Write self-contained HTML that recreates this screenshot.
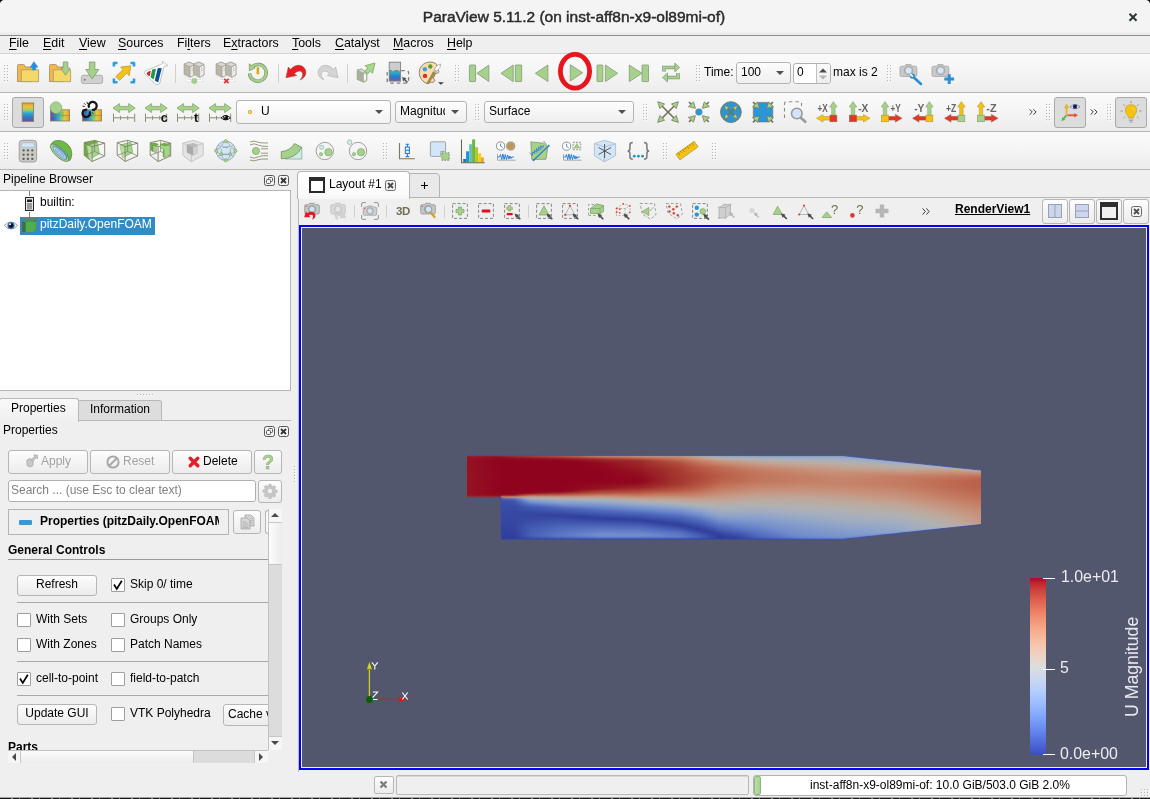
<!DOCTYPE html>
<html><head><meta charset="utf-8"><title>ParaView</title>
<style>
*{box-sizing:border-box;margin:0;padding:0}
html,body{width:1150px;height:799px;overflow:hidden;background:#efefef}
body{position:relative;font-family:"Liberation Sans",sans-serif;font-size:12px;color:#000;line-height:14px}
.a{position:absolute}
.t{position:absolute;white-space:nowrap}
svg,.t,.menu{will-change:transform}
svg{position:absolute;overflow:visible}
#titlebar{left:0;top:0;width:1150px;height:35px;background:#f4f4f4}
#titleline{left:0;top:35px;width:1150px;height:1px;background:#8e8e8e}
#title{left:-1px;width:1150px;text-align:center;top:8px;font-size:15.5px;line-height:18px;color:#2a2a2a;-webkit-text-stroke:0.45px #2a2a2a}
.hl{position:absolute;height:1px;background:#c6c6c6}
.vl{position:absolute;width:1px;background:#c6c6c6}
.menu{position:absolute;top:35px;height:16px;line-height:16px;margin-left:-1px;font-size:12.4px}
.menu u{text-decoration:underline;text-underline-offset:2px}
.hd{position:absolute;width:6px;background-image:radial-gradient(circle,#b4b4b4 0.6px,transparent 0.95px),radial-gradient(circle,#fff 0.6px,transparent 0.95px);background-size:3px 3px;background-position:0 0,1px 1px}
.btn{position:absolute;border:1px solid #b6b6b6;border-radius:3px;background:linear-gradient(#fdfdfd,#ececec)}
.pressed{position:absolute;border:1px solid #a9a9a9;border-radius:3px;background:#dcdcdc}
.combo{position:absolute;border:1px solid #b4b4b4;border-radius:3px;background:linear-gradient(#fdfdfd,#efefef)}
.arr{position:absolute;width:0;height:0;border-left:4px solid transparent;border-right:4px solid transparent;border-top:4.5px solid #505050;margin-top:.5px}
.cb{position:absolute;width:14px;height:14px;border:1px solid #9f9f9f;background:#fff;border-radius:1px}
#flow i{flex:1 1 0;display:block;height:100%}
</style></head><body>
<div class="a" id="titlebar"></div><div class="a" style="left:0;top:31px;width:1150px;height:4px;background:linear-gradient(#f4f4f4,#e8e8e8)"></div><div class="a" id="titleline"></div>
<div class="t" id="title">ParaView 5.11.2 (on inst-aff8n-x9-ol89mi-of)</div>
<svg style="left:1128px;top:12px" width="10" height="10" viewBox="0 0 10 10"><path d="M1.500 1.700L8.500 8.700M8.500 1.700L1.500 8.700" stroke="#2e3436" stroke-width="2"/></svg>
<svg style="left:0;top:0" width="4" height="4"><path d="M0 0H3.5Q0.5 0.5 0 3.5Z" fill="#000"/></svg>
<svg style="left:1146px;top:0" width="4" height="4"><path d="M4 0H0.5Q3.5 0.5 4 3.5Z" fill="#000"/></svg>
<div class="menu" style="left:10px"><u>F</u>ile</div>
<div class="menu" style="left:44px"><u>E</u>dit</div>
<div class="menu" style="left:80px"><u>V</u>iew</div>
<div class="menu" style="left:119px"><u>S</u>ources</div>
<div class="menu" style="left:178px">Fi<u>l</u>ters</div>
<div class="menu" style="left:224px">E<u>x</u>tractors</div>
<div class="menu" style="left:293px"><u>T</u>ools</div>
<div class="menu" style="left:336px"><u>C</u>atalyst</div>
<div class="menu" style="left:394px"><u>M</u>acros</div>
<div class="menu" style="left:448px"><u>H</u>elp</div>
<div class="a" style="left:0;top:54px;width:1150px;height:38px;background:linear-gradient(#fafafa,#f6f6f6 40%,#ececec)"></div>
<div class="a" style="left:0;top:93px;width:1150px;height:38px;background:linear-gradient(#fafafa,#f6f6f6 40%,#ececec)"></div>
<div class="a" style="left:0;top:132px;width:1150px;height:37px;background:linear-gradient(#fafafa,#f6f6f6 40%,#ececec)"></div>
<div class="hl" style="left:0;top:53px;width:1150px;background:#d2d2d2"></div>
<div class="hl" style="left:0;top:92px;width:1150px;background:#b6b6b6"></div>
<div class="hl" style="left:0;top:131px;width:1150px;background:#b6b6b6"></div>
<div class="hl" style="left:0;top:169px;width:1150px;background:#b6b6b6"></div>
<div class="hd" style="left:3px;top:64px;height:18px"></div>
<svg style="left:16px;top:60px" width="24" height="24" viewBox="0 0 24 24"><path d="M1.500 21.500V5.500Q1.500 4.500 2.500 4.500H7.500Q8.500 4.500 8.800 5.500L9.200 7H15V21.500Z" fill="#f2b84e" stroke="#a08c5e" stroke-width=".8"/>
<path d="M5.300 9.800H22.600V21.700H5.300Z" fill="#f5d968" stroke="#a3966a" stroke-width=".8"/>
<path d="M17.900 1.700L21.900 7.200H19.700V9.800H16.200V7.200H14.300Z" fill="#1e8fdc" stroke="#2f7fb5" stroke-width=".5"/></svg>
<svg style="left:48px;top:60px" width="24" height="24" viewBox="0 0 24 24"><path d="M1.500 21.500V5.500Q1.500 4.500 2.500 4.500H7.500Q8.500 4.500 8.800 5.500L9.200 7H15V21.500Z" fill="#f2b84e" stroke="#a08c5e" stroke-width=".8"/>
<path d="M5.300 9.800H22.600V21.700H5.300Z" fill="#f5d968" stroke="#a3966a" stroke-width=".8"/>
<path d="M15.200 2H19.800V8.200H22.200L17.500 15.200L12.900 8.200H15.200Z" fill="#a6d18b" stroke="#7f9a6c" stroke-width=".8"/></svg>
<svg style="left:80px;top:60px" width="24" height="24" viewBox="0 0 24 24"><rect x="1.400" y="15.300" width="21.200" height="8.300" rx="2" fill="#cfd0cf" stroke="#a0a0a0" stroke-width=".8"/>
<circle cx="4.700" cy="19.700" r="1" fill="#777"/>
<path d="M9.400 2H14.900V9.500H18.800L12.200 18.900L5.700 9.500H9.400Z" fill="#a6d18b" stroke="#7f9a6c" stroke-width=".8"/></svg>
<svg style="left:112px;top:60px" width="24" height="24" viewBox="0 0 24 24"><g fill="none" stroke="#2a9fe0" stroke-width="2.600" stroke-linejoin="round"><path d="M1.900 6.500V3H5.500"/><path d="M18.500 3H22V6.500"/><path d="M1.900 18.500V22.300H5.500"/><path d="M18.500 22.300H22V18.500"/></g>
<path d="M18.800 5.800L17.200 15.700L14.600 13.100L7.600 20.400L3.800 16.600L11.100 9.600L8.600 7.100Z" fill="#f5c211" stroke="#a8904a" stroke-width=".7"/></svg>
<svg style="left:143px;top:60px" width="26" height="26" viewBox="0 0 26 26"><path d="M19.300 1.200L25 5.700L21.300 6.200L20.600 7.800L16.800 23Q16.300 24.900 14 24.600Q12.500 24.300 11.500 23.300L1.800 13.600Q.6 12 2.400 11L17.500 4.600L19.600 3.600Z" fill="#fff" stroke="#bcbcbc" stroke-width=".9" stroke-linejoin="round"/>
<path d="M7.700 10.800Q4.200 11.300 3.600 13.400Q4.300 15.400 6.800 16.200Z" fill="#d01f2c"/>
<path d="M9.200 9.600L13 8.800L10.800 19.400L7.500 17.300Z" fill="#1f9a44"/>
<path d="M14.800 8.100L18.800 8.300L15.200 22.400L11.800 20.500Z" fill="#0f4d92"/></svg>
<div class="vl" style="left:175px;top:64px;height:19px;background:#d0d0d0"></div>
<svg style="left:182px;top:60px" width="24" height="24" viewBox="0 0 24 24"><path d="M5 16.500V20.700H19.500V16.500" fill="none" stroke="#d4d4d4" stroke-width="2.400"/><path d="M5 16.500V20.700H19.500V16.500" fill="none" stroke="#fff" stroke-width="1.500"/>
<g stroke="#9a9a92" stroke-width=".6"><path d="M2 4.200L7.200 2L12.600 4.500V15L8 17.300L2 14.200Z" fill="#b6b7a6"/><path d="M8 6.800L12.600 4.500V15L8 17.300Z" fill="#f1e6ea"/><path d="M2 4.200L7.200 2L12.600 4.500L8 6.800Z" fill="#d8d8d0"/>
<path d="M11.500 4.200L16.700 2L22 4.500V15L17.400 17.300L11.500 14.200Z" fill="#b6b7a6"/><path d="M17.400 6.800L22 4.500V15L17.400 17.300Z" fill="#f1e6ea"/><path d="M11.500 4.200L16.700 2L22 4.500L17.400 6.800Z" fill="#d8d8d0"/></g>
<path d="M9.500 8.500H11M9.500 10.500H11M19 8.500H20.500M19 10.500H20.500" stroke="#aaa" stroke-width=".6"/><circle cx="12.300" cy="21" r="2.700" fill="#a6d18b" stroke="#94c27a" stroke-width=".5"/></svg>
<svg style="left:214px;top:60px" width="24" height="24" viewBox="0 0 24 24"><path d="M5 16.500V20.700H19.500V16.500" fill="none" stroke="#d4d4d4" stroke-width="2.400"/><path d="M5 16.500V20.700H19.500V16.500" fill="none" stroke="#fff" stroke-width="1.500"/>
<g stroke="#9a9a92" stroke-width=".6"><path d="M2 4.200L7.200 2L12.600 4.500V15L8 17.300L2 14.200Z" fill="#b6b7a6"/><path d="M8 6.800L12.600 4.500V15L8 17.300Z" fill="#f1e6ea"/><path d="M2 4.200L7.200 2L12.600 4.500L8 6.800Z" fill="#d8d8d0"/>
<path d="M11.500 4.200L16.700 2L22 4.500V15L17.400 17.300L11.500 14.200Z" fill="#b6b7a6"/><path d="M17.400 6.800L22 4.500V15L17.400 17.300Z" fill="#f1e6ea"/><path d="M11.500 4.200L16.700 2L22 4.500L17.400 6.800Z" fill="#d8d8d0"/></g>
<path d="M9.500 8.500H11M9.500 10.500H11M19 8.500H20.500M19 10.500H20.500" stroke="#aaa" stroke-width=".6"/><path d="M10.200 18.800L14.600 23.200M14.600 18.800L10.200 23.200" stroke="#e2323a" stroke-width="1.700"/></svg>
<svg style="left:246px;top:60px" width="24" height="24" viewBox="0 0 24 24"><path d="M3.550 13.300A8.350 8.350 0 1 0 6.200 6.700" fill="none" stroke="#7d8f6a" stroke-width="3.500"/><path d="M3.550 13.300A8.350 8.350 0 1 0 6.200 6.700" fill="none" stroke="#a6d18b" stroke-width="2.300"/>
<path d="M3.300 3.800V10.800L9.200 8.100Z" fill="#a6d18b" stroke="#7d8f6a" stroke-width=".7" stroke-linejoin="round"/><path d="M5.500 8.300L7.500 6.300" stroke="#a6d18b" stroke-width="2.200"/>
<path d="M11.900 7.300V13" stroke="#cfa324" stroke-width="2.500"/><circle cx="11.900" cy="13.100" r="1.500" fill="#e6ae14"/></svg>
<div class="vl" style="left:278px;top:64px;height:19px;background:#d0d0d0"></div>
<svg style="left:283px;top:60px" width="24" height="24" viewBox="0 0 24 24"><path d="M3 17.700L5.300 7.100L7.600 9.400Q11 5.200 15.900 5.200Q22.500 6 22.900 12.700Q22.500 17.500 17.300 19.900Q20 16.500 19.800 14Q19.200 11 16.500 11Q13.500 11 11.200 13.800L13.700 15.500Z" fill="#ec1c24" stroke="#9a4a38" stroke-width=".6" stroke-linejoin="round"/></svg>
<svg style="left:316.9px;top:60px" width="24" height="24" viewBox="0 0 24 24"><g transform="translate(24 0) scale(-1 1)"><path d="M3 17.700L5.300 7.100L7.600 9.400Q11 5.200 15.900 5.200Q22.500 6 22.900 12.700Q22.500 17.500 17.300 19.900Q20 16.500 19.800 14Q19.200 11 16.500 11Q13.500 11 11.200 13.800L13.700 15.500Z" fill="#d4d4d4" stroke="#b4b4b4" stroke-width=".7" stroke-linejoin="round"/></g></svg>
<div class="vl" style="left:347px;top:64px;height:19px;background:#d0d0d0"></div>
<svg style="left:353px;top:60px" width="24" height="24" viewBox="0 0 24 24"><path d="M22 3L12 5.700L14.800 8L11.500 11.300L14.300 14.200L17.600 11L19.500 13.300Z" fill="#a6d98b" stroke="#86a86e" stroke-width=".9" stroke-linejoin="round"/>
<g stroke="#90a884" stroke-width=".8" stroke-linejoin="round"><path d="M4.200 10.200L8.700 9.100L13.700 12.700V20.500L10.400 22.200L4.200 19.400Z" fill="#adad9f"/><path d="M10.100 13L13.700 12.700V20.500L10.400 22.200Z" fill="#efe8ec"/><path d="M4.200 10.200L8.700 9.100L13.700 12.700L10.100 13Z" fill="#dcdcd6"/></g><path d="M11.800 15V19.500" stroke="#fff" stroke-width="1.200"/></svg>
<svg style="left:385px;top:60px" width="24" height="24" viewBox="0 0 24 24"><defs><linearGradient id="gcb" x1="0" y1="0" x2="0" y2="1"><stop offset="0" stop-color="#48b8a0"/><stop offset=".35" stop-color="#1e9ad8"/><stop offset=".6" stop-color="#2a78c0"/><stop offset="1" stop-color="#8058a8"/></linearGradient></defs>
<rect x="4.200" y="2.200" width="11.400" height="8.800" fill="#cdcdcd"/><rect x="4.200" y="10.800" width="11.400" height="10.300" fill="url(#gcb)"/>
<rect x="4.200" y="2.200" width="11.400" height="18.900" fill="none" stroke="#808080" stroke-width=".9"/>
<rect x="2.200" y="10.600" width="21.400" height="12.600" rx="2" fill="none" stroke="#7c7c7c" stroke-width="1.300" stroke-dasharray="3.500 3" stroke-dashoffset="1"/>
<path d="M16.800 16.800L22 18.200L20.600 19.300L23.200 21.900L21.900 23.200L19.300 20.600L18.200 22Z" fill="#505050" stroke="#e8e8e8" stroke-width=".4"/></svg>
<svg style="left:418px;top:60px" width="26" height="26" viewBox="0 0 26 26"><path d="M10.500 2.200C14 1.600 17 2.800 18.600 4.400L20.500 11C21.300 11.200 21.200 12.600 19.800 13L17.500 13.500L15 18.600C16.500 18.600 17.200 20 16.500 21.200C15.800 22.300 14 22.600 13 22L9.600 23.600C5 22.500 1.300 18 1.300 12.500C1.300 7 5.200 3 10.500 2.200Z" fill="#fbdcae" stroke="#7c7858" stroke-width=".9" stroke-linejoin="round"/>
<circle cx="6.900" cy="9.200" r="2.200" fill="#38a4e4"/><circle cx="12.300" cy="6.500" r="2.200" fill="#5c9c38"/><circle cx="7" cy="15.900" r="2.200" fill="#e02c20"/>
<path d="M15.200 11.800L17.300 13L10.400 23.800L8.900 23.200Z" fill="#a88a3c" stroke="#7c7040" stroke-width=".5"/>
<path d="M15 11.600L16.600 9.800L18.600 11L17.400 13Z" fill="#c8c8c8" stroke="#8a8a80" stroke-width=".4"/>
<path d="M22.700 4Q23 8 18.700 11L16.600 9.800Q17.500 5.500 22.700 4Z" fill="#fff" stroke="#8c8c78" stroke-width=".6"/>
<path d="M20 22.300H25.800L22.900 24.800Z" fill="#3c3c3c"/></svg>
<div class="hd" style="left:454px;top:64px;height:18px"></div>
<svg style="left:467px;top:60px" width="24" height="24" viewBox="0 0 24 24"><g fill="#a6d18b" stroke="#84987a" stroke-width=".8"><rect x="2.400" y="5" width="6.200" height="16.600" rx=".6"/><path d="M10 13.300L21.800 5V21.600Z"/></g></svg>
<svg style="left:499px;top:60px" width="24" height="24" viewBox="0 0 24 24"><g fill="#a6d18b" stroke="#84987a" stroke-width=".8"><path d="M2 13.300L14.200 5V21.600Z"/><rect x="16.300" y="5" width="6.400" height="16.600" rx=".6"/></g></svg>
<svg style="left:531px;top:60px" width="24" height="24" viewBox="0 0 24 24"><g fill="#a6d18b" stroke="#84987a" stroke-width=".8"><path d="M4.400 13.300L16.900 5V21.600Z"/></g></svg>
<svg style="left:563px;top:60px" width="24" height="24" viewBox="0 0 24 24"><g fill="#a6d18b" stroke="#84987a" stroke-width=".8"><path d="M19.600 12.800L7.300 4.700V21Z"/></g></svg>
<svg style="left:595px;top:60px" width="24" height="24" viewBox="0 0 24 24"><g fill="#a6d18b" stroke="#84987a" stroke-width=".8"><rect x="2" y="5" width="5.800" height="16.600" rx=".6"/><path d="M22.600 13.300L10.400 5V21.600Z"/></g></svg>
<svg style="left:627px;top:60px" width="24" height="24" viewBox="0 0 24 24"><g fill="#a6d18b" stroke="#84987a" stroke-width=".8"><path d="M15 13.300L2.300 5V21.600Z"/><rect x="15" y="5" width="6.500" height="16.600" rx=".6"/></g></svg>
<svg style="left:659px;top:60px" width="24" height="24" viewBox="0 0 24 24"><g fill="none" stroke="#84987a" stroke-width="3.600" stroke-linejoin="miter"><path d="M5 11.500V7.500H17"/><path d="M19 13V17.500H7.500"/></g><g fill="none" stroke="#a6d18b" stroke-width="2.200"><path d="M5 11.500V7.500H17"/><path d="M19 13V17.500H7.500"/></g><g fill="#a6d18b" stroke="#84987a" stroke-width=".7"><path d="M15.800 3L20.600 7.500L15.800 12Z"/><path d="M8.500 13L3.500 17.500L8.500 22Z"/></g></svg>
<svg style="left:557px;top:51px" width="36" height="41" viewBox="0 0 36 41"><ellipse cx="18" cy="20.300" rx="14.600" ry="16.900" fill="none" stroke="#e8141e" stroke-width="4.800"/></svg>
<div class="hd" style="left:695px;top:64px;height:18px"></div>
<div class="t" style="left:703.500px;top:65px">Time:</div>
<div class="combo" style="left:736px;top:62px;width:55px;height:22px"></div><div class="t" style="left:740.500px;top:65px">100</div><div class="arr" style="left:776px;top:70px"></div>
<div class="a" style="left:793px;top:63px;width:38px;height:21px;background:#fff;border:1px solid #b0b0b0;border-radius:3px"></div><div class="a" style="left:816px;top:64px;width:14px;height:19px;background:linear-gradient(#fbfbfb,#ededed);border-left:1px solid #c0c0c0;border-radius:0 2px 2px 0"></div><div class="t" style="left:797px;top:65px">0</div>
<svg style="left:819px;top:68px" width="8" height="12" viewBox="0 0 8 12"><path d="M0 4.500L4 .5L8 4.500Z" fill="#4a4a4a"/><path d="M0 7.500L4 11.500L8 7.500Z" fill="#b4b4b4"/></svg>
<div class="t" style="left:832.500px;top:65px">max is 2</div>
<div class="hd" style="left:886px;top:64px;height:18px"></div>
<svg style="left:898px;top:60px" width="26" height="26" viewBox="0 0 26 26"><path d="M3.600 6.200H6.500L7.800 4.600H13L14.300 6.200H17.200Q18.800 6.200 18.800 7.800V14.800Q18.800 16.400 17.200 16.400H3.600Q2 16.400 2 14.800V7.800Q2 6.200 3.600 6.200Z" fill="#c9c9c9" stroke="#a2a2a2" stroke-width=".8"/>
<circle cx="10.600" cy="10.500" r="4.300" fill="#b8b8b8" stroke="#999" stroke-width=".6"/><circle cx="10.600" cy="10.500" r="2.900" fill="#d2e8fb"/><path d="M14.200 16L23 24" stroke="#2a8fd0" stroke-width="2.600" stroke-linecap="round"/><circle cx="14.400" cy="16" r="2.600" fill="#2a8fd0"/><path d="M12.200 14.200L15 16.600" stroke="#f4f4f4" stroke-width="1.800"/></svg>
<svg style="left:930px;top:60px" width="26" height="26" viewBox="0 0 26 26"><path d="M3.600 6.200H6.500L7.800 4.600H13L14.300 6.200H17.200Q18.800 6.200 18.800 7.800V14.800Q18.800 16.400 17.200 16.400H3.600Q2 16.400 2 14.800V7.800Q2 6.200 3.600 6.200Z" fill="#c9c9c9" stroke="#a2a2a2" stroke-width=".8"/>
<circle cx="10.600" cy="10.500" r="4.300" fill="#b8b8b8" stroke="#999" stroke-width=".6"/><circle cx="10.600" cy="10.500" r="2.900" fill="#d2e8fb"/><path d="M19.200 14.200V24M14.300 19.100H24.100" stroke="#2a8fd0" stroke-width="3"/></svg>
<div class="hd" style="left:3px;top:103px;height:18px"></div>
<div class="pressed" style="left:12px;top:97px;width:32px;height:31px"></div>
<svg style="left:16px;top:99.7px" width="24" height="24" viewBox="0 0 24 24"><defs><linearGradient id="gv" x1="0" y1="0" x2="0" y2="1"><stop offset="0" stop-color="#e89a28"/><stop offset=".22" stop-color="#e6c83c"/><stop offset=".42" stop-color="#8cc878"/><stop offset=".55" stop-color="#2aa8d8"/><stop offset=".75" stop-color="#2a80c8"/><stop offset="1" stop-color="#6e4a9c"/></linearGradient>
<linearGradient id="gh" x1="0" y1="0" x2="1" y2="0"><stop offset="0" stop-color="#70489c"/><stop offset=".18" stop-color="#3a6cc0"/><stop offset=".4" stop-color="#22b0dc"/><stop offset=".52" stop-color="#58c09a"/><stop offset=".62" stop-color="#a8cc50"/><stop offset=".76" stop-color="#e8c838"/><stop offset="1" stop-color="#e8982a"/></linearGradient></defs>
<rect x="6.200" y="3" width="11.400" height="18.400" fill="url(#gv)" stroke="#8a8060" stroke-width=".9"/></svg>
<svg style="left:47px;top:99.7px" width="24" height="24" viewBox="0 0 24 24"><rect x="3.400" y="9.800" width="19.200" height="11.200" fill="url(#gh)" stroke="#8a8060" stroke-width=".8"/><path d="M3.400 15.400H22.600M9.500 13V18M15.800 11.500V17.500" stroke="#8a8060" stroke-width=".7" opacity=".8"/>
<circle cx="9" cy="7.700" r="5.800" fill="#a6d18b" stroke="#8aa878" stroke-width=".8"/></svg>
<svg style="left:79px;top:99.7px" width="24" height="24" viewBox="0 0 24 24"><rect x="3.400" y="9.800" width="19.200" height="11.200" fill="url(#gh)" stroke="#8a8060" stroke-width=".8"/><path d="M3.400 15.400H22.600M15.800 11.500V17.500" stroke="#8a8060" stroke-width=".7" opacity=".8"/>
<g fill="none" stroke="#151515" stroke-width="2.300" stroke-linecap="round"><path d="M9.800 6.800A4 4 0 1 1 14 9.900"/><path d="M7.300 9.600A3.700 3.700 0 1 0 10.800 12.300"/></g>
<path d="M3.500 6L5.800 6.500M5 3.200L6.600 4.800M8 1.800L8.500 4M14 10.800L16 10.200M12.800 12.500L14.600 13.800M11.500 14.500L12 16" stroke="#151515" stroke-width=".9"/></svg>
<svg style="left:112px;top:99.7px" width="24" height="24" viewBox="0 0 24 24"><path d="M1 8.100L7.600 3.600V6.400H16.600V3.600L23.200 8.100L16.600 12.600V9.800H7.600V12.600Z" fill="#a6d18b" stroke="#86a470" stroke-width=".8"/>
<path d="M1.500 17.800H22.700M1.500 13.600V22M22.700 13.600V22M8.500 15.800V19.800M15.700 15.800V19.800" stroke="#8a9070" stroke-width="1" fill="none"/></svg>
<svg style="left:144px;top:99.7px" width="24" height="24" viewBox="0 0 24 24"><path d="M1 8.100L7.600 3.600V6.400H16.600V3.600L23.200 8.100L16.600 12.600V9.800H7.600V12.600Z" fill="#a6d18b" stroke="#86a470" stroke-width=".8"/>
<path d="M1.500 17.800H22.700M1.500 13.600V22M22.700 13.600V22M8.500 15.800V19.800M15.700 15.800V19.800" stroke="#8a9070" stroke-width="1" fill="none"/><text x="16.800" y="21.800" font-family="Liberation Sans" font-weight="bold" font-size="12.500" fill="#111">c</text></svg>
<svg style="left:176px;top:99.7px" width="24" height="24" viewBox="0 0 24 24"><path d="M1 8.100L7.600 3.600V6.400H16.600V3.600L23.200 8.100L16.600 12.600V9.800H7.600V12.600Z" fill="#a6d18b" stroke="#86a470" stroke-width=".8"/>
<path d="M1.500 17.800H22.700M1.500 13.600V22M22.700 13.600V22M8.500 15.800V19.800M15.700 15.800V19.800" stroke="#8a9070" stroke-width="1" fill="none"/><text x="18" y="21.800" font-family="Liberation Sans" font-weight="bold" font-size="12.500" fill="#111">t</text></svg>
<svg style="left:208px;top:99.7px" width="24" height="24" viewBox="0 0 24 24"><path d="M1 8.100L7.600 3.600V6.400H16.600V3.600L23.200 8.100L16.600 12.600V9.800H7.600V12.600Z" fill="#a6d18b" stroke="#86a470" stroke-width=".8"/>
<path d="M1.500 17.800H22.700M1.500 13.600V22M22.700 13.600V22M8.500 15.800V19.800M15.700 15.800V19.800" stroke="#8a9070" stroke-width="1" fill="none"/><path d="M13 17.800Q17.500 13.500 22.500 17.800Q17.500 22 13 17.800Z" fill="#fff" stroke="#111" stroke-width=".9"/><circle cx="17.700" cy="17.600" r="2.500" fill="#111"/><circle cx="16.800" cy="16.800" r=".7" fill="#fff"/></svg>
<div class="combo" style="left:236px;top:100px;width:155px;height:24px;background:linear-gradient(#ffffff,#f2f2f2)"></div><div class="a" style="left:247.800px;top:109.600px;width:4.500px;height:4.500px;border-radius:1.200px;background:#f8d878;border:1px solid #e0a020"></div><div class="t" style="left:261px;top:104px">U</div><div class="arr" style="left:375px;top:109px"></div>
<div class="combo" style="left:395px;top:101px;width:72px;height:22px"></div><div class="t" style="left:400px;top:104px;width:45px;overflow:hidden">Magnitude</div><div class="arr" style="left:451px;top:109px"></div>
<div class="hd" style="left:474px;top:103px;height:18px"></div>
<div class="combo" style="left:484px;top:101px;width:150px;height:22px"></div><div class="t" style="left:489px;top:104px">Surface</div><div class="arr" style="left:618px;top:109px"></div>
<div class="hd" style="left:642px;top:103px;height:18px"></div>
<svg style="left:655.5px;top:99.7px" width="24" height="24" viewBox="0 0 24 24"><path d="M5 5L19.200 19.200M19.200 5L5 19.200" stroke="#6e7358" stroke-width="1.600"/>
<g fill="#a6d18b" stroke="#727a5c" stroke-width=".8" stroke-linejoin="round"><path d="M1.700 1.700L8.600 3.900L3.900 8.600Z"/><path d="M22.400 1.700L20.200 8.600L15.500 3.900Z"/><path d="M1.700 22.400L3.900 15.500L8.600 20.200Z"/><path d="M22.400 22.400L15.500 20.200L20.200 15.500Z"/></g></svg>
<svg style="left:687px;top:99.7px" width="24" height="24" viewBox="0 0 24 24"><path d="M2 2L5 5M21.800 2L18.800 5M2 22L5 19M21.800 22L18.800 19" stroke="#6e7358" stroke-width="1.700"/>
<g fill="#a6d18b" stroke="#727a5c" stroke-width=".8" stroke-linejoin="round"><path d="M8.400 8.300L1.400 6.600L6.500 1.900Z"/><path d="M15.400 8.300L22.400 6.600L17.300 1.900Z"/><path d="M8.400 15.700L1.400 17.400L6.500 22.100Z"/><path d="M15.400 15.700L22.400 17.400L17.300 22.100Z"/></g>
<circle cx="11.900" cy="12" r="3.300" fill="#2a96d8" stroke="#6a8a9a" stroke-width=".6"/></svg>
<svg style="left:719px;top:99.7px" width="24" height="24" viewBox="0 0 24 24"><circle cx="11.900" cy="12.100" r="10.400" fill="#2a96d8" stroke="#74745a" stroke-width=".9"/>
<path d="M7.500 7.700L16.300 16.500M16.300 7.700L7.500 16.500" stroke="#6e7358" stroke-width="1.400"/>
<g fill="#a6d18b" stroke="#727a5c" stroke-width=".8" stroke-linejoin="round"><path d="M5.200 5.500L10.400 6.900L6.700 10.800Z"/><path d="M18.600 5.500L13.400 6.900L17.100 10.800Z"/><path d="M5.200 18.700L10.400 17.300L6.700 13.400Z"/><path d="M18.600 18.700L13.400 17.300L17.100 13.400Z"/></g></svg>
<svg style="left:751px;top:99.7px" width="24" height="24" viewBox="0 0 24 24"><rect x="2.300" y="2.400" width="19.500" height="19.500" rx="5.500" fill="#2a96d8" stroke="#74745a" stroke-width=".7"/>
<path d="M2 2L5 5M22 2L19 5M2 22.300L5 19.300M22 22.300L19 19.300" stroke="#6e7358" stroke-width="1.700"/>
<g fill="#a6d18b" stroke="#727a5c" stroke-width=".8" stroke-linejoin="round"><path d="M8.500 8.400L1.500 6.700L6.600 2Z"/><path d="M15.600 8.400L22.600 6.700L17.500 2Z"/><path d="M8.500 15.900L1.500 17.600L6.600 22.300Z"/><path d="M15.600 15.900L22.600 17.600L17.500 22.300Z"/></g></svg>
<svg style="left:783px;top:99.7px" width="24" height="24" viewBox="0 0 24 24"><path d="M1.500 18V3.500Q1.500 1.800 3.200 1.800H17Q18.500 1.800 18.500 3.500V6" fill="none" stroke="#8a8a8a" stroke-width="1.100" stroke-dasharray="3.500 3"/>
<path d="M17.500 17.500L22.300 21.800" stroke="#9a9a9a" stroke-width="2.600" stroke-linecap="round"/>
<circle cx="13.800" cy="13.500" r="5.300" fill="#d2e6f9" stroke="#9a9a9a" stroke-width="1.600"/></svg>
<svg style="left:815.7px;top:99.7px" width="24" height="24" viewBox="0 0 24 24"><path d="M14 16.500H7V14.500L0.6 18.300L7 22.100V20.100H14Z" fill="#f5c211" stroke="#b89a3a" stroke-width=".6"/><path d="M15.7 15.500V7H13.6L17.4 1.600L21.2 7H19.1V15.500Z" fill="#a6d18b" stroke="#86a470" stroke-width=".6"/><rect x="14" y="15.200" width="6.800" height="6.500" fill="#e03828" stroke="#a85a40" stroke-width=".7"/><text x="1.6" y="11.800" font-family="Liberation Sans" font-size="10" font-weight="bold" fill="#666" textLength="10.200" lengthAdjust="spacingAndGlyphs">+X</text></svg>
<svg style="left:847.6px;top:99.7px" width="24" height="24" viewBox="0 0 24 24"><path d="M8.4 16.500H15.4V14.500L22 18.300L15.4 22.100V20.100H8.4Z" fill="#f5c211" stroke="#b89a3a" stroke-width=".6"/><path d="M3.3 15.500V7H1.2L5 1.600L8.8 7H6.7V15.500Z" fill="#a6d18b" stroke="#86a470" stroke-width=".6"/><rect x="1.6" y="15.200" width="6.800" height="6.500" fill="#e03828" stroke="#a85a40" stroke-width=".7"/><text x="10.2" y="11.800" font-family="Liberation Sans" font-size="10" font-weight="bold" fill="#666" textLength="10.200" lengthAdjust="spacingAndGlyphs">-X</text></svg>
<svg style="left:879.7px;top:99.7px" width="24" height="24" viewBox="0 0 24 24"><path d="M8.4 16.500H15.4V14.500L22 18.300L15.4 22.100V20.100H8.4Z" fill="#e03828" stroke="#a85a40" stroke-width=".6"/><path d="M3.3 15.500V7H1.2L5 1.600L8.8 7H6.7V15.500Z" fill="#a6d18b" stroke="#86a470" stroke-width=".6"/><rect x="1.6" y="15.200" width="6.800" height="6.500" fill="#f5c211" stroke="#b89a3a" stroke-width=".7"/><text x="10.6" y="11.800" font-family="Liberation Sans" font-size="10" font-weight="bold" fill="#666" textLength="10.200" lengthAdjust="spacingAndGlyphs">+Y</text></svg>
<svg style="left:911.6px;top:99.7px" width="24" height="24" viewBox="0 0 24 24"><path d="M14 16.500H7V14.500L0.6 18.300L7 22.100V20.100H14Z" fill="#e03828" stroke="#a85a40" stroke-width=".6"/><path d="M15.7 15.500V7H13.6L17.4 1.600L21.2 7H19.1V15.500Z" fill="#a6d18b" stroke="#86a470" stroke-width=".6"/><rect x="14" y="15.200" width="6.800" height="6.500" fill="#f5c211" stroke="#b89a3a" stroke-width=".7"/><text x="2.2" y="11.800" font-family="Liberation Sans" font-size="10" font-weight="bold" fill="#666" textLength="10.200" lengthAdjust="spacingAndGlyphs">-Y</text></svg>
<svg style="left:943.6px;top:99.7px" width="24" height="24" viewBox="0 0 24 24"><path d="M14 16.500H7V14.500L0.6 18.300L7 22.100V20.100H14Z" fill="#e03828" stroke="#a85a40" stroke-width=".6"/><path d="M15.7 15.500V7H13.6L17.4 1.600L21.2 7H19.1V15.500Z" fill="#f5c211" stroke="#b89a3a" stroke-width=".6"/><rect x="14" y="15.200" width="6.800" height="6.500" fill="#a6d18b" stroke="#86a470" stroke-width=".7"/><text x="1.9" y="11.800" font-family="Liberation Sans" font-size="10" font-weight="bold" fill="#666" textLength="10.200" lengthAdjust="spacingAndGlyphs">+Z</text></svg>
<svg style="left:975.5px;top:99.7px" width="24" height="24" viewBox="0 0 24 24"><path d="M8.4 16.500H15.4V14.500L22 18.300L15.4 22.100V20.100H8.4Z" fill="#e03828" stroke="#a85a40" stroke-width=".6"/><path d="M3.3 15.500V7H1.2L5 1.600L8.8 7H6.7V15.500Z" fill="#f5c211" stroke="#b89a3a" stroke-width=".6"/><rect x="1.6" y="15.200" width="6.800" height="6.500" fill="#a6d18b" stroke="#86a470" stroke-width=".7"/><text x="10.3" y="11.800" font-family="Liberation Sans" font-size="10" font-weight="bold" fill="#666" textLength="10.200" lengthAdjust="spacingAndGlyphs">-Z</text></svg>
<svg style="left:1028.8px;top:109.2px" width="8" height="6" viewBox="0 0 8 6"><path d="M.6 .3L3.300 3L.6 5.700M4.400 .3L7.100 3L4.400 5.700" fill="none" stroke="#3a3a3a" stroke-width="1"/></svg>
<div class="hd" style="left:1045px;top:103px;height:18px"></div>
<div class="pressed" style="left:1054px;top:97px;width:32px;height:31px"></div>
<svg style="left:1058px;top:99.7px" width="24" height="24" viewBox="0 0 24 24"><path d="M8.600 14.600V6.500" stroke="#e8b820" stroke-width="1.800"/><path d="M8.600 4L10.800 7.800H6.400Z" fill="#f0c020" stroke="#c09a20" stroke-width=".4"/>
<path d="M9.500 15.300H17" stroke="#e85030" stroke-width="1.800"/><path d="M20 15.300L16.300 17.500V13.100Z" fill="#e85030"/>
<path d="M8.600 15.200L5 19.500" stroke="#5ab848" stroke-width="1.800"/><path d="M3.500 21.300L4.300 17L7.300 19.600Z" fill="#5ab848"/>
<path d="M12 6.800Q17 2.500 22 6.800Q17 10.800 12 6.800Z" fill="#fff" stroke="#555" stroke-width=".6"/><circle cx="17" cy="6.600" r="2.300" fill="#2a3aa0"/><circle cx="17" cy="6.600" r="1.200" fill="#111"/></svg>
<svg style="left:1089.8px;top:109.2px" width="8" height="6" viewBox="0 0 8 6"><path d="M.6 .3L3.300 3L.6 5.700M4.400 .3L7.100 3L4.400 5.700" fill="none" stroke="#3a3a3a" stroke-width="1"/></svg>
<div class="hd" style="left:1106px;top:103px;height:18px"></div>
<div class="pressed" style="left:1115px;top:97px;width:32px;height:31px"></div>
<svg style="left:1119px;top:99.7px" width="24" height="24" viewBox="0 0 24 24"><path d="M12 4.800Q17.700 4.800 17.700 10.300Q17.700 12.800 15.800 14.800Q14.800 16 14.800 17.500H9.200Q9.200 16 8.200 14.800Q6.300 12.800 6.300 10.300Q6.300 4.800 12 4.800Z" fill="#f5c211" stroke="#c9a227" stroke-width=".7"/>
<path d="M13 7Q15.300 7.800 15.300 10.500" fill="none" stroke="#f9dc78" stroke-width="1"/>
<path d="M9.600 19H14.400M10 20.600H14M10.800 22.200H13.200" stroke="#a8a8a8" stroke-width="1.100"/>
<path d="M12 1V3.200M4.500 4.300L6 5.800M19.500 4.300L18 5.800M1.500 11H3.800M22.500 11H20.200M4.500 18L6 16.600M19.500 18L18 16.600" stroke="#8a8a8a" stroke-width=".9"/></svg>
<div class="hd" style="left:3px;top:142px;height:18px"></div>
<svg style="left:16px;top:138.8px" width="24" height="24" viewBox="0 0 24 24"><rect x="3.200" y="1.300" width="17.400" height="21.700" rx="3" fill="#c9c9c9" stroke="#9c9c9c" stroke-width=".9"/>
<rect x="5.600" y="3.900" width="12.600" height="4.300" rx="1.500" fill="#d2e6f9" stroke="#9fb4c8" stroke-width=".5"/>
<g fill="#5c5c44"><circle cx="7.600" cy="11.400" r="1.150"/><circle cx="11.900" cy="11.400" r="1.150"/><circle cx="16.300" cy="11.400" r="1.150"/><circle cx="7.600" cy="15.700" r="1.150"/><circle cx="11.900" cy="15.700" r="1.150"/><circle cx="16.300" cy="15.700" r="1.150"/><circle cx="7.600" cy="19.900" r="1.150"/><circle cx="11.900" cy="19.900" r="1.150"/><circle cx="16.300" cy="19.900" r="1.150"/></g></svg>
<svg style="left:49px;top:138.8px" width="24" height="24" viewBox="0 0 24 24"><path d="M1.950 5.660Q4 1 10.300 1.500Q17 2 21.500 9Q24 15 21.800 20Q20.800 22.200 19.200 21.800Z" fill="#6cbc44" stroke="#6a7a50" stroke-width=".8"/>
<g transform="rotate(43 10.600 13.700)"><ellipse cx="10.600" cy="13.700" rx="11.800" ry="4.600" fill="#a6d98b" stroke="#6a7a50" stroke-width=".8"/>
<ellipse cx="10.900" cy="13.300" rx="9.200" ry="3.300" fill="#2f93cc" stroke="#4a7a9a" stroke-width=".5"/>
<ellipse cx="10.700" cy="13.800" rx="8.600" ry="2.800" fill="#a8d4f4" stroke="#7a9ab0" stroke-width=".5"/>
<ellipse cx="10.700" cy="13.800" rx="5.600" ry="1.800" fill="none" stroke="#7a9ab0" stroke-width=".6"/>
<ellipse cx="10.700" cy="13.800" rx="3" ry=".9" fill="#b8dcf6" stroke="#7a9ab0" stroke-width=".6"/></g></svg>
<svg style="left:82px;top:138.8px" width="24" height="24" viewBox="0 0 24 24"><path d="M2.200 3.600L12.600 1.400L15.500 2.300L15.500 4L7 20.300L2.200 16.300Z" fill="#6cb040"/><path d="M5 6.200L15.500 3.400L17.300 14.800L7 20.300Z" fill="#a2d689" stroke="#7e9a68" stroke-width=".6"/><path d="M5 6.200L10.100 8L10.100 18.700L7 20.300Z" fill="#b4de9e"/><g fill="none" stroke="#7e7e64" stroke-width=".9" stroke-linejoin="round"><path d="M2.200 3.600L12.600 1.400L22.700 4.200V16.900L10.100 22.500L2.200 16.300Z"/><path d="M2.200 3.600L10.100 7.700L22.700 4.200M10.100 7.700V22.500"/><path d="M12.600 1.400V12.500L2.200 16.300M12.600 12.500L22.700 16.900" stroke-width=".7"/></g></svg>
<svg style="left:115px;top:138.8px" width="24" height="24" viewBox="0 0 24 24"><path d="M4.900 6.100L15.900 3.100L17.600 13.400L7.600 18.800Z" fill="#a2d689" stroke="#7e9a68" stroke-width=".6"/><path d="M4.900 6.100L10.100 8L10.100 17.500L7.600 18.800Z" fill="#b4de9e"/><g fill="none" stroke="#7e7e64" stroke-width=".9" stroke-linejoin="round"><path d="M2.200 3.600L12.600 1.400L22.700 4.200V16.900L10.100 22.500L2.200 16.300Z"/><path d="M2.200 3.600L10.100 7.700L22.700 4.200M10.100 7.700V22.500"/><path d="M12.600 1.400V12.500L2.200 16.300M12.600 12.500L22.700 16.900" stroke-width=".7"/></g></svg>
<svg style="left:148px;top:138.8px" width="24" height="24" viewBox="0 0 24 24"><g fill="none" stroke="#7e7e64" stroke-width=".9" stroke-linejoin="round"><path d="M2.200 3.600L12.600 1.400L22.700 4.200V16.900L10.100 22.500L2.200 16.300Z"/><path d="M2.200 3.600L10.100 7.700L22.700 4.200M10.100 7.700V22.500"/><path d="M12.600 1.400V12.500L2.200 16.300M12.600 12.500L22.700 16.900" stroke-width=".7"/></g><path d="M2.800 4.800L5 6V12.500L2.800 11.300Z" fill="#6cb040" stroke="#6a8a50" stroke-width=".4"/><path d="M5 6L8.300 7.200V13.800L5 12.500Z" fill="#a2d689" stroke="#6a8a50" stroke-width=".5"/><path d="M2.800 4.800L6.500 3.800L10.500 5.200L8.300 7.200L5 6Z" fill="#6cb040" stroke="#6a8a50" stroke-width=".4"/>
<path d="M12.500 5.300L21.800 5.800V16L16.200 18.600V10.300L12.500 9.300Z" fill="#a2d689" stroke="#6a8a50" stroke-width=".5"/><path d="M14.800 10.800L16.200 10.300V18.600L14.800 18Z" fill="#6cb040"/><path d="M12.500 5.300L16.500 4L21.800 5.800L16.500 7Z" fill="#6cb040" stroke="#6a8a50" stroke-width=".4"/></svg>
<svg style="left:181px;top:138.8px" width="24" height="24" viewBox="0 0 24 24"><g stroke="#c4c4c4" stroke-width=".9" stroke-linejoin="round"><path d="M1.800 4.200L12 1.300L22.300 4.600V16.300L10.200 22.800L1.800 16.300Z" fill="#e4e4e4"/><path d="M1.800 4.200L10.500 7.800L22.300 4.600M10.500 7.800L10.200 22.800" fill="none"/></g>
<path d="M5.800 5.800L12.500 4.200L17 6.200V14L12 16.500L5.800 13.500Z" fill="#a8a8a8"/><path d="M12 8.200L17 6.200V14L12 16.500Z" fill="#d0d0d0"/><path d="M5.800 5.800L12.500 4.200L17 6.200L12 8.200Z" fill="#bcbcbc"/></svg>
<svg style="left:214px;top:138.8px" width="24" height="24" viewBox="0 0 24 24"><circle cx="11.800" cy="11.800" r="9.700" fill="#d2e6f9" stroke="#8a96a0" stroke-width=".8"/>
<g fill="none" stroke="#8a96a0" stroke-width=".7"><ellipse cx="11.800" cy="11.800" rx="4.600" ry="9.700"/><ellipse cx="11.800" cy="11.800" rx="9.700" ry="3.600"/><path d="M4 6.500Q11.800 10 19.600 6.500M4 17Q11.800 13.500 19.600 17"/></g>
<g fill="#a6d18b" stroke="#7da065" stroke-width=".5"><circle cx="11.800" cy="2.200" r="1.700"/><circle cx="11.800" cy="21.300" r="1.700"/><circle cx="2.200" cy="11.800" r="1.700"/><circle cx="21.400" cy="11.800" r="1.700"/><circle cx="7.400" cy="15" r="1.500"/><circle cx="16.200" cy="15" r="1.500"/></g><circle cx="7.800" cy="8.600" r="1.100" fill="#e4f4e0"/><circle cx="15.800" cy="8.600" r="1.100" fill="#e4f4e0"/></svg>
<svg style="left:246px;top:138.8px" width="24" height="24" viewBox="0 0 24 24"><g fill="none" stroke="#8a9070" stroke-width=".9"><path d="M4 3Q8 1 12 3.200Q14 4.200 22 4"/><path d="M4 6Q8 3.500 12.500 6.200Q15 7.600 22 7.400"/><path d="M4 21Q8 23 12 20.800Q14 19.800 22 20"/><path d="M4 18Q8 20.500 12.500 17.800Q15 16.400 22 16.600"/><path d="M15 9.800H22M15 14.200H22"/></g>
<circle cx="10" cy="12" r="3.600" fill="#a6d18b" stroke="#7da065" stroke-width=".7"/></svg>
<svg style="left:279px;top:138.8px" width="24" height="24" viewBox="0 0 24 24"><path d="M14 13L22.800 8.500V20H6Z" fill="#cdeee4" stroke="#8a9a94" stroke-width=".7"/>
<path d="M2.300 12.600Q11 12 15.500 4.600L22.800 8.300Q17 19.600 2.300 19.800Z" fill="#a6d18b" stroke="#7e9468" stroke-width=".9"/></svg>
<svg style="left:312px;top:138.8px" width="24" height="24" viewBox="0 0 24 24"><circle cx="12.800" cy="12" r="8.700" fill="#f4f4f4" stroke="#8a8a8a" stroke-width=".8"/><circle cx="16.400" cy="13.200" r="3.700" fill="#a6d18b" stroke="#7da065" stroke-width=".6"/><circle cx="9" cy="15.200" r="1.700" fill="#a6d18b" stroke="#7da065" stroke-width=".5"/><circle cx="9.600" cy="8.300" r="2.100" fill="#cdeee4" stroke="#8aa8a0" stroke-width=".6"/></svg>
<svg style="left:345px;top:138.8px" width="24" height="24" viewBox="0 0 24 24"><circle cx="13" cy="12" r="8.700" fill="#f4f4f4" stroke="#8a8a8a" stroke-width=".8"/><circle cx="16" cy="13.200" r="3.700" fill="#a6d18b" stroke="#7da065" stroke-width=".6"/><circle cx="9" cy="15.200" r="1.700" fill="#a6d18b" stroke="#7da065" stroke-width=".5"/><circle cx="4.600" cy="3.200" r="2.300" fill="#cdeee4" stroke="#8aa8a0" stroke-width=".6"/></svg>
<div class="hd" style="left:382px;top:142px;height:18px"></div>
<svg style="left:394px;top:138.8px" width="24" height="24" viewBox="0 0 24 24"><path d="M5.500 4V19.700H20.800" fill="none" stroke="#7a7a5c" stroke-width="1.100"/>
<g fill="none" stroke="#2a7fd0" stroke-width="1.100"><path d="M13.400 5.300V17.600M11.600 5.300H15.200M11.600 17.600H15.200"/><rect x="11.400" y="8" width="4" height="6.500" fill="#f0f6fc"/><path d="M11.400 11.300H15.400"/></g></svg>
<svg style="left:427px;top:138.8px" width="24" height="24" viewBox="0 0 24 24"><path d="M3.400 4Q3.400 2.800 4.600 2.800H17.400Q18.600 2.800 18.600 4V12.400H13.800V17.400H4.600Q3.400 17.400 3.400 16.200Z" fill="#d2e6f9" stroke="#9a9a9a" stroke-width=".9"/>
<rect x="14.800" y="13.800" width="7.400" height="7.400" fill="#a6d18b" stroke="#6e8a5c" stroke-width=".9" stroke-dasharray="1.800 1.200"/></svg>
<svg style="left:460px;top:138.8px" width="24" height="24" viewBox="0 0 24 24"><rect x="3.200" y="20" width="2.900" height="3.500" fill="#2a6fb0"/><rect x="6.100" y="12.300" width="3" height="11.200" fill="#1e90e0"/><rect x="9.100" y="5.200" width="3" height="18.300" fill="#6cc0b0"/><rect x="12.100" y=".4" width="3" height="23.100" fill="#6ab840"/><rect x="15.100" y="8.200" width="3" height="15.300" fill="#b0c830"/><rect x="18.100" y="14.300" width="3" height="9.200" fill="#f5d010"/><rect x="21.100" y="18.300" width="2.700" height="5.200" fill="#f0a020"/>
<path d="M1.500 .5V23.700H24.700" fill="none" stroke="#6a6a50" stroke-width="1.100"/></svg>
<svg style="left:493px;top:138.8px" width="24" height="24" viewBox="0 0 24 24"><circle cx="7.600" cy="7" r="4.100" fill="#fff" stroke="#7a7a7a" stroke-width=".8"/><path d="M7.600 4.500V7.200L9.600 8.500" fill="none" stroke="#2a7fd0" stroke-width=".9"/>
<circle cx="17.700" cy="7" r="4.100" fill="#c9a562" stroke="#8a8a7a" stroke-width=".8"/><circle cx="17.700" cy="7" r="2.400" fill="#b89a5a" stroke="#a08850" stroke-width=".4"/>
<path d="M4.500 15V21.200H22.500" fill="none" stroke="#a8a8a8" stroke-width="1"/><path d="M4.5 18h2l1 -2.500l1.200 5l1.200 -5.500l1.200 5.500l1.200 -5l1.200 5l1.200 -4.500l1.200 4l1 -3l1 2.500l1 -1.500h2" fill="none" stroke="#2a7fd0" stroke-width="1"/></svg>
<svg style="left:526px;top:138.8px" width="24" height="24" viewBox="0 0 24 24"><path d="M4.800 2.900L17.500 4.200L21.800 7.800L20 20.200L5.800 20.600Z" fill="#a6d18b" stroke="#7e9468" stroke-width=".8"/>
<path d="M3.500 13.500L6.500 17M17.500 2L20.500 5.500" stroke="#7a7a5c" stroke-width=".8"/>
<path d="M7.500 21.200L22.700 6.700" stroke="#2a7fd0" stroke-width="1.200"/><circle cx="7.500" cy="21.200" r="1" fill="#2a7fd0"/><circle cx="22.700" cy="6.700" r="1" fill="#2a7fd0"/>
<path d="M5.500 16.500l1.500 -1.500l-.5 -2l2.500 1.500l-.8 -3.200l3 2l-1 -3.800l3 2.500l-.8 -4l2.800 2.400l-.5 -3.600l2.300 1.600l.5 -2" fill="none" stroke="#2a7fd0" stroke-width=".9"/></svg>
<svg style="left:559px;top:138.8px" width="24" height="24" viewBox="0 0 24 24"><circle cx="7.600" cy="7.200" r="4.100" fill="#fff" stroke="#7a7a7a" stroke-width=".8"/><path d="M7.600 4.700V7.400L9.600 8.700" fill="none" stroke="#2a7fd0" stroke-width=".9"/>
<rect x="14" y="3.300" width="7.800" height="7.400" fill="#eef4ea" stroke="#7a7a7a" stroke-width=".8" stroke-dasharray="1.800 1.200"/><path d="M17.900 4.500L20.600 9H15.200Z" fill="#a6d18b" stroke="#7da065" stroke-width=".5"/>
<path d="M4.500 15V21.200H22.500" fill="none" stroke="#a8a8a8" stroke-width="1"/><path d="M4.5 18h2l1 -2.500l1.200 5l1.200 -5.500l1.200 5.500l1.200 -5l1.200 5l1.200 -4.500l1.200 4l1 -3l1 2.500l1 -1.500h2" fill="none" stroke="#2a7fd0" stroke-width="1"/></svg>
<svg style="left:592px;top:138.8px" width="24" height="24" viewBox="0 0 24 24"><g stroke="#b4bcc4" stroke-width=".9" stroke-linejoin="round"><path d="M2.400 4.500L12.600 1.300L23.600 4.800V16.600L12.400 22.900L2.400 16.600Z" fill="#d2e6f9"/><path d="M2.400 4.500L12.400 8L23.600 4.800M12.400 8V22.900" fill="none"/></g>
<path d="M12.600 5V19M6.500 8.500L19 15.500M19 8.500L6.500 15.500" stroke="#4a4a4a" stroke-width=".9"/></svg>
<svg style="left:626px;top:138.8px" width="24" height="24" viewBox="0 0 24 24"><g fill="none" stroke="#7a7a7a" stroke-width="1.500"><path d="M6.800 3.600Q3.900 3.600 3.900 6V9.500Q3.900 11.900 1.600 11.900Q3.900 11.900 3.900 14.300V17.800Q3.900 20.200 6.800 20.200"/><path d="M18 3.600Q20.900 3.600 20.900 6V9.500Q20.900 11.900 23.200 11.900Q20.900 11.900 20.900 14.300V17.800Q20.900 20.200 18 20.200"/></g>
<g fill="#2a8fd0"><circle cx="8.300" cy="17.200" r="1.400"/><circle cx="12.400" cy="17.200" r="1.400"/><circle cx="16.500" cy="17.200" r="1.400"/></g></svg>
<div class="hd" style="left:662px;top:142px;height:18px"></div>
<svg style="left:675px;top:138.8px" width="24" height="24" viewBox="0 0 24 24"><g transform="rotate(-35.500 12 11.600)"><rect x=".8" y="8.200" width="22.400" height="6.800" fill="#f5c211" stroke="#b8962e" stroke-width=".7"/><path d="M3.500 8.200v3M6.300 8.200v2M9.100 8.200v3M11.900 8.200v2M14.700 8.200v3M17.500 8.200v2M20.300 8.200v3" stroke="#9a7e28" stroke-width=".8"/></g></svg>
<div class="hd" style="left:711px;top:142px;height:18px"></div>
<svg style="left:304px;top:203px" width="17" height="17" viewBox="0 0 17 17"><path d="M2 1.700H4.500L5.500 .3H10.500L11.500 1.700H14Q15.300 1.700 15.300 3V9.700Q15.300 11 14 11H2Q.7 11 .7 9.700V3Q.7 1.700 2 1.700Z" fill="#c6c6c6" stroke="#969696" stroke-width=".8"/><circle cx="8" cy="6.200" r="3.700" fill="#adadad" stroke="#969696" stroke-width=".6"/><circle cx="8" cy="6.200" r="2.400" fill="#cfe6fa"/><circle cx="2.200" cy="3.300" r=".6" fill="#e03030"/><path d="M.200 14.200L2 8.600L3.500 10.300Q7.200 7.600 10.300 9.800Q12.600 12 10.600 14.900Q9.600 16.200 8.200 16.600L8.900 14.600Q9.500 12 7.400 11.800Q6 11.800 5 12.600L6.500 14.300Z" fill="#e8141e"/></svg>
<svg style="left:330px;top:203px" width="17" height="17" viewBox="0 0 17 17"><path d="M2 1.700H4.500L5.500 .3H10.500L11.500 1.700H14Q15.300 1.700 15.300 3V9.700Q15.300 11 14 11H2Q.7 11 .7 9.700V3Q.7 1.700 2 1.700Z" fill="#d8d8d8" stroke="#c0c0c0" stroke-width=".8"/><circle cx="8" cy="6.200" r="3.700" fill="#d0d0d0" stroke="#c0c0c0" stroke-width=".6"/><circle cx="8" cy="6.200" r="2.400" fill="#e6e6e6"/><path d="M15.500 14.700L13.800 9.600L12.400 11.200Q9 8.600 6 10.600Q4 12.500 5.700 15.200Q6.700 16.500 8 16.800L7.400 15Q6.700 12.600 8.700 12.400Q10 12.400 11 13.200L9.600 14.800Z" fill="#d4d4d4" stroke="#c0c0c0" stroke-width=".4"/></svg>
<div class="vl" style="left:354px;top:205px;height:13px;background:#d0d0d0"></div>
<svg style="left:361px;top:202px" width="18" height="18" viewBox="0 0 18 18"><path d="M.600 5V2Q.600 .600 2 .600H5M13 .600H16Q17.400 .600 17.400 2V5M.600 13V16Q.600 17.400 2 17.400H5M13 17.400H16Q17.400 17.400 17.400 16V13" fill="none" stroke="#8a8a8a" stroke-width=".9"/><path d="M3.500 5.200H5.700L6.600 4H11.400L12.300 5.200H14.500Q15.700 5.200 15.700 6.400V12Q15.700 13.200 14.500 13.200H3.500Q2.300 13.200 2.300 12V6.400Q2.300 5.200 3.500 5.200Z" fill="#cfcfcf" stroke="#a0a0a0" stroke-width=".8"/><circle cx="9" cy="9" r="3.400" fill="#bdbdbd" stroke="#a0a0a0" stroke-width=".6"/><circle cx="9" cy="9" r="2.200" fill="#cfe6fa"/><circle cx="3.800" cy="6.600" r=".6" fill="#e03030"/></svg>
<div class="vl" style="left:386px;top:205px;height:13px;background:#d0d0d0"></div>
<div class="t" style="left:395.500px;top:204px;font-weight:bold;font-size:11.500px;color:#6e6e52;letter-spacing:-.3px">3D</div>
<svg style="left:420px;top:203px" width="17" height="17" viewBox="0 0 17 17"><path d="M2 1.700H4.500L5.500 .3H10.500L11.500 1.700H14Q15.300 1.700 15.300 3V9.700Q15.300 11 14 11H2Q.7 11 .7 9.700V3Q.7 1.700 2 1.700Z" fill="#c6c6c6" stroke="#969696" stroke-width=".8"/><circle cx="8" cy="6.200" r="3.700" fill="#adadad" stroke="#969696" stroke-width=".6"/><circle cx="8" cy="6.200" r="2.400" fill="#cfe6fa"/><circle cx="2.200" cy="3.300" r=".6" fill="#e03030"/><path d="M9 7.500L15.200 14.800" stroke="#d4a028" stroke-width="2.200"/><path d="M9 7.500L10.500 9.300" stroke="#8a8a8a" stroke-width="2.200"/><path d="M15 14.600L16.200 16" stroke="#f4e4c0" stroke-width="1.600"/><circle cx="8.500" cy="6.300" r="3.300" fill="#cfe6fa" stroke="#999" stroke-width="1"/></svg>
<div class="vl" style="left:444px;top:205px;height:13px;background:#d0d0d0"></div>
<svg style="left:452px;top:203px" width="16" height="16" viewBox="0 0 16 16"><rect x=".600" y=".600" width="14.800" height="14.800" fill="none" stroke="#7a7a7a" stroke-width=".9" stroke-dasharray="3 2"/><path d="M6.400 4H9.600V6.400H12V9.600H9.600V12H6.400V9.600H4V6.400H6.400Z" fill="#a6d18b" stroke="#7da065" stroke-width=".7"/></svg>
<svg style="left:478px;top:203px" width="16" height="16" viewBox="0 0 16 16"><rect x=".600" y=".600" width="14.800" height="14.800" fill="none" stroke="#7a7a7a" stroke-width=".9" stroke-dasharray="3 2"/><rect x="3.700" y="6.500" width="8.600" height="3" rx=".6" fill="#e01020"/></svg>
<svg style="left:504px;top:203px" width="16" height="16" viewBox="0 0 16 16"><rect x=".600" y=".600" width="14.800" height="14.800" fill="none" stroke="#7a7a7a" stroke-width=".9" stroke-dasharray="3 2"/><path d="M4.400 2.500H6.600V4.200H8.400V6.400H6.600V8.100H4.400V6.400H2.700V4.200H4.400Z" fill="#a6d18b" stroke="#7da065" stroke-width=".6"/><rect x="2.700" y="10" width="6" height="2.200" rx=".4" fill="#e01020"/><g transform="translate(10.5 10.5)"><path d="M0 0L4.600 1.500L1.500 4.600Z" fill="#4a4a4a"/><path d="M2.400 2.400L5.800 5.800" stroke="#4a4a4a" stroke-width="1.600"/></g></svg>
<div class="vl" style="left:528px;top:205px;height:13px;background:#d0d0d0"></div>
<svg style="left:536px;top:203px" width="16" height="16" viewBox="0 0 16 16"><rect x=".600" y=".600" width="14.800" height="14.800" fill="none" stroke="#7a7a7a" stroke-width=".9" stroke-dasharray="3 2"/><path d="M8 2.800L13 12H3Z" fill="#a6d18b" stroke="#7da065" stroke-width=".7"/><g transform="translate(10.5 10.5)"><path d="M0 0L4.600 1.500L1.500 4.600Z" fill="#4a4a4a"/><path d="M2.400 2.400L5.800 5.800" stroke="#4a4a4a" stroke-width="1.600"/></g></svg>
<svg style="left:562px;top:203px" width="16" height="16" viewBox="0 0 16 16"><rect x=".600" y=".600" width="14.800" height="14.800" fill="none" stroke="#7a7a7a" stroke-width=".9" stroke-dasharray="3 2"/><path d="M8 2.800L12.800 11.800H3.200Z" fill="none" stroke="#a8a8a8" stroke-width=".8"/><circle cx="8" cy="2.800" r="1.100" fill="#e03828"/><circle cx="3.200" cy="11.800" r="1.100" fill="#e03828"/><g transform="translate(10.5 10.5)"><path d="M0 0L4.600 1.500L1.500 4.600Z" fill="#4a4a4a"/><path d="M2.400 2.400L5.800 5.800" stroke="#4a4a4a" stroke-width="1.600"/></g></svg>
<svg style="left:588px;top:202px" width="17" height="17" viewBox="0 0 17 17"><path d="M.6 13V2.500H6" fill="none" stroke="#8a8a8a" stroke-width=".8" stroke-dasharray="2.500 2"/><path d="M.6 13.500H8" fill="none" stroke="#8a8a8a" stroke-width=".8" stroke-dasharray="2.500 2"/><path d="M2.500 6.500L8.500 2L15.500 3.500V9.500L12 11.500H2.500Z" fill="#a6d18b" stroke="#7da065" stroke-width=".8"/><path d="M2.500 6.500H12L15.500 3.500M12 6.500V11.500" fill="none" stroke="#7da065" stroke-width=".7"/><g transform="translate(9.5 11.5)"><path d="M0 0L4.600 1.500L1.500 4.600Z" fill="#4a4a4a"/><path d="M2.400 2.400L5.800 5.800" stroke="#4a4a4a" stroke-width="1.600"/></g></svg>
<svg style="left:614px;top:202px" width="17" height="17" viewBox="0 0 17 17"><g fill="none" stroke="#9a9a9a" stroke-width=".7" stroke-dasharray="2 1.600"><path d="M2.500 6.500L9 1.800L16 3.500V10.500L11 13.500H2.500Z"/><path d="M2.500 6.500H11L16 3.500M11 6.500V13.500"/></g><g fill="#e84838"><circle cx="2.600" cy="6.600" r="1"/><circle cx="2.600" cy="10.300" r="1"/><circle cx="5.800" cy="7.200" r=".9"/><circle cx="5.800" cy="10.800" r=".9"/><circle cx="9.300" cy="1.900" r=".9"/><circle cx="15.800" cy="3.800" r=".9"/><circle cx="15.800" cy="10.300" r=".9"/></g><g transform="translate(9.5 11.5)"><path d="M0 0L4.600 1.500L1.500 4.600Z" fill="#4a4a4a"/><path d="M2.400 2.400L5.800 5.800" stroke="#4a4a4a" stroke-width="1.600"/></g></svg>
<svg style="left:639px;top:202px" width="18" height="18" viewBox="0 0 18 18"><path d="M1 1.500H15.500L17 13L11.500 17L3.500 12.500Z" fill="none" stroke="#8a8a8a" stroke-width=".8" stroke-dasharray="2.800 2"/><path d="M3 9.700L9.800 5.500V13.500Z" fill="#a6d18b" stroke="#7da065" stroke-width=".7"/><path d="M11 9L14.500 5" stroke="#8a8a8a" stroke-width=".7"/></svg>
<svg style="left:665px;top:202px" width="18" height="18" viewBox="0 0 18 18"><path d="M1 1.500H15.500L17.500 12L12 17L3 11Z" fill="none" stroke="#8a8a8a" stroke-width=".8" stroke-dasharray="2.800 2"/><g fill="#c84030" stroke="#e8a090" stroke-width=".3"><circle cx="4.300" cy="4.600" r="1.200"/><circle cx="8.300" cy="7.300" r="1.200"/><circle cx="11.800" cy="4.600" r="1.200"/><circle cx="4.500" cy="9.500" r="1.200"/><circle cx="8.800" cy="11.300" r="1.200"/><circle cx="12.800" cy="13.300" r="1.200"/></g></svg>
<svg style="left:692px;top:203px" width="16" height="16" viewBox="0 0 16 16"><rect x=".600" y=".600" width="14.800" height="14.800" fill="none" stroke="#7a7a7a" stroke-width=".9" stroke-dasharray="3 2"/><circle cx="4.800" cy="4.800" r="2.200" fill="#2a96d8"/><circle cx="4.800" cy="11.600" r="2.200" fill="#2a96d8"/><circle cx="10.800" cy="8.500" r="2.900" fill="#a6d18b" stroke="#7da065" stroke-width=".6"/><g transform="translate(11.2 10.8)"><path d="M0 0L4.600 1.500L1.500 4.600Z" fill="#4a4a4a"/><path d="M2.400 2.400L5.800 5.800" stroke="#4a4a4a" stroke-width="1.600"/></g></svg>
<svg style="left:718px;top:203px" width="17" height="17" viewBox="0 0 17 17"><g stroke="#b0b0b0" stroke-width=".8" stroke-linejoin="round"><path d="M1 4.500L6.500 1.500H12.500V11L7.500 15H1Z" fill="#cfcfcf"/><path d="M1 4.500H7.500L12.500 1.500M7.500 4.500V15" fill="none"/></g><g fill="#b8b8b8"><circle cx="1" cy="4.500" r=".9"/><circle cx="6.500" cy="1.500" r=".9"/><circle cx="12.500" cy="1.500" r=".9"/><circle cx="1" cy="15" r=".9"/><circle cx="7.500" cy="15" r=".9"/></g><path d="M11 9l4.500 1.300l-1.400 1l2.800 2.800l-1 1l-2.800 -2.800l-1 1.400z" fill="#b4b4b4"/></svg>
<svg style="left:745px;top:203px" width="16" height="16" viewBox="0 0 16 16"><circle cx="7" cy="7.500" r="2.100" fill="#d8d8d8" stroke="#c0c0c0" stroke-width=".5"/><path d="M9 9.500l4 1.100l-1.200 .9l2.400 2.400l-.9 .9l-2.400 -2.400l-.9 1.200z" fill="#b4b4b4"/></svg>
<svg style="left:771px;top:203px" width="16" height="16" viewBox="0 0 16 16"><path d="M6.600 3.200L11.300 11.500H2.200Z" fill="#a6d18b" stroke="#7da065" stroke-width=".7"/><g transform="translate(10 10.2)"><path d="M0 0L4.600 1.500L1.500 4.600Z" fill="#4a4a4a"/><path d="M2.400 2.400L5.800 5.800" stroke="#4a4a4a" stroke-width="1.600"/></g></svg>
<svg style="left:797px;top:203px" width="16" height="16" viewBox="0 0 16 16"><path d="M7 2.600L11.800 11.500H2.200Z" fill="none" stroke="#a8a8a8" stroke-width=".8"/><circle cx="7" cy="2.600" r="1" fill="#e03828"/><circle cx="2.200" cy="11.500" r="1" fill="#e03828"/><g transform="translate(10.3 10.2)"><path d="M0 0L4.600 1.500L1.500 4.600Z" fill="#4a4a4a"/><path d="M2.400 2.400L5.800 5.800" stroke="#4a4a4a" stroke-width="1.600"/></g></svg>
<svg style="left:821px;top:203px" width="17" height="17" viewBox="0 0 17 17"><path d="M5.700 8.800L10.500 14.500H1Z" fill="#a6d18b" stroke="#7da065" stroke-width=".7"/><text x="10" y="11.300" font-family="Liberation Sans" font-size="13" fill="#6e6e50">?</text></svg>
<svg style="left:847px;top:203px" width="17" height="17" viewBox="0 0 17 17"><circle cx="5.400" cy="12.400" r="2.300" fill="#e03828"/><text x="9.200" y="11.300" font-family="Liberation Sans" font-size="13" fill="#6e6e50">?</text></svg>
<svg style="left:874px;top:203px" width="16" height="16" viewBox="0 0 16 16"><path d="M5.800 1.500H10.200V5.800H14.500V10.200H10.200V14.500H5.800V10.200H1.500V5.800H5.800Z" fill="#b6b6b6"/></svg>
<!-- Pipeline browser -->
<div class="t" style="left:3px;top:172px">Pipeline Browser</div>
<svg style="left:264px;top:175px" width="11" height="11" viewBox="0 0 11 11"><rect x=".5" y=".5" width="10" height="10" rx="2" fill="#f4f4f4" stroke="#555"/><rect x="4.5" y="2.5" width="4" height="4" rx="1" fill="none" stroke="#555"/><rect x="2.5" y="4.5" width="4" height="4" rx="1" fill="#f4f4f4" stroke="#555"/></svg>
<svg style="left:278px;top:175px" width="11" height="11" viewBox="0 0 11 11"><rect x=".5" y=".5" width="10" height="10" rx="2" fill="#f4f4f4" stroke="#555"/><path d="M3 3L8 8M8 3L3 8" stroke="#333" stroke-width="1.8"/></svg>
<div class="a" style="left:-1px;top:190px;width:292px;height:201px;background:#fff;border:1px solid #b5b5b5"></div>
<div class="a" style="left:29px;top:191px;width:1px;height:5px;background:#808080"></div>
<div class="a" style="left:29px;top:212px;width:1px;height:6px;background:#808080"></div>
<svg style="left:25px;top:197px" width="9" height="14" viewBox="0 0 9 14"><rect x=".5" y=".5" width="8" height="13" fill="#e8e8e8" stroke="#222"/><rect x="2" y="2.5" width="5" height="2.5" fill="#222"/><rect x="2" y="6" width="5" height="6.5" fill="#9a9a9a"/></svg>
<div class="t" style="left:40px;top:195px">builtin:</div>
<div class="a" style="left:20px;top:217px;width:135px;height:18px;background:#308cc6"></div>
<svg style="left:4px;top:220px" width="14" height="11" viewBox="0 0 14 11"><path d="M.3 5.5Q7 -1.5 13.7 5.5Q7 12.5 .3 5.5Z" fill="#fff" stroke="#8a8a8a" stroke-width=".8"/><circle cx="7" cy="5.5" r="3.6" fill="#2d6fb5"/><circle cx="7" cy="5.5" r="2.2" fill="#0a0a14"/><circle cx="6" cy="4.3" r="1" fill="#fff"/></svg>
<svg style="left:21px;top:218px" width="16" height="15" viewBox="0 0 16 15"><path d="M1 3.5L4.5 .5H15.5V10.5L12 14H1Z" fill="#4a7d4a" stroke="#777" stroke-width=".8"/><path d="M4.5 4H15V10.5L12 14H4.5Z" fill="#4fae4f"/><path d="M1 3.5H4.5V14H1Z" fill="#3f6f44"/><path d="M1 3.5L4.5 .5H15.5L12 4H4.5Z" fill="#5a8a5a"/></svg>
<div class="t" style="left:40px;top:217px;color:#fff">pitzDaily.OpenFOAM</div>
<div class="hd" style="left:136px;top:393px;width:18px;height:3px"></div>
<!-- tabs -->
<div class="hl" style="left:0;top:420px;width:291px;background:#b8b8b8"></div>
<div class="a" style="left:79px;top:400px;width:83px;height:21px;background:#dddddd;border:1px solid #b8b8b8;border-left:none;border-radius:0 3px 0 0"></div>
<div class="a" style="left:-1px;top:398px;width:80px;height:24px;background:linear-gradient(#f9f9f9,#efefef);border:1px solid #b8b8b8;border-bottom:none;border-radius:3px 3px 0 0"></div>
<div class="t" style="left:11px;top:401px">Properties</div>
<div class="t" style="left:90px;top:402px">Information</div>
<div class="t" style="left:3px;top:423px">Properties</div>
<svg style="left:264px;top:426px" width="11" height="11" viewBox="0 0 11 11"><rect x=".5" y=".5" width="10" height="10" rx="2" fill="#f4f4f4" stroke="#555"/><rect x="4.5" y="2.5" width="4" height="4" rx="1" fill="none" stroke="#555"/><rect x="2.5" y="4.5" width="4" height="4" rx="1" fill="#f4f4f4" stroke="#555"/></svg>
<svg style="left:278px;top:426px" width="11" height="11" viewBox="0 0 11 11"><rect x=".5" y=".5" width="10" height="10" rx="2" fill="#f4f4f4" stroke="#555"/><path d="M3 3L8 8M8 3L3 8" stroke="#333" stroke-width="1.8"/></svg>
<!-- buttons -->
<div class="btn" style="left:8px;top:450px;width:80px;height:24px"></div>
<div class="btn" style="left:90px;top:450px;width:80px;height:24px"></div>
<div class="btn" style="left:172px;top:450px;width:80px;height:24px"></div>
<div class="btn" style="left:254px;top:450px;width:28px;height:24px"></div>
<div class="t" style="left:41px;top:454px;color:#a2a2a2">Apply</div>
<div class="t" style="left:123px;top:454px;color:#a2a2a2">Reset</div>
<div class="t" style="left:203px;top:454px">Delete</div>
<svg style="left:26px;top:454px" width="12" height="14" viewBox="0 0 12 14"><path d="M1 6L4 4.5L7 6V11.5L4 13L1 11.5Z" fill="#c9c9c9" stroke="#a5a5a5" stroke-width=".8"/><path d="M5 6L9 2L7.5 1H11.5V5L10.5 3.5L6.5 7.5Z" fill="#c4c4c4" stroke="#a5a5a5" stroke-width=".6"/></svg>
<svg style="left:106px;top:455px" width="14" height="14" viewBox="0 0 14 14"><circle cx="7" cy="7" r="5.6" fill="none" stroke="#a8a8a8" stroke-width="2"/><path d="M3.2 10.8L10.8 3.2" stroke="#a8a8a8" stroke-width="2"/></svg>
<svg style="left:188px;top:456px" width="12" height="12" viewBox="0 0 12 12"><path d="M2.2 2.2L9.8 9.8M9.8 2.2L2.2 9.8" stroke="#e3202a" stroke-width="3.4" stroke-linecap="round"/></svg>
<div class="t" style="left:262px;top:451px;font-size:19.500px;line-height:22px;font-weight:bold;color:#a4d389;-webkit-text-stroke:.5px #8aa874">?</div>
<div class="a" style="left:8px;top:480px;width:248px;height:22px;background:#fff;border:1px solid #b0b0b0;border-radius:3px"></div>
<div class="t" style="left:11px;top:483px;color:#808080">Search ... (use Esc to clear text)</div>
<div class="btn" style="left:258px;top:480px;width:24px;height:23px"></div>
<svg style="left:263px;top:484px" width="14" height="14" viewBox="0 0 14 14"><g fill="#c6c6c6" stroke="#adadad" stroke-width=".5"><path d="M5.900 .3h2.200l.35 1.800 1.250.52 1.520-1 1.560 1.560-1 1.520.52 1.250 1.800.35v2.200l-1.800.35-.52 1.250 1 1.520-1.560 1.560-1.520-1-1.250.52-.35 1.800H5.900l-.35-1.800-1.250-.52-1.520 1-1.560-1.560 1-1.520-.52-1.250L-.1 8.100V5.900l1.800-.35.52-1.250-1-1.520 1.560-1.560 1.520 1 1.250-.52z"/></g><circle cx="7" cy="7" r="2.700" fill="#f2f2f2" stroke="#adadad" stroke-width=".5"/></svg>
<div class="a" style="left:8px;top:509px;width:221px;height:26px;background:#efefef;border:1px solid #b4b4b4"></div>
<div class="a" style="left:19px;top:520px;width:13px;height:5px;background:#3a96d4;border-radius:1px"></div>
<div class="t" style="left:40px;top:514px;font-weight:bold;width:179px;overflow:hidden">Properties (pitzDaily.OpenFOAM</div>
<div class="btn" style="left:233px;top:510px;width:28px;height:24px"></div>
<svg style="left:240px;top:514px" width="15" height="16" viewBox="0 0 15 16"><g fill="#d4d4d4" stroke="#9c9c9c" stroke-width=".7"><path d="M5 1h6l3 3v8H5z"/></g><path d="M10 4.500h2.500M10 6.500h2.500M10 8.500h2.500" stroke="#a8a8a8" stroke-width=".7"/><g fill="#d8d8d8" stroke="#9c9c9c" stroke-width=".7"><path d="M1 4h6l3 3v8H1z"/></g><path d="M2.500 8h4M2.500 10h6M2.500 12h6M2.500 13.700h6" stroke="#a0a0a0" stroke-width=".7"/></svg>
<div class="a" style="left:265px;top:510px;width:4px;height:24px;border:1px solid #b6b6b6;border-right:none;border-radius:3px 0 0 3px;background:#f8f8f8"></div>
<div class="t" style="left:8px;top:543px;font-weight:bold">General Controls</div>
<div class="hl" style="left:8px;top:559px;width:260px;background:#9a9a9a"></div>
<div class="btn" style="left:17px;top:575px;width:80px;height:21px"></div>
<div class="t" style="left:17px;top:577px;width:80px;text-align:center">Refresh</div>
<div class="cb" style="left:111px;top:578px"></div>
<svg style="left:113px;top:580px" width="10" height="10" viewBox="0 0 10 10"><path d="M1 4.500L3.800 9L8.800 .8" fill="none" stroke="#000" stroke-width="1.7"/></svg>
<div class="t" style="left:130px;top:577px">Skip 0/ time</div>
<div class="hl" style="left:17px;top:602px;width:251px;background:#a8a8a8"></div>
<div class="cb" style="left:17px;top:613px"></div><div class="t" style="left:36px;top:612px">With Sets</div>
<div class="cb" style="left:111px;top:613px"></div><div class="t" style="left:130px;top:612px">Groups Only</div>
<div class="cb" style="left:17px;top:638px"></div><div class="t" style="left:36px;top:637px">With Zones</div>
<div class="cb" style="left:111px;top:638px"></div><div class="t" style="left:130px;top:637px">Patch Names</div>
<div class="hl" style="left:17px;top:661px;width:251px;background:#a8a8a8"></div>
<div class="cb" style="left:17px;top:672px"></div>
<svg style="left:19px;top:674px" width="10" height="10" viewBox="0 0 10 10"><path d="M1 4.500L3.800 9L8.800 .8" fill="none" stroke="#000" stroke-width="1.7"/></svg>
<div class="t" style="left:36px;top:671px">cell-to-point</div>
<div class="cb" style="left:111px;top:672px"></div><div class="t" style="left:130px;top:671px">field-to-patch</div>
<div class="hl" style="left:17px;top:695px;width:251px;background:#a8a8a8"></div>
<div class="btn" style="left:17px;top:704px;width:80px;height:21px"></div>
<div class="t" style="left:17px;top:706px;width:80px;text-align:center">Update GUI</div>
<div class="cb" style="left:111px;top:707px"></div><div class="t" style="left:130px;top:706px">VTK Polyhedra</div>
<div class="a" style="left:223px;top:704px;width:45px;height:22px;overflow:hidden"><div class="btn" style="left:0;top:0;width:80px;height:22px"></div><div class="t" style="left:5px;top:3px">Cache v</div></div>
<div class="a" style="left:8px;top:739px;width:60px;height:11px;overflow:hidden"><div class="t" style="left:0;top:1px;font-weight:bold">Parts</div></div>
<!-- scrollbars -->
<div class="a" style="left:268px;top:509px;width:14px;height:241px;background:#dcdcdc;border-left:1px solid #c2c2c2"></div>
<div class="a" style="left:269px;top:509px;width:13px;height:14px;background:#f6f6f6;border-bottom:1px solid #c8c8c8"></div>
<div class="a" style="left:269px;top:523px;width:13px;height:42px;background:linear-gradient(90deg,#fcfcfc,#ececec);border-bottom:1px solid #c4c4c4"></div>
<div class="a" style="left:269px;top:736px;width:13px;height:14px;background:#f6f6f6;border-top:1px solid #c8c8c8"></div>
<svg style="left:271px;top:513px" width="8" height="4"><path d="M0 4L4 0L8 4Z" fill="#4a4a4a"/></svg>
<svg style="left:271px;top:741px" width="8" height="4"><path d="M0 0L4 4L8 0Z" fill="#4a4a4a"/></svg>
<div class="a" style="left:8px;top:750px;width:260px;height:13px;background:#dcdcdc;border-top:1px solid #c2c2c2"></div>
<div class="a" style="left:8px;top:751px;width:13px;height:12px;background:#f6f6f6;border-right:1px solid #c8c8c8"></div>
<div class="a" style="left:21px;top:751px;width:173px;height:12px;background:linear-gradient(#fcfcfc,#ececec);border-right:1px solid #c4c4c4"></div>
<div class="a" style="left:254px;top:751px;width:14px;height:12px;background:#f6f6f6;border-left:1px solid #c8c8c8"></div>
<svg style="left:12px;top:753px" width="4" height="8"><path d="M4 0L0 4L4 8Z" fill="#4a4a4a"/></svg>
<svg style="left:259px;top:753px" width="4" height="8"><path d="M0 0L4 4L0 8Z" fill="#4a4a4a"/></svg>
<!-- splitter -->
<div class="vl" style="left:298px;top:198px;height:574px;background:#b9b9b9"></div>
<div class="hd" style="left:293px;top:465px;width:3px;height:18px"></div>
<!-- layout tabs -->
<div class="hl" style="left:298px;top:197px;width:852px;background:#b8b8b8"></div>
<div class="a" style="left:409px;top:173px;width:31px;height:25px;background:#e9e9e9;border:1px solid #b4b4b4;border-radius:0 4px 0 0"></div>
<div class="a" style="left:297px;top:171px;width:113px;height:28px;background:linear-gradient(#ffffff,#fbfbfb 80%,#f6f6f6);border:1px solid #b4b4b4;border-bottom:none;border-radius:4px 4px 0 0"></div>
<svg style="left:309px;top:177px" width="16" height="16" viewBox="0 0 16 16"><rect x="1" y="1" width="14" height="14" fill="#fff" stroke="#2b2b2b" stroke-width="2"/><rect x="0" y="0" width="16" height="4" fill="#2b2b2b"/></svg>
<div class="t" style="left:329px;top:177px">Layout #1</div>
<svg style="left:385px;top:180px" width="11" height="11" viewBox="0 0 11 11"><rect x=".5" y=".5" width="10" height="10" rx="2" fill="#f4f4f4" stroke="#666"/><path d="M3 3L8 8M8 3L3 8" stroke="#4c4c4c" stroke-width="1.8"/></svg>
<svg style="left:421px;top:182px" width="7" height="7" viewBox="0 0 7 7"><path d="M3.500 0V7M0 3.500H7" stroke="#000" stroke-width="1.1"/></svg>
<!-- view toolbar -->
<div class="t" style="left:955px;top:202px;font-weight:bold;text-decoration:underline;text-underline-offset:1px">RenderView1</div>
<div class="btn" style="left:1042px;top:199px;width:26px;height:25px"></div>
<div class="btn" style="left:1069px;top:199px;width:26px;height:25px"></div>
<div class="btn" style="left:1096px;top:199px;width:26px;height:25px"></div>
<div class="btn" style="left:1123px;top:199px;width:26px;height:25px"></div>
<svg style="left:1048px;top:204px" width="14" height="14" viewBox="0 0 14 14"><rect x=".5" y=".5" width="13" height="13" fill="#ccd4ee" stroke="#9aa0b4"/><path d="M7 0V14" stroke="#9aa0b4"/></svg>
<svg style="left:1075px;top:204px" width="14" height="14" viewBox="0 0 14 14"><rect x=".5" y=".5" width="13" height="13" fill="#ccd4ee" stroke="#9aa0b4"/><path d="M0 7H14" stroke="#9aa0b4"/></svg>
<svg style="left:1100px;top:202px" width="18" height="18" viewBox="0 0 18 18"><rect x="1" y="1" width="16" height="16" fill="#f0f0f0" stroke="#2e2e2e" stroke-width="2"/><rect x="0" y="0" width="18" height="5" fill="#2e2e2e"/></svg>
<svg style="left:1131px;top:206px" width="11" height="11" viewBox="0 0 11 11"><rect x=".5" y=".5" width="10" height="10" rx="2" fill="#f4f4f4" stroke="#666"/><path d="M3 3L8 8M8 3L3 8" stroke="#4c4c4c" stroke-width="1.8"/></svg>
<svg style="left:922px;top:207.800px" width="8" height="7" viewBox="0 0 8 7"><path d="M.6 .4L3.300 3.500L.6 6.600M4.400 .4L7.100 3.500L4.400 6.600" fill="none" stroke="#3a3a3a" stroke-width="1"/></svg>
<!-- render view -->
<div class="a" style="left:299px;top:225px;width:850px;height:545px;background:#0000fe"></div>
<div class="a" style="left:301px;top:227px;width:846px;height:541px;background:#f4f0e0"></div>
<div class="a" style="left:302px;top:228px;width:844px;height:539px;background:#52576e"></div>
<!-- status bar -->
<div class="btn" style="left:374px;top:776px;width:20px;height:18px;border-radius:2px"></div>
<svg style="left:379px;top:780px" width="9" height="9" viewBox="0 0 9 9"><path d="M1.500 1.500L7.500 7.500M7.500 1.500L1.500 7.500" stroke="#7d7d7d" stroke-width="2.400"/></svg>
<div class="a" style="left:396px;top:775px;width:353px;height:20px;background:#efefef;border:1px solid #b9b9b9;border-radius:2px;box-shadow:inset 0 1px 0 #d8d8d8"></div>
<div class="a" style="left:753px;top:775px;width:374px;height:21px;background:#fff;border:1px solid #b4b4b4;border-radius:3px"></div>
<div class="a" style="left:754px;top:776px;width:7px;height:19px;background:linear-gradient(90deg,#b9dfa8,#a4d190);border:1px solid #8cb87b;border-radius:2px"></div>
<div class="t" style="left:753px;top:778px;width:374px;text-align:center">inst-aff8n-x9-ol89mi-of: 10.0 GiB/503.0 GiB 2.0%</div>
<div class="hd" style="left:1140px;top:788px;width:9px;height:9px"></div>
<div class="a" style="left:0;top:797px;width:1150px;height:1px;background:#a4a4a4"></div><div class="a" style="left:0;top:798px;width:1150px;height:1px;background:repeating-linear-gradient(90deg,#161616 0 11px,#8a8a8a 11px 13px,#161616 13px 19px,#8a8a8a 19px 20px)"></div>
<div id="flow" class="a" style="left:467px;top:455px;width:514px;height:86px;display:flex;clip-path:polygon(0 .5px,375.5px .5px,514px 15px,514px 69.6px,375.5px 84.5px,34px 84.5px,34px 42.4px,0 42.4px)">
<i style="background:linear-gradient(#a73a31,#961523,#951222,#951122,#951122,#951122,#951222,#951222,#951222,#951322,#951322,#951322,#951322,#951322,#951222,#951222,#951222,#951122,#951122,#951122,#951322,#a12e2b,#a73a31,#a73a31,#a73a31,#a73a31,#a73a31,#a73a31,#a73a31,#a73a31,#a73a31,#a73a31,#a73a31,#a73a31,#a73a31,#a73a31,#a73a31,#a73a31,#a73a31,#a73a31,#a73a31,#a73a31,#a73a31,#a73a31)"></i>
<i style="background:linear-gradient(#a73a31,#961523,#951122,#941022,#941022,#941122,#951122,#951122,#951222,#951222,#951222,#951222,#951222,#951222,#951122,#951122,#951122,#941122,#941022,#941022,#951222,#a02e2b,#a73a31,#a73a31,#a73a31,#a73a31,#a73a31,#a73a31,#a73a31,#a73a31,#a73a31,#a73a31,#a73a31,#a73a31,#a73a31,#a73a31,#a73a31,#a73a31,#a73a31,#a73a31,#a73a31,#a73a31,#a73a31,#a73a31)"></i>
<i style="background:linear-gradient(#a73a31,#961423,#951122,#940f21,#940f21,#941022,#941022,#941022,#941122,#951122,#951122,#951122,#951122,#941122,#941022,#941022,#941022,#941022,#940f21,#940f21,#951122,#a02e2b,#a73a31,#a73a31,#a73a31,#a73a31,#a73a31,#a73a31,#a73a31,#a73a31,#a73a31,#a73a31,#a73a31,#a73a31,#a73a31,#a73a31,#a73a31,#a73a31,#a73a31,#a73a31,#a73a31,#a73a31,#a73a31,#a73a31)"></i>
<i style="background:linear-gradient(#a73a31,#961423,#941022,#940e21,#940f21,#940f21,#940f21,#940f21,#941022,#941022,#941022,#941022,#941022,#941022,#941021,#940f21,#940f21,#940f21,#940f21,#940e21,#941022,#a02d2b,#a73a31,#a73a31,#a73a31,#a73a31,#a73a31,#a73a31,#a73a31,#a73a31,#a73a31,#a73a31,#a73a31,#a73a31,#a73a31,#a73a31,#a73a31,#a73a31,#a73a31,#a73a31,#a73a31,#a73a31,#a73a31,#a73a31)"></i>
<i style="background:linear-gradient(#a73a31,#951322,#940f21,#930d21,#940e21,#940e21,#940e21,#940f21,#940f21,#940f21,#940f21,#940f21,#940f21,#940f21,#940f21,#940e21,#940e21,#940e21,#940e21,#930d21,#941022,#a02d2b,#a73a31,#a73a31,#a73a31,#a73a31,#a73a31,#a73a31,#a73a31,#a73a31,#a73a31,#a73a31,#a73a31,#a73a31,#a73a31,#a73a31,#a73a31,#a73a31,#a73a31,#a73a31,#a73a31,#a73a31,#a73a31,#a73a31)"></i>
<i style="background:linear-gradient(#a73a31,#951322,#940f21,#930d21,#930d21,#930d21,#930d21,#930e21,#940e21,#940e21,#940e21,#940e21,#940e21,#940e21,#930e21,#930d21,#930d21,#930d21,#930d21,#930d21,#940f21,#a02d2b,#a73a31,#a73a31,#a73a31,#a73a31,#a73a31,#a73a31,#a73a31,#a73a31,#a73a31,#a73a31,#a73a31,#a73a31,#a73a31,#a73a31,#a73a31,#a73a31,#a73a31,#a73a31,#a73a31,#a73a31,#a73a31,#a73a31)"></i>
<i style="background:linear-gradient(#a73a31,#951222,#940e21,#930c21,#930c21,#930c21,#930c21,#930d21,#930d21,#930d21,#930d21,#930d21,#930d21,#930d21,#930d21,#930d21,#930c21,#930c21,#930c21,#930c21,#940e21,#a02d2b,#a73a31,#a73a31,#a73a31,#a73a31,#a73a31,#a73a31,#a73a31,#a73a31,#a73a31,#a73a31,#a73a31,#a73a31,#a73a31,#a73a31,#a73a31,#a73a31,#a73a31,#a73a31,#a73a31,#a73a31,#a73a31,#a73a31)"></i>
<i style="background:linear-gradient(#a73a31,#951222,#930d21,#930b20,#930b20,#930b20,#930c20,#930c21,#930c21,#930c21,#930c21,#930c21,#930c21,#930c21,#930c21,#930c21,#930c20,#930b20,#930b20,#930b20,#930e21,#a02d2b,#a73a31,#a73a31,#a73a31,#a73a31,#a73a31,#a73a31,#a73a31,#a73a31,#a73a31,#a73a31,#a73a31,#a73a31,#a73a31,#a73a31,#a73a31,#a73a31,#a73a31,#a73a31,#a73a31,#a73a31,#a73a31,#a73a31)"></i>
<i style="background:linear-gradient(#a73a31,#951122,#930c21,#920a20,#920a20,#920b20,#930b20,#930b20,#930b20,#930b20,#930b20,#930b20,#930b20,#930b20,#930b20,#930b20,#920b20,#920a20,#920a20,#920a20,#930d21,#a02d2b,#a73a31,#a73a31,#a73a31,#a73a31,#a73a31,#a73a31,#a73a31,#a73a31,#a73a31,#a73a31,#a73a31,#a73a31,#a73a31,#a73a31,#a73a31,#a73a31,#a73a31,#a73a31,#a73a31,#a73a31,#a73a31,#a73a31)"></i>
<i style="background:linear-gradient(#a73a31,#941022,#930c21,#920920,#920a20,#920a20,#920a20,#920a20,#920a20,#920a20,#920a20,#920a20,#920a20,#920a20,#920a20,#920a20,#920a20,#920a20,#920920,#920920,#930c21,#a02d2b,#a73a31,#a73a31,#a73a31,#a73a31,#a73a31,#a73a31,#a73a31,#a73a31,#a73a31,#a73a31,#a73a31,#a73a31,#a73a31,#a73a31,#a73a31,#a73a31,#a73a31,#a73a31,#a73a31,#a73a31,#a73a31,#a73a31)"></i>
<i style="background:linear-gradient(#a73a31,#941022,#930b20,#920920,#920920,#920920,#920920,#920920,#920920,#920920,#920920,#920920,#920920,#920920,#920920,#920920,#920920,#920920,#920920,#920920,#930c20,#a02d2b,#a73a31,#a73a31,#a73a31,#a73a31,#a73a31,#a73a31,#a73a31,#a73a31,#a73a31,#a73a31,#a73a31,#a73a31,#a73a31,#a73a31,#a73a31,#a73a31,#a73a31,#a73a31,#a73a31,#a73a31,#a73a31,#a73a31)"></i>
<i style="background:linear-gradient(#a73a31,#940f21,#920a20,#920820,#920820,#920820,#920820,#920820,#920820,#920820,#920920,#920920,#920820,#920820,#920820,#920820,#920820,#920820,#920820,#920820,#930b20,#a02c2b,#a73a31,#a73a31,#a73a31,#a73a31,#a73a31,#a73a31,#a73a31,#a73a31,#a73a31,#a73a31,#a73a31,#a73a31,#a73a31,#a73a31,#a73a31,#a73a31,#a73a31,#a73a31,#a73a31,#a73a31,#a73a31,#a73a31)"></i>
<i style="background:linear-gradient(#a73a31,#940f21,#920a20,#91071f,#91071f,#91071f,#91071f,#91071f,#91071f,#91071f,#91081f,#91081f,#91071f,#91071f,#91071f,#91071f,#91071f,#91071f,#91071f,#91071f,#920a20,#a02c2b,#a73a31,#a73a31,#a73a31,#a73a31,#a73a31,#a73a31,#a73a31,#a73a31,#a73a31,#a73a31,#a73a31,#a73a31,#a73a31,#a73a31,#a73a31,#a73a31,#a73a31,#a73a31,#a73a31,#a73a31,#a73a31,#a73a31)"></i>
<i style="background:linear-gradient(#a73a31,#940e21,#920920,#91061f,#91061f,#91061f,#91061f,#91061f,#91061f,#91071f,#91071f,#91071f,#91071f,#91061f,#91061f,#91061f,#91061f,#91061f,#91061f,#91061f,#920920,#a02c2b,#a73a31,#a73a31,#a73a31,#a73a31,#a73a31,#a73a31,#a73a31,#a73a31,#a73a31,#a73a31,#a73a31,#a73a31,#a73a31,#a73a31,#a73a31,#a73a31,#a73a31,#a73a31,#a73a31,#a73a31,#a73a31,#a73a31)"></i>
<i style="background:linear-gradient(#a73a31,#940e21,#920820,#91051f,#91051f,#91051f,#91051f,#91051f,#91061f,#91061f,#91061f,#91061f,#91061f,#91061f,#91051f,#91051f,#91051f,#91051f,#91051f,#91051f,#920920,#a02c2b,#a73a31,#a73a31,#a73a31,#a73a31,#a73a31,#a73a31,#a73a31,#a73a31,#a73a31,#a73a31,#a73a31,#a73a31,#a73a31,#a73a31,#a73a31,#a73a31,#a73a31,#a73a31,#a73a31,#a73a31,#a73a31,#a73a31)"></i>
<i style="background:linear-gradient(#a73a31,#930d21,#91071f,#90041f,#90041f,#90041f,#90051f,#90051f,#90051f,#90051f,#90051f,#90051f,#90051f,#90051f,#90051f,#90051f,#90051f,#90041f,#90041f,#90041f,#920820,#a02c2a,#a73a31,#a73a31,#a73a31,#a73a31,#a73a31,#a73a31,#a73a31,#a73a31,#a73a31,#a73a31,#a73a31,#a73a31,#a73a31,#a73a31,#a73a31,#a73a31,#a73a31,#a73a31,#a73a31,#a73a31,#a73a31,#a73a31)"></i>
<i style="background:linear-gradient(#a73a31,#930d21,#91071f,#90041f,#90041f,#90041f,#90041f,#90041f,#90041f,#90041f,#90041f,#90041f,#90041f,#90041f,#90041f,#90041f,#90041f,#90041f,#90041f,#90041f,#91071f,#9f2c2a,#a73a31,#a73a31,#a73a31,#a73a31,#a73a31,#a73a31,#a73a31,#a73a31,#a73a31,#a73a31,#a73a31,#a73a31,#a73a31,#a73a31,#a73a31,#a73a31,#a73a31,#a73a31,#a73a31,#a73a31,#a73a31,#a73a31)"></i>
<i style="background:linear-gradient(#ac4337,#940e21,#91071f,#90031e,#90031e,#90031e,#90031e,#90031e,#90031e,#90031e,#90031e,#90031e,#90031e,#90031e,#90031e,#90031e,#90031e,#90031e,#90031e,#90031e,#930b20,#c48067,#465eb4,#3b4fa9,#3a4ea8,#3a4da7,#394ca7,#394ba6,#384ba5,#384aa5,#3749a4,#3749a4,#3648a3,#3647a2,#3545a1,#3444a0,#33439f,#32419d,#31409d,#313f9c,#303f9b,#303e9a,#2f3d9a,#2f3d9a)"></i>
<i style="background:linear-gradient(#ad4438,#951122,#91071f,#90031e,#90031e,#90031e,#90031e,#90031e,#90031e,#90031e,#90031e,#90031e,#90031e,#90031e,#90031e,#90031e,#90031e,#90031e,#90031e,#90031e,#930c21,#c5836a,#4861b6,#3c50aa,#3b4fa8,#3a4da7,#394ca6,#384ba6,#384aa5,#374aa4,#3749a4,#3748a4,#3648a3,#3647a2,#3546a1,#3444a0,#33439f,#32429e,#32419d,#31409c,#313f9b,#303e9b,#2f3d9a,#2f3d9a)"></i>
<i style="background:linear-gradient(#ad4539,#951422,#91081f,#90031e,#90031e,#90031e,#90031e,#90031e,#90031e,#90031e,#90031e,#90031e,#90031e,#90031e,#90031e,#90031e,#90031e,#90031e,#90031e,#90031e,#930d21,#c6866d,#4b63b8,#3c51aa,#3b4fa9,#3a4da7,#394ca6,#384ba5,#384aa5,#3749a4,#3749a4,#3748a3,#3648a3,#3647a2,#3546a1,#3445a0,#33439f,#33429e,#32419d,#31409c,#313f9c,#303e9b,#2f3d9a,#2f3d9a)"></i>
<i style="background:linear-gradient(#ae4739,#961623,#920820,#90031e,#90031e,#90031e,#90031e,#90031e,#90031e,#90031e,#90031e,#90031e,#90031e,#90031e,#90031e,#90031e,#90031e,#90031e,#90031e,#90031e,#930e21,#c68870,#4d66ba,#3d52ab,#3b50a9,#3a4da7,#394ca6,#384ba5,#384aa5,#3749a4,#3748a4,#3648a3,#3648a3,#3647a2,#3546a1,#3445a1,#3444a0,#33439f,#32429e,#32409d,#313f9c,#303e9b,#2f3d9a,#2f3d9a)"></i>
<i style="background:linear-gradient(#af483a,#971924,#920920,#90031e,#90031e,#90031e,#90031e,#90031e,#90031e,#90031e,#90031e,#90031e,#90031e,#90031e,#90031e,#90031e,#90031e,#90031e,#90031e,#90031e,#940f21,#c68b73,#4f69bc,#3e53ac,#3c50aa,#3a4da7,#394ba6,#384aa5,#374aa4,#3749a4,#3748a3,#3648a3,#3648a3,#3647a2,#3546a2,#3545a1,#3444a0,#33439f,#33429e,#32419d,#31409c,#303e9b,#2f3d9a,#2f3d9a)"></i>
<i style="background:linear-gradient(#af493b,#981c25,#920920,#90031e,#90031e,#90031e,#90031e,#90031e,#90031e,#90031e,#90031e,#90031e,#90031e,#90031e,#90031e,#90031e,#90031e,#90031e,#90031e,#90031e,#940f21,#c68e76,#526cbd,#3e54ad,#3c51aa,#3a4da7,#384ba6,#384aa5,#3749a4,#3748a4,#3648a3,#3648a3,#3648a3,#3647a2,#3546a2,#3545a1,#3445a0,#34449f,#33439f,#32419d,#31409c,#303e9b,#2f3d9a,#2f3d9a)"></i>
<i style="background:linear-gradient(#b04a3c,#991f25,#920a20,#90031e,#90031e,#90031e,#90031e,#90031e,#90031e,#90031e,#90031e,#90031e,#90031e,#90031e,#90031e,#90031e,#90031e,#90031e,#90031e,#90031e,#941022,#c69079,#546ebf,#3f55ae,#3c51ab,#3a4da7,#384ba5,#384aa5,#3749a4,#3648a3,#3648a3,#3648a3,#3648a3,#3647a2,#3546a2,#3546a1,#3445a1,#3444a0,#33439f,#32429e,#31409c,#303f9b,#2f3d9a,#2f3d9a)"></i>
<i style="background:linear-gradient(#b14c3d,#9a2126,#920a20,#90031e,#90031e,#90031e,#90031e,#90031e,#90031e,#90031e,#90031e,#90031e,#90031e,#90031e,#90031e,#90031e,#90031e,#90031e,#90031e,#90031e,#971924,#c6937d,#5a75c3,#435bb2,#3f55ae,#3b4fa9,#394ca6,#384aa5,#3749a4,#3648a3,#3647a3,#3648a3,#3648a3,#3648a3,#3647a3,#3647a2,#3546a2,#3546a1,#3445a1,#34449f,#33429e,#32409d,#303e9b,#2f3d9a)"></i>
<i style="background:linear-gradient(#b24d3e,#9b2327,#920a20,#90031e,#90031e,#90031e,#90031e,#90031e,#90031e,#90031e,#90031e,#90031e,#90031e,#90031e,#90031e,#90031e,#90031e,#90031e,#90031e,#90031e,#9d2628,#c69680,#6480c7,#4c65b9,#455cb3,#3e53ac,#3a4ea8,#394ca6,#384aa5,#3648a3,#3647a2,#3648a3,#3648a3,#3748a4,#3749a4,#3749a4,#3749a4,#3749a4,#3748a3,#3647a3,#3547a2,#3444a0,#313f9c,#2f3d9a)"></i>
<i style="background:linear-gradient(#b24f3f,#9c2427,#920a20,#90031e,#90031e,#90031e,#90031e,#90031e,#90031e,#90031e,#90031e,#90031e,#90031e,#90031e,#90031e,#90031e,#90031e,#90031e,#90031e,#90031e,#a2302c,#c59884,#6e8aca,#546fbf,#4a63b8,#4157af,#3b50a9,#3a4da7,#384aa5,#3648a3,#3647a2,#3648a3,#3748a3,#3749a4,#384aa5,#384ba6,#394ca6,#394ca6,#394ca6,#394ba6,#384ba5,#3648a3,#32419d,#2f3d9a)"></i>
<i style="background:linear-gradient(#b35040,#9c2628,#920a20,#90031e,#90031e,#90031e,#90031e,#90031e,#90031e,#90031e,#90031e,#90031e,#90031e,#90031e,#90031e,#90031e,#90031e,#90031e,#90031e,#90031e,#a63931,#c49b88,#7893cc,#5c78c4,#506abc,#445bb2,#3d52ab,#3b4ea8,#384ba6,#3648a3,#3546a2,#3648a3,#3749a4,#384aa5,#394ca6,#3a4da7,#3b4fa8,#3b4fa9,#3b4fa9,#3b4fa9,#3b4fa9,#394ba6,#33429e,#2f3d9a)"></i>
<i style="background:linear-gradient(#b45241,#9d2729,#920a20,#90031e,#90031e,#90031e,#90031e,#90031e,#90031e,#90031e,#90031e,#90031e,#90031e,#90031e,#90031e,#90031e,#90031e,#90031e,#90031e,#90031e,#ab4135,#c49e8c,#829bcc,#6581c8,#5671c0,#475fb5,#3e54ac,#3b50a9,#394ca6,#3647a3,#3546a2,#3648a3,#3749a4,#384ba5,#3a4da7,#3b4fa9,#3c51ab,#3d52ab,#3d53ac,#3d53ac,#3e53ac,#3b4fa9,#33439f,#2f3d9a)"></i>
<i style="background:linear-gradient(#b55442,#9e2929,#920a20,#90031e,#90031e,#90031e,#90031e,#90031e,#90031e,#90031e,#90031e,#90031e,#90031e,#90031e,#90031e,#90031e,#90031e,#90031e,#90031e,#90031e,#af483a,#c2a08f,#8ca1ca,#6e8aca,#5b77c4,#4a63b8,#3f56ae,#3c51aa,#394ca6,#3647a3,#3546a1,#3648a3,#3749a4,#394ca6,#3b4ea8,#3c51aa,#3e54ad,#3f55ad,#4056ae,#4057af,#4157af,#3d53ab,#3445a0,#2f3d9a)"></i>
<i style="background:linear-gradient(#b55544,#9f2a2a,#920a20,#90031e,#90031e,#90031e,#90031e,#90031e,#90031e,#90031e,#90031e,#90031e,#90031e,#90031e,#90031e,#90031e,#90031e,#90031e,#90031e,#90031e,#b35040,#c1a293,#95a7c6,#7691cc,#617dc6,#4d67ba,#4158af,#3d52ab,#394da7,#3647a3,#3545a1,#3648a3,#374aa4,#394ca7,#3b50a9,#3e53ac,#4056af,#4158af,#4259b0,#435ab1,#445bb2,#4056ae,#3546a2,#2f3d9a)"></i>
<i style="background:linear-gradient(#b65745,#a02c2a,#920b20,#90031e,#90031e,#90031e,#90031e,#90031e,#90031e,#90031e,#90031e,#90031e,#90031e,#90031e,#90031e,#90031e,#90031e,#90031e,#90031e,#90031e,#b65745,#c0a596,#9eacc1,#7f98cc,#6783c9,#506abc,#4259b1,#3e54ac,#3a4da7,#3647a2,#3545a1,#3648a3,#384aa5,#3a4da7,#3c51aa,#3f55ae,#4259b0,#435bb2,#445cb3,#465eb4,#475fb5,#4259b1,#3648a3,#2f3d9a)"></i>
<i style="background:linear-gradient(#b75846,#a02e2b,#930b20,#90031e,#90031e,#90031e,#90031e,#90031e,#90031e,#90031e,#90031e,#90031e,#90031e,#90031e,#90031e,#90031e,#90031e,#90031e,#90031e,#91071f,#b75845,#c0a496,#9facc1,#829acc,#6985c9,#526cbe,#435ab2,#3e54ad,#3a4ea8,#3647a3,#3445a1,#3648a3,#384aa5,#3a4ea8,#3d52ab,#4056ae,#435ab1,#445cb3,#455db4,#475fb5,#4861b6,#435bb2,#3648a3,#2f3d9a)"></i>
<i style="background:linear-gradient(#b75a47,#a12f2c,#930c21,#90031e,#90031e,#90031e,#90031e,#90031e,#90031e,#90031e,#90031e,#90031e,#90031e,#90031e,#90031e,#90031e,#90031e,#90031e,#90031e,#920a20,#b75946,#c1a495,#a0adc0,#849ccc,#6b87ca,#546fbf,#445bb2,#3f55ad,#3a4ea8,#3648a3,#3445a0,#3648a3,#384aa5,#3a4ea8,#3d52ab,#4057af,#435bb2,#455db3,#475fb5,#4861b6,#4a63b7,#455cb3,#3748a3,#2f3d9a)"></i>
<i style="background:linear-gradient(#b85b47,#a2312d,#930d21,#90031e,#90031e,#90031e,#90031e,#90031e,#90031e,#90031e,#90031e,#90031e,#90031e,#90031e,#90031e,#90031e,#90031e,#90031e,#90031e,#940e21,#b75a47,#c1a394,#a2adbf,#869ecb,#6d89ca,#5671c0,#455cb3,#4056ae,#3b4fa9,#3648a3,#3444a0,#3648a3,#384ba5,#3b4ea8,#3e53ac,#4157af,#445cb3,#465eb4,#4860b6,#4962b7,#4b64b9,#465eb4,#3749a4,#2f3d9a)"></i>
<i style="background:linear-gradient(#b85c48,#a3322d,#930d21,#90031e,#90031e,#90031e,#90031e,#90031e,#90031e,#90031e,#90031e,#90031e,#90031e,#90031e,#90031e,#90031e,#90031e,#90031e,#90031e,#951122,#b85b47,#c1a293,#a2adbf,#889fcb,#6f8bcb,#5873c2,#455db4,#4057af,#3b4fa9,#3648a3,#3444a0,#3647a3,#384ba5,#3b4fa9,#3e54ac,#4158b0,#455db3,#475fb5,#4961b7,#4b64b8,#4d66ba,#475fb5,#3749a4,#2f3d9a)"></i>
<i style="background:linear-gradient(#b95e49,#a4342e,#940e21,#90031e,#90031e,#90031e,#90031e,#90031e,#90031e,#90031e,#90031e,#90031e,#90031e,#90031e,#90031e,#90031e,#90031e,#90031e,#90031e,#961423,#b85b48,#c1a292,#a3aebe,#8aa0cb,#718dcb,#5a76c3,#465eb5,#4157af,#3c50aa,#3748a4,#3444a0,#3647a3,#384ba6,#3b4fa9,#3e54ad,#4259b0,#455db4,#4860b6,#4a63b7,#4c65b9,#4e68bb,#4861b6,#3749a4,#2f3d9a)"></i>
<i style="background:linear-gradient(#ba5f4a,#a4352f,#940f21,#90031e,#90031e,#90031e,#90031e,#90031e,#90031e,#90031e,#90031e,#90031e,#90031e,#90031e,#90031e,#90031e,#90031e,#90031e,#90031e,#961623,#b85c48,#c2a191,#a4aebe,#8ca1ca,#738fcb,#5c78c4,#4760b5,#4158b0,#3c51aa,#3749a4,#33439f,#3647a3,#384ba6,#3b50a9,#3f55ad,#425ab1,#465eb5,#4961b6,#4b64b8,#4d67ba,#5069bc,#4962b7,#3749a4,#2f3d9a)"></i>
<i style="background:linear-gradient(#ba604b,#a53730,#940f21,#90031e,#90031e,#90031e,#90031e,#90031e,#90031e,#90031e,#90031e,#90031e,#90031e,#90031e,#90031e,#90031e,#90031e,#90031e,#90031e,#971924,#b95d49,#c2a191,#a5aebd,#8ea3c9,#7590cc,#5e7ac5,#4861b6,#4259b1,#3c51ab,#3749a4,#33439f,#3647a3,#394ba6,#3b50a9,#3f55ae,#435ab1,#475fb5,#4a62b7,#4c65b9,#4f68bb,#516bbd,#4b63b8,#374aa4,#2f3d9a)"></i>
<i style="background:linear-gradient(#bb614c,#a63830,#941022,#90031e,#90031e,#90031e,#90031e,#90031e,#90031e,#90031e,#90031e,#90031e,#90031e,#90031e,#90031e,#90031e,#90031e,#90031e,#90031e,#981b24,#b95d49,#c2a090,#a6aebc,#8fa4c9,#7792cc,#607cc6,#4a63b7,#435ab1,#3d52ab,#374aa4,#33439f,#3647a2,#394ca6,#3c50aa,#4056ae,#445bb2,#4860b6,#4a63b8,#4d67ba,#506abc,#526dbe,#4c65b9,#384aa5,#2f3d9a)"></i>
<i style="background:linear-gradient(#bb634d,#a73931,#951122,#90031e,#90031e,#90031e,#90031e,#90031e,#90031e,#90031e,#90031e,#90031e,#90031e,#90031e,#90031e,#90031e,#90031e,#90031e,#90031e,#991e25,#b95e49,#c2a08f,#a6aebc,#90a4c8,#7994cc,#627ec7,#4c65b9,#445bb2,#3d53ac,#384aa5,#33429e,#3647a2,#394ca6,#3c51aa,#4056ae,#445cb2,#4861b6,#4b64b9,#4e68bb,#516bbd,#546ebf,#4d66ba,#384aa5,#2f3d9a)"></i>
<i style="background:linear-gradient(#bc644e,#a83b32,#951222,#90031e,#90031e,#90031e,#90031e,#90031e,#90031e,#90031e,#90031e,#90031e,#90031e,#90031e,#90031e,#90031e,#90031e,#90031e,#90031e,#9a2026,#b95e4a,#c3a08f,#a7aebb,#92a5c8,#7b95cc,#6480c7,#4e68bb,#445cb3,#3e53ac,#384aa5,#32429e,#3647a2,#394ca6,#3c51aa,#4057af,#455cb3,#4962b7,#4c66b9,#4f69bc,#526cbe,#5570c0,#4e68bb,#384aa5,#2f3d9a)"></i>
<i style="background:linear-gradient(#bd654f,#a83c33,#951222,#90031e,#90031e,#90031e,#90031e,#90031e,#90031e,#90031e,#90031e,#90031e,#90031e,#90031e,#90031e,#90031e,#90031e,#90031e,#90031e,#9a2126,#ba5f4a,#c39f8e,#a7afbb,#93a6c7,#7d97cc,#6682c8,#506abc,#455db4,#3e54ad,#384ba5,#32419e,#3547a2,#394ca6,#3c51aa,#4157af,#455db4,#4a63b8,#4d67ba,#506abd,#536ebf,#5671c1,#4f69bc,#384aa5,#2f3d9a)"></i>
<i style="background:linear-gradient(#bd6650,#a93e34,#951322,#90031e,#90031e,#90031e,#90031e,#90031e,#90031e,#90031e,#90031e,#90031e,#90031e,#90031e,#90031e,#90031e,#90031e,#90031e,#90031e,#9b2226,#ba5f4b,#c39f8d,#a8afba,#94a7c7,#7f98cc,#6884c9,#526cbe,#465eb4,#3f55ad,#394ba6,#32429e,#3546a2,#394ca6,#3d52ab,#4158af,#465eb4,#4b64b8,#4e68bb,#516bbd,#546fbf,#5873c1,#506abd,#384ba5,#2f3d9a)"></i>
<i style="background:linear-gradient(#be6851,#aa3f34,#961423,#90031e,#90031e,#90031e,#90031e,#90031e,#90031e,#90031e,#90031e,#90031e,#90031e,#90031e,#90031e,#90031e,#90031e,#90031e,#90031e,#9b2327,#ba604b,#c39e8d,#a8afba,#95a7c6,#819acc,#6a86c9,#546ebf,#475fb5,#4056ae,#394ca6,#32429e,#3546a2,#394ca6,#3d52ab,#4158b0,#465eb5,#4b65b9,#4f69bc,#526dbe,#5671c0,#5974c2,#516cbd,#384ba5,#2f3d9a)"></i>
<i style="background:linear-gradient(#be6952,#ab4035,#961523,#90031e,#90031e,#90031e,#90031e,#90031e,#90031e,#90031e,#90031e,#90031e,#90031e,#90031e,#90031e,#90031e,#90031e,#90031e,#90031e,#9c2427,#ba604b,#c39e8c,#a9afb9,#96a8c6,#829bcc,#6c88ca,#5671c0,#4860b6,#4057af,#394da7,#33429e,#3546a1,#394ca6,#3d52ab,#4259b0,#475fb5,#4c65b9,#506abc,#536ebf,#5772c1,#5a76c3,#526dbe,#384ba6,#2f3d9a)"></i>
<i style="background:linear-gradient(#be6a53,#ab4236,#961623,#90031e,#90031e,#90031e,#90031e,#90031e,#90031e,#90031e,#90031e,#90031e,#90031e,#90031e,#90031e,#90031e,#90031e,#90031e,#90031e,#9c2528,#ba614c,#c49e8b,#a9afb9,#97a8c5,#849ccc,#6e8aca,#5773c1,#4961b7,#4157af,#3a4da7,#33439e,#3546a1,#394ca6,#3d52ab,#4259b0,#4760b5,#4d66ba,#516bbd,#546fbf,#5873c2,#5c78c4,#546ebf,#384ba6,#2f3d9a)"></i>
<i style="background:linear-gradient(#c06e56,#ad4437,#971723,#90041f,#90031e,#90031e,#90031e,#90031e,#90031e,#90031e,#90031e,#90031e,#90031e,#90031e,#90031e,#90031e,#90041f,#90041f,#90041f,#9e2829,#bb624c,#c49d8b,#aaafb9,#98a9c5,#859dcc,#6f8bcb,#5974c2,#4962b7,#4158b0,#3a4ea8,#33439f,#3445a0,#394ba6,#3d52ab,#4259b0,#4760b6,#4d67ba,#516bbd,#5570c0,#5974c2,#5d79c4,#546fbf,#394ba6,#2f3d9a)"></i>
<i style="background:linear-gradient(#c17159,#ae4639,#971824,#90041f,#90031e,#90031e,#90031e,#90031e,#90031e,#90031e,#90031e,#90031e,#90031e,#90031e,#90031e,#90041f,#90041f,#90051f,#91051f,#9f2b2a,#bc634d,#c49c8a,#aaafb8,#98a9c5,#859dcc,#708ccb,#5a76c3,#4a63b8,#4259b0,#3b4ea8,#34449f,#3444a0,#384ba6,#3d52ab,#4259b0,#4860b6,#4d67ba,#526cbd,#5671c0,#5a75c3,#5e7ac5,#5570c0,#394ca6,#2f3d9a)"></i>
<i style="background:linear-gradient(#c2755c,#af483a,#981a24,#91051f,#90031e,#90031e,#90031e,#90031e,#90031e,#90031e,#90031e,#90031e,#90031e,#90031e,#90031e,#90041f,#90051f,#91051f,#91061f,#a12f2c,#bc644e,#c49c89,#aaafb8,#99a9c5,#859dcb,#718dcb,#5b77c4,#4b64b8,#425ab1,#3b4fa9,#3444a0,#33439f,#384ba5,#3d52ab,#4259b0,#4860b6,#4e67bb,#526cbe,#5671c1,#5b76c3,#5f7bc6,#5671c1,#394ca7,#2f3d9a)"></i>
<i style="background:linear-gradient(#c2785f,#b04a3c,#981b24,#91051f,#90031e,#90031e,#90031e,#90031e,#90031e,#90031e,#90031e,#90031e,#90031e,#90031e,#90041e,#90041f,#91051f,#91061f,#91071f,#a2322d,#bd654f,#c49b88,#abafb8,#99a9c4,#869dcb,#718dcb,#5d78c4,#4b65b9,#435ab1,#3b50a9,#3445a0,#33439f,#384aa5,#3d52ab,#4259b0,#4860b6,#4e67bb,#526dbe,#5772c1,#5c77c4,#617dc6,#5773c1,#394da7,#2f3d9a)"></i>
<i style="background:linear-gradient(#c37b62,#b14c3d,#991d25,#91061f,#90031e,#90031e,#90031e,#90031e,#90031e,#90031e,#90031e,#90031e,#90031e,#90031e,#90041f,#90051f,#91061f,#91071f,#910820,#a4342e,#bd6650,#c49b88,#abafb7,#99a9c4,#869ecb,#728ecb,#5e7ac5,#4c65b9,#445bb2,#3c50aa,#3545a1,#32429e,#3749a4,#3c51aa,#4259b0,#4860b6,#4e68bb,#536dbe,#5873c1,#5d79c4,#627ec7,#5874c2,#3a4da7,#2f3d9a)"></i>
<i style="background:linear-gradient(#c47e65,#b24f3f,#991e25,#91071f,#90031e,#90031e,#90031e,#90031e,#90031e,#90031e,#90031e,#90031e,#90031e,#90031e,#90041f,#91051f,#91061f,#91071f,#920920,#a5362f,#bd6751,#c49b87,#abafb7,#9aaac4,#879ecb,#738ecb,#5f7bc5,#4d66ba,#445cb3,#3c51aa,#3546a1,#32419d,#3749a4,#3c51aa,#4259b0,#4860b6,#4e68bb,#536ebf,#5874c2,#5e7ac5,#637fc7,#5975c2,#3a4da7,#2f3d9a)"></i>
<i style="background:linear-gradient(#c58169,#b35140,#992026,#91071f,#90031e,#90031e,#90031e,#90031e,#90031e,#90031e,#90031e,#90031e,#90031e,#90031e,#90041f,#91051f,#91071f,#920820,#930b20,#a63931,#be6852,#c59a87,#acafb7,#9aaac4,#879ecb,#748fcb,#607cc6,#4e67bb,#455cb3,#3d52ab,#3547a2,#31409c,#3748a3,#3c51aa,#4259b0,#4860b6,#4e68bb,#546ebf,#5974c2,#5f7bc5,#6480c7,#5a76c3,#3a4ea8,#2f3d9a)"></i>
<i style="background:linear-gradient(#c6846c,#b45342,#9a2126,#920820,#90031e,#90031e,#90031e,#90031e,#90031e,#90031e,#90031e,#90031e,#90031e,#90031e,#90041f,#91061f,#91071f,#920920,#951122,#a83b32,#be6a53,#c59a86,#acb0b6,#9baac3,#889fcb,#7490cc,#617dc6,#4e68bb,#455db4,#3d53ac,#3647a2,#313f9b,#3648a3,#3c50aa,#4258b0,#4860b6,#4f68bb,#546fbf,#5a75c3,#607cc6,#6581c8,#5b77c4,#3a4ea8,#2f3d9a)"></i>
<i style="background:linear-gradient(#c6876f,#b55543,#9a2226,#920920,#90031e,#90031e,#90031e,#90031e,#90031e,#90031e,#90031e,#90031e,#90031e,#90031e,#90041f,#91061f,#920820,#920a20,#961623,#a93d33,#bf6b53,#c59986,#acb0b6,#9baac3,#889fcb,#7590cc,#627ec7,#506abc,#465eb4,#3e53ac,#3648a3,#303e9b,#3647a2,#3b50a9,#4258b0,#4860b6,#4f69bc,#546fbf,#5a76c3,#617dc6,#6783c8,#5c78c4,#3a4ea8,#2f3d9a)"></i>
<i style="background:linear-gradient(#c68a72,#b65745,#9b2327,#920a20,#90031e,#90031e,#90031e,#90031e,#90031e,#90031e,#90031e,#90031e,#90031e,#90031e,#90041f,#91061f,#920920,#930b20,#981c25,#aa4035,#bf6c54,#c59985,#acb0b6,#9baac3,#899fcb,#7691cc,#637fc7,#516bbd,#475fb5,#3e54ad,#3748a4,#2f3d9a,#3546a2,#3b4fa9,#4158b0,#4861b6,#4f69bc,#5570c0,#5b77c3,#617dc6,#6884c9,#5d79c5,#3b4fa8,#2f3d9a)"></i>
<i style="background:linear-gradient(#c68e77,#b75a47,#9b2427,#930b20,#90041f,#90041f,#90041e,#90031e,#90031e,#90031e,#90031e,#90031e,#90031e,#90031e,#90041f,#91071f,#920920,#930c21,#9a2126,#ab4236,#bf6d56,#c59a86,#adb0b5,#9cabc3,#8aa0cb,#7691cc,#6480c7,#526cbe,#4760b5,#3f55ad,#3749a4,#303e9a,#3546a1,#3b4fa9,#4158b0,#4861b6,#4f69bc,#5570c0,#5c78c4,#627ec7,#6985c9,#5e7ac5,#3b4fa9,#2f3d9a)"></i>
<i style="background:linear-gradient(#c6927c,#b95d49,#9c2528,#930d21,#91051f,#90041f,#90041f,#90031e,#90031e,#90031e,#90031e,#90031e,#90031e,#90031e,#90051f,#91071f,#920a20,#930d21,#9b2427,#ac4437,#c06f57,#c59a86,#adb0b5,#9cabc3,#8aa0cb,#7792cc,#6581c8,#536ebf,#4861b6,#3f56ae,#384aa5,#303e9b,#3545a1,#3b4fa8,#4158b0,#4861b6,#4f69bc,#5671c0,#5d78c4,#637fc7,#6a86c9,#5f7bc6,#3b4fa9,#2f3d9a)"></i>
<i style="background:linear-gradient(#c69680,#ba5f4b,#9c2628,#940f21,#91061f,#91051f,#90041f,#90041e,#90031e,#90031e,#90031e,#90031e,#90031e,#90031e,#90051f,#910820,#920b20,#930e21,#9d2728,#ae4639,#c17058,#c59a87,#adb0b5,#9dabc2,#8ba1ca,#7893cc,#6682c8,#546fbf,#4961b7,#4056af,#384ba6,#313f9c,#3445a0,#3a4ea8,#4158af,#4861b6,#506abc,#5671c1,#5d79c5,#6480c7,#6b87ca,#617dc6,#3b50a9,#2f3d9a)"></i>
<i style="background:linear-gradient(#c59985,#bb624d,#9d2728,#941022,#91061f,#91051f,#90051f,#90041f,#90031e,#90031e,#90031e,#90031e,#90031e,#90031e,#91051f,#920820,#930b20,#940f21,#9f2a2a,#af473a,#c17259,#c49b88,#adb0b5,#9dabc2,#8ba1ca,#7993cc,#6783c8,#5570c0,#4a62b7,#4157af,#394ca6,#31409c,#3444a0,#3a4ea8,#4157af,#4861b6,#506abc,#5772c1,#5e7ac5,#6581c8,#6d89ca,#627ec6,#3c50aa,#2f3d9a)"></i>
<i style="background:linear-gradient(#c49d8a,#bd654f,#9e2829,#951222,#91071f,#91061f,#91051f,#90041f,#90031e,#90031e,#90031e,#90031e,#90031e,#90031e,#91051f,#920920,#930c21,#941022,#a02d2b,#b0493b,#c1735b,#c49b88,#aeb0b4,#9eabc2,#8ca1ca,#7994cc,#6884c9,#5772c1,#4a63b8,#4158b0,#394da7,#32419d,#33439f,#3a4da7,#4157af,#4861b6,#506abc,#5772c1,#5f7bc5,#6682c8,#6e8aca,#637fc7,#3c51aa,#2f3d9a)"></i>
<i style="background:linear-gradient(#c2a08f,#be6851,#9e2929,#951422,#920820,#91071f,#91051f,#90041f,#90031e,#90031e,#90031e,#90031e,#90031e,#90031e,#91051f,#920920,#930d21,#951122,#a1302c,#b14b3c,#c2745c,#c49c89,#aeb0b4,#9eacc2,#8ca2ca,#7a94cc,#6985c9,#5873c2,#4b64b8,#4259b0,#3a4ea8,#32429e,#33439f,#3a4da7,#4157af,#4861b6,#506abc,#5873c1,#5f7bc6,#6783c9,#6f8bcb,#6480c7,#3c51aa,#2f3d9a)"></i>
<i style="background:linear-gradient(#c1a394,#be6a53,#9f2a2a,#961523,#920920,#91071f,#91061f,#90041f,#90031e,#90031e,#90031e,#90031e,#90031e,#90031e,#91051f,#920a20,#940e21,#951222,#a3322d,#b24d3e,#c2765d,#c49c89,#aeb0b4,#9eacc1,#8da2ca,#7b95cc,#6a86c9,#5974c2,#4c65b9,#435ab1,#3b4ea8,#33439f,#33429e,#394da7,#4057af,#4861b6,#506abd,#5873c2,#607cc6,#6884c9,#708ccb,#6581c8,#3c51aa,#2f3d9a)"></i>
<i style="background:linear-gradient(#bfa698,#bf6d55,#9f2b2a,#971723,#920a20,#920820,#91061f,#90041f,#90031e,#90031e,#90031e,#90031e,#90031e,#90031e,#91051f,#920a20,#940f21,#951322,#a4352f,#b24f3f,#c2775e,#c49d8a,#aeb0b4,#9facc1,#8da2c9,#7b95cc,#6b87c9,#5a75c3,#4c66ba,#435bb2,#3b4fa9,#33439f,#32419e,#394ca6,#4056ae,#4861b6,#516bbd,#5874c2,#617dc6,#6985c9,#718dcb,#6682c8,#3d52ab,#2f3d9a)"></i>
<i style="background:linear-gradient(#bda89d,#c06f58,#a02c2b,#971924,#920a20,#920820,#91061f,#90041f,#90031e,#90031e,#90031e,#90031e,#90031e,#90031e,#91061f,#920b20,#940f21,#961423,#a53730,#b35040,#c27860,#c49d8b,#afb0b3,#9facc1,#8ea3c9,#7c96cc,#6b87ca,#5b77c3,#4d67ba,#445cb2,#3c50aa,#3444a0,#32419d,#394ca6,#4056ae,#4861b6,#516bbd,#5974c2,#617dc6,#6a86c9,#738ecb,#6783c8,#3d52ab,#2f3d9a)"></i>
<i style="background:linear-gradient(#bbaaa1,#c1725a,#a02d2b,#981a24,#930b20,#920920,#91071f,#90041f,#90031e,#90031e,#90031e,#90031e,#90031e,#90031e,#91061f,#930b20,#941022,#961623,#a73931,#b45241,#c37961,#c49d8b,#afb0b3,#a0acc1,#8fa3c9,#7c96cc,#6c88ca,#5c78c4,#4e67bb,#455cb3,#3c51aa,#3545a1,#31409c,#384ba6,#4056ae,#4861b6,#516bbd,#5975c2,#627ec7,#6b87ca,#748fcb,#6884c9,#3d52ab,#2f3d9a)"></i>
<i style="background:linear-gradient(#baaba2,#c1735a,#a2302c,#981c25,#930d21,#920a20,#920820,#91051f,#90041f,#90041f,#90041f,#90041e,#90031e,#90031e,#91061f,#930c20,#951122,#971824,#a73a32,#b45342,#c37961,#c49d8a,#b0b0b2,#a1adc0,#8fa4c9,#7d97cc,#6d89ca,#5d79c4,#4e68bb,#455db4,#3d52ab,#3546a1,#31409c,#384ba5,#3f55ae,#4860b6,#516bbd,#5975c2,#627ec7,#6b87ca,#748fcb,#6884c9,#3d52ab,#2f3d9a)"></i>
<i style="background:linear-gradient(#b9aba3,#c1735b,#a3322d,#991e25,#940f21,#930c21,#920920,#91061f,#91051f,#90051f,#90041f,#90041f,#90041f,#90031e,#91061f,#930c21,#951222,#981a24,#a83b32,#b45342,#c37961,#c49c89,#b0b1b1,#a1adbf,#90a4c8,#7e98cc,#6e8aca,#5e7ac5,#4f69bc,#465eb4,#3d52ab,#3546a2,#313f9c,#384aa5,#3f55ae,#4860b6,#516bbd,#5974c2,#627ec7,#6b87ca,#748fcb,#6884c9,#3d52ab,#2f3d9a)"></i>
<i style="background:linear-gradient(#b9aca4,#c2745c,#a4342e,#991f25,#941022,#930d21,#920a20,#91071f,#91061f,#91051f,#91051f,#90041f,#90041f,#90031e,#91061f,#930c21,#951322,#981c25,#a83c32,#b55442,#c37961,#c49b88,#b1b1b0,#a2adbf,#91a5c8,#7f99cc,#6f8bcb,#5f7bc5,#5069bc,#465eb4,#3d53ac,#3647a2,#303f9b,#384aa5,#3f55ad,#4760b6,#506abd,#5974c2,#627ec7,#6b87ca,#748fcb,#6884c9,#3d52ab,#2f3d9a)"></i>
<i style="background:linear-gradient(#b8aca5,#c2755c,#a5362f,#9a2126,#951222,#940f21,#930c20,#920820,#91071f,#91061f,#91051f,#91051f,#90041f,#90041e,#91061f,#930d21,#951322,#991f25,#a93d33,#b55443,#c37960,#c59a87,#b3b0ae,#a3aebe,#92a6c8,#8099cc,#708ccb,#607cc6,#506abd,#475fb5,#3e53ac,#3647a3,#303e9b,#374aa4,#3f55ad,#4760b5,#506abd,#5974c2,#627ec7,#6b87ca,#748fcb,#6884c9,#3d52ab,#2f3d9a)"></i>
<i style="background:linear-gradient(#b8aca6,#c2755d,#a63830,#9a2126,#951322,#941022,#930d21,#920920,#91071f,#91071f,#91061f,#91051f,#90041f,#90041e,#91071f,#930d21,#961423,#9a2026,#a93d33,#b55543,#c37960,#c59a86,#b4afac,#a4aebe,#93a6c7,#819acc,#718dcb,#617dc6,#516bbd,#475fb5,#3e54ad,#3648a3,#303e9b,#3749a4,#3f54ad,#475fb5,#506abc,#5974c2,#627ec6,#6b87ca,#748fcb,#6884c9,#3d52ab,#2f3d9a)"></i>
<i style="background:linear-gradient(#b7ada7,#c2765d,#a73931,#9b2226,#961523,#951122,#940e21,#920a20,#920820,#91071f,#91061f,#91061f,#90051f,#90041f,#91071f,#940e21,#961523,#9a2226,#a93e34,#b55543,#c37960,#c59985,#b5aeaa,#a5aebd,#94a7c7,#829bcc,#728ecb,#627ec6,#526cbe,#4860b6,#3f55ad,#3748a4,#303d9a,#3749a4,#3e54ad,#475fb5,#506abc,#5874c2,#627ec6,#6b87ca,#748fcb,#6884c9,#3d52ab,#2f3d9a)"></i>
<i style="background:linear-gradient(#b7ada8,#c2765e,#a83b32,#9b2327,#961723,#951322,#940f21,#930b20,#920920,#920820,#91071f,#91061f,#91051f,#90041f,#91071f,#940e21,#961623,#9b2327,#aa3f34,#b55644,#c37960,#c59884,#b6ada8,#a6aebc,#95a7c6,#839ccc,#738ecb,#637fc7,#536dbe,#4861b6,#3f55ae,#3749a4,#2f3d9a,#3748a4,#3e54ac,#475fb5,#506abc,#5874c2,#617dc6,#6b87ca,#748fcb,#6884c9,#3d52ab,#2f3d9a)"></i>
<i style="background:linear-gradient(#b6ada9,#c2775f,#a93d33,#9b2327,#971824,#961423,#941022,#930d21,#920a20,#920920,#91081f,#91061f,#91051f,#90041f,#91071f,#940f21,#971723,#9c2427,#aa4035,#b65644,#c37960,#c59883,#b7ada7,#a7aebb,#96a8c6,#849ccc,#748fcb,#6480c7,#546ebf,#4961b7,#4056ae,#374aa4,#2f3d9a,#3648a3,#3e54ac,#465fb5,#5069bc,#5874c2,#617dc6,#6b87c9,#748fcb,#6884c9,#3d52ab,#2f3d9a)"></i>
<i style="background:linear-gradient(#b6aeaa,#c2785f,#aa3f34,#9b2427,#971a24,#961623,#951222,#930e21,#930b20,#920920,#920820,#91071f,#91051f,#90041f,#91071f,#940f21,#971824,#9c2628,#ab4135,#b65744,#c37960,#c59782,#b8aca5,#a8afbb,#97a8c5,#859dcb,#7490cc,#6480c8,#556fc0,#4962b7,#4056ae,#384aa5,#303e9a,#3648a3,#3e53ac,#465eb4,#4f69bc,#5873c2,#617dc6,#6a86c9,#748fcb,#6884c9,#3d52ab,#2f3d9a)"></i>
<i style="background:linear-gradient(#b5aeab,#c37860,#aa4035,#9c2427,#981b24,#971723,#951322,#940f21,#930c21,#920a20,#920920,#91071f,#91061f,#90041f,#91071f,#941022,#971824,#9d2728,#ab4136,#b65745,#c37960,#c59681,#b9aba4,#a8afba,#98a9c5,#869ecb,#7590cc,#6581c8,#5570c0,#4a63b7,#4057af,#384ba5,#303e9b,#3647a3,#3d53ac,#465eb4,#4f69bc,#5873c2,#617dc6,#6a86c9,#748fcb,#6884c9,#3d52ab,#2f3d9a)"></i>
<i style="background:linear-gradient(#b4aeab,#c37961,#ab4236,#9c2427,#991d25,#971824,#961423,#941021,#930c21,#930b20,#920920,#91071f,#91061f,#90041f,#910820,#941022,#971924,#9e2829,#ab4236,#b65745,#c37860,#c69580,#baaba2,#a9afb9,#99a9c4,#889ecb,#7691cc,#6682c8,#5672c1,#4a63b8,#4158af,#384ba6,#303f9b,#3647a2,#3d53ac,#465eb4,#4f69bc,#5873c2,#617dc6,#6a86c9,#748fcb,#6884c9,#3d52ab,#2f3d9a)"></i>
<i style="background:linear-gradient(#b4afac,#c37a62,#ac4337,#9c2528,#991e25,#981a24,#961523,#941122,#930d21,#930b20,#920a20,#920820,#91061f,#90041f,#920820,#951122,#981a24,#9e2929,#ac4236,#b65845,#c2785f,#c6947e,#bbaaa0,#aaafb8,#9aaac4,#899fcb,#7792cc,#6783c9,#5773c1,#4b64b8,#4158b0,#394ca6,#313f9c,#3547a2,#3d52ab,#465eb4,#4f69bc,#5873c2,#617dc6,#6a86c9,#748fcb,#6884c9,#3d52ab,#2f3d9a)"></i>
<i style="background:linear-gradient(#b4afac,#c37c63,#ad4538,#9c2528,#9a2026,#981b24,#961623,#951222,#940e21,#930c21,#920a20,#920820,#91061f,#90041f,#920820,#951222,#981b24,#9f2a2a,#ac4337,#b75845,#c2775f,#c6937d,#bca99f,#abafb7,#9baac3,#8aa0cb,#7893cc,#6884c9,#5874c2,#4c65b9,#4259b0,#394ca7,#31409c,#3546a2,#3d52ab,#455db4,#4f69bc,#5873c1,#617dc6,#6a86c9,#748fcb,#6884c9,#3d52ab,#2f3d9a)"></i>
<i style="background:linear-gradient(#b3afad,#c47d64,#ae4739,#9c2528,#9a2126,#981c25,#971823,#951322,#940f21,#930d21,#930b20,#920920,#91061f,#90041f,#920820,#951222,#981c25,#9f2b2a,#ac4337,#b75846,#c2775e,#c6927c,#bda89d,#acb0b6,#9cabc3,#8ba1ca,#7994cc,#6985c9,#5975c2,#4c65b9,#4259b1,#3a4da7,#31409c,#3546a1,#3d52ab,#455db4,#4f68bb,#5873c1,#617dc6,#6a86c9,#748fcb,#6884c9,#3d52ab,#2f3d9a)"></i>
<i style="background:linear-gradient(#b3b0ae,#c47e65,#af483a,#9c2528,#9a2226,#991e25,#971924,#951422,#941022,#930e21,#930b20,#920920,#91071f,#90041f,#920820,#951322,#991d25,#a02d2b,#ad4437,#b75946,#c2765e,#c6917b,#bea79b,#adb0b5,#9dabc2,#8ca1ca,#7a94cc,#6a86c9,#5a76c3,#4d66ba,#435ab1,#3a4ea8,#32419d,#3545a1,#3c51ab,#455db3,#4f68bb,#5773c1,#617dc6,#6a86c9,#748fcb,#6884c9,#3d52ab,#2f3d9a)"></i>
<i style="background:linear-gradient(#b2b0ae,#c47f66,#b04a3b,#9d2628,#9b2327,#991f25,#981a24,#961523,#951122,#940e21,#930c21,#920920,#91071f,#90041f,#920920,#951322,#991e25,#a02e2b,#ad4438,#b75946,#c2765d,#c6907a,#bea79a,#aeb0b4,#9eacc1,#8da2ca,#7b95cc,#6b87ca,#5b77c3,#4d67ba,#435bb2,#3a4ea8,#32419d,#3445a0,#3c51aa,#455db3,#4f68bb,#5773c1,#617dc6,#6a86c9,#748fcb,#6884c9,#3d52ab,#2f3d9a)"></i>
<i style="background:linear-gradient(#b2b0af,#c48067,#b14b3c,#9d2728,#9b2427,#9a2026,#981b24,#961623,#951222,#940f21,#930c21,#920a20,#91071f,#90051f,#920920,#961423,#991f25,#a12f2c,#ad4538,#b75946,#c2755d,#c68f78,#bfa698,#aeb0b4,#9facc1,#8ea3c9,#7c96cc,#6c88ca,#5c78c4,#4e67bb,#445bb2,#3b4fa9,#32429e,#3444a0,#3c51aa,#455cb3,#4e68bb,#5773c1,#617dc6,#6a86c9,#748fcb,#6884c9,#3d52ab,#2f3d9a)"></i>
<i style="background:linear-gradient(#b2b0b0,#c58168,#b14c3d,#9e2829,#9c2527,#9a2126,#981c25,#961723,#951222,#941022,#930d21,#920a20,#91071f,#90051f,#920920,#961423,#9a2026,#a1302c,#ad4538,#b75a46,#c2755d,#c68e77,#c0a597,#afb0b3,#a0acc0,#8fa3c9,#7d97cc,#6d89ca,#5d79c4,#4f68bb,#445cb3,#3b4fa9,#33429e,#3444a0,#3c50aa,#445cb3,#4e68bb,#5772c1,#617dc6,#6a86c9,#748fcb,#6884c9,#3d52ab,#2f3d9a)"></i>
<i style="background:linear-gradient(#b1b1b0,#c58269,#b24e3e,#9e2929,#9c2528,#9b2226,#991d25,#971824,#951322,#941022,#930d21,#920a20,#91081f,#90051f,#920920,#961523,#9a2126,#a2312c,#ae4639,#b75a47,#c2755c,#c68e76,#c0a495,#b0b1b2,#a1adc0,#90a4c8,#7e98cc,#6e8aca,#5e7ac5,#4f69bc,#455db3,#3c50aa,#33439f,#34449f,#3c50a9,#445cb3,#4e68bb,#5772c1,#617dc6,#6a86c9,#748fcb,#6884c9,#3d52ab,#2f3d9a)"></i>
<i style="background:linear-gradient(#b1b1b1,#c5836a,#b24f3f,#9f2a2a,#9d2628,#9b2327,#991f25,#971924,#961423,#951122,#940e21,#930b20,#920820,#91051f,#920920,#961623,#9a2126,#a3322d,#ae4639,#b75a47,#c2745c,#c68d75,#c1a394,#b1b1b1,#a2adbf,#91a5c8,#7f98cc,#6f8bcb,#5f7bc5,#506abc,#455db4,#3c51aa,#33439f,#33439f,#3b50a9,#445cb2,#4e67bb,#5772c1,#617dc6,#6a86c9,#748fcb,#6884c9,#3d52ab,#2f3d9a)"></i>
<i style="background:linear-gradient(#b0b1b1,#c5836b,#b35141,#a02d2b,#9e2929,#9c2528,#9a2126,#981b24,#961723,#951422,#941022,#930d21,#920a20,#91071f,#930d21,#971924,#9b2327,#a4342e,#af483a,#b85c48,#c2755d,#c68d76,#c1a393,#b2b0af,#a3aebe,#92a6c8,#8099cc,#708ccb,#607cc6,#516bbd,#465eb5,#3d52ab,#3445a1,#32429e,#3a4ea8,#435ab1,#4d66ba,#5671c1,#5f7bc6,#6985c9,#728ecb,#6783c9,#3d52ab,#2f3d9a)"></i>
<i style="background:linear-gradient(#b0b1b2,#c5846b,#b55342,#a2302c,#9f2c2a,#9d2729,#9b2327,#991e25,#971924,#961623,#951322,#941022,#930d21,#920a20,#941022,#981c24,#9c2427,#a5362f,#b0493b,#b95e4a,#c2775e,#c68e77,#c1a393,#b3b0ae,#a4aebe,#93a6c7,#819acc,#718dcb,#627ec6,#526dbe,#4760b5,#3e53ac,#3546a2,#31409c,#394da7,#4259b0,#4c65b9,#5570c0,#5e7ac5,#6884c9,#718dcb,#6783c8,#3d52ab,#2f3d9a)"></i>
<i style="background:linear-gradient(#b0b0b2,#c6856c,#b65644,#a3332d,#a12e2b,#9e2a2a,#9c2528,#9a2026,#981c25,#971924,#961623,#951222,#940f21,#930c21,#961423,#991e25,#9c2528,#a63831,#b04b3c,#ba604b,#c2785f,#c68e77,#c1a393,#b3afad,#a5aebd,#94a7c7,#829bcc,#728ecb,#637fc7,#546ebf,#4861b6,#3f55ad,#3648a3,#303f9b,#384ba6,#4157af,#4a63b8,#546fbf,#5d79c5,#6783c8,#708ccb,#6783c8,#3d53ab,#2f3d9a)"></i>
<i style="background:linear-gradient(#afb0b3,#c6856d,#b75845,#a4352f,#a2312c,#9f2c2a,#9d2728,#9b2226,#991e25,#981b24,#971824,#961523,#951222,#940f21,#971723,#9a2126,#9d2728,#a73a32,#b14c3d,#bb614c,#c37860,#c68f78,#c1a293,#b4afac,#a6aebc,#95a7c6,#849ccc,#738fcb,#6480c7,#5570c0,#4962b7,#4056ae,#3749a4,#303d9a,#374aa4,#4056ae,#4962b7,#536dbe,#5c78c4,#6682c8,#6f8bcb,#6682c8,#3d53ac,#2f3d9a)"></i>
<i style="background:linear-gradient(#afb0b3,#c6866d,#b85a47,#a63730,#a3332e,#a12e2b,#9e2929,#9b2327,#9a2126,#991e25,#981b24,#971723,#961423,#951122,#981a24,#9b2226,#9d2829,#a83c33,#b24d3e,#bc634d,#c37961,#c68f78,#c1a292,#b5aeab,#a6aebc,#96a8c6,#859dcc,#7590cc,#6581c8,#5671c0,#4a63b8,#4157af,#384ba5,#303e9a,#3648a3,#3e54ad,#4860b6,#526cbe,#5b77c3,#6581c8,#6e8aca,#6682c8,#3d53ac,#2f3d9a)"></i>
<i style="background:linear-gradient(#aeb0b4,#c6866e,#b95d49,#a83b32,#a4352f,#a2302c,#9f2b2a,#9c2528,#9b2227,#9a2026,#991d25,#981a24,#961723,#961523,#991d25,#9b2427,#9f2b2a,#a93e34,#b24f3f,#bc644e,#c37a61,#c69079,#c1a292,#b5aeaa,#a7aebb,#97a8c5,#869dcb,#7691cc,#6682c8,#5772c1,#4b64b9,#4258b0,#394ca6,#313f9c,#3647a2,#3d53ac,#475fb5,#516bbd,#5a76c3,#6480c7,#6d89ca,#6581c8,#3d53ac,#2f3d9a)"></i>
<i style="background:linear-gradient(#aeb0b4,#c6876f,#ba5f4a,#a93e34,#a63730,#a3322d,#a02c2b,#9d2628,#9b2427,#9b2226,#992026,#981c25,#971924,#971824,#9a2026,#9c2528,#a02d2b,#aa4035,#b35040,#bd664f,#c37b62,#c69079,#c1a292,#b6aea9,#a8afba,#98a9c5,#879ecb,#7792cc,#6884c9,#5974c2,#4c65b9,#425ab1,#3a4da7,#32419d,#3545a1,#3c51ab,#455db4,#506abc,#5975c2,#627ec7,#6c88ca,#6581c8,#3d53ac,#2f3d9a)"></i>
<i style="background:linear-gradient(#aeb0b4,#c6886f,#bb614c,#ab4136,#a73931,#a4342e,#a12e2b,#9e2829,#9c2528,#9b2327,#9a2126,#991f25,#981c25,#981c24,#9a2226,#9d2628,#a2302c,#ab4136,#b35140,#bd6750,#c37c63,#c6907a,#c2a292,#b7ada8,#a9afb9,#99a9c4,#889fcb,#7892cc,#6985c9,#5a75c3,#4d66ba,#435bb2,#3b4fa8,#33429e,#3444a0,#3b50a9,#445cb3,#4f68bb,#5873c2,#617dc6,#6b87ca,#6581c8,#3d53ac,#2f3d9a)"></i>
<i style="background:linear-gradient(#adb0b5,#c68870,#bc634d,#ad4438,#a83c32,#a5362f,#a2302c,#9e2929,#9d2728,#9c2528,#9b2327,#9a2126,#991e25,#991f25,#9b2327,#9d2829,#a3322d,#ac4337,#b45241,#be6851,#c37c64,#c6907a,#c2a292,#b7ada7,#aaafb9,#9aaac4,#89a0cb,#7993cc,#6a86c9,#5b77c3,#4e67bb,#445cb3,#3c50a9,#34439f,#33429e,#3b4ea8,#435ab2,#4d67ba,#5772c1,#607cc6,#6a86c9,#6581c8,#3e53ac,#2f3d9a)"></i>
<i style="background:linear-gradient(#adb0b5,#c68971,#bd654f,#ae473a,#a93e34,#a63830,#a3322d,#9f2b2a,#9e2929,#9d2628,#9c2427,#9b2227,#9a2026,#9a2126,#9c2528,#9e2929,#a4342e,#ad4438,#b45342,#be6952,#c47d64,#c6917a,#c2a291,#b8ada7,#aaafb8,#9baac3,#8ba0cb,#7a94cc,#6b87ca,#5c78c4,#4f68bb,#455db4,#3c51ab,#3445a1,#32419d,#3a4da7,#4259b0,#4c65b9,#5671c1,#5f7bc6,#6884c9,#6480c7,#3e53ac,#2f3d9a)"></i>
<i style="background:linear-gradient(#acb0b6,#c68971,#bd6750,#b04a3c,#aa4035,#a73a31,#a3332e,#a02d2b,#9f2b2a,#9e2929,#9d2728,#9c2427,#9b2227,#9b2427,#9d2729,#9f2b2a,#a53730,#ae4639,#b55443,#be6a53,#c47d64,#c6917a,#c2a191,#b8aca6,#abafb7,#9cabc3,#8ca1ca,#7b95cc,#6c88ca,#5d79c5,#5069bc,#465eb4,#3d53ac,#3546a2,#313f9c,#394ba6,#4157af,#4b64b8,#5570c0,#5e7ac5,#6783c9,#6480c7,#3e53ac,#2f3d9a)"></i>
<i style="background:linear-gradient(#abafb7,#c68971,#be6952,#b14c3d,#ab4136,#a83b32,#a4352f,#a12f2c,#a02d2b,#9f2b2a,#9e2929,#9d2728,#9c2427,#9d2628,#9e2a2a,#a02d2b,#a73931,#ae473a,#b55543,#be6a53,#c47d64,#c6907a,#c2a191,#b8aca5,#acb0b7,#9dabc2,#8ca2ca,#7c96cc,#6d89ca,#5f7bc5,#516bbd,#475fb5,#3e54ad,#3648a3,#303e9a,#384aa5,#4056ae,#4a63b8,#546fbf,#5d79c5,#6682c8,#637fc7,#3e53ac,#2f3d9a)"></i>
<i style="background:linear-gradient(#abafb7,#c68971,#bf6b53,#b34f3f,#ac4337,#a93d33,#a53730,#a2312d,#a12f2c,#a02d2b,#9f2b2a,#9e2929,#9d2628,#9e2929,#9f2c2a,#a12f2c,#a83b32,#af493b,#b65644,#bf6b54,#c47d64,#c6907a,#c2a190,#b9aca4,#acb0b6,#9dabc2,#8da2ca,#7c96cc,#6e8aca,#607cc6,#526cbe,#4860b6,#3f55ae,#3749a4,#303d9a,#3748a3,#3e54ad,#4961b7,#536ebf,#5c78c4,#6581c8,#637fc7,#3d53ac,#2f3d9a)"></i>
<i style="background:linear-gradient(#aaafb8,#c68a72,#bf6c55,#b45141,#ad4538,#aa3f34,#a63831,#a3332e,#a2312d,#a12f2c,#a02d2b,#9f2b2a,#9e2929,#9f2b2a,#a12e2b,#a2312d,#a93e33,#b04a3c,#b65745,#bf6b54,#c47d64,#c6907a,#c2a190,#b9aba4,#adb0b5,#9eacc1,#8ea3c9,#7d97cc,#6f8bcb,#617dc6,#536ebe,#4962b7,#4057af,#384ba5,#313f9c,#3647a2,#3d53ac,#4760b6,#526dbe,#5b77c4,#6480c7,#627ec7,#3d53ac,#2f3d9a)"></i>
<i style="background:linear-gradient(#aaafb9,#c68a72,#c06e57,#b55442,#ae4739,#ab4135,#a73a32,#a4352e,#a3332e,#a2312d,#a12f2c,#a02d2b,#9f2b2a,#a02d2b,#a2302c,#a3332d,#aa4035,#b14b3d,#b75845,#bf6c55,#c47d65,#c69079,#c2a090,#baaba3,#aeb0b4,#9facc1,#8fa4c9,#7e98cc,#708ccb,#627ec7,#546fbf,#4a63b7,#4158af,#394ca7,#32419d,#3545a1,#3c51ab,#465eb4,#516cbd,#5b76c3,#627ec7,#627ec7,#3d53ac,#2f3d9a)"></i>
<i style="background:linear-gradient(#a9afb9,#c68a72,#c07058,#b65644,#af483b,#ac4236,#a83c32,#a5362f,#a4352e,#a3332d,#a2312d,#a12f2c,#a02d2b,#a1302c,#a3322d,#a4352f,#ab4136,#b14c3d,#b75946,#bf6c55,#c47d65,#c69079,#c2a08f,#baaba3,#aeb0b4,#a0acc0,#90a4c8,#7f98cc,#718dcb,#637fc7,#5570c0,#4b64b8,#4259b0,#3a4ea8,#33429e,#33439f,#3b50a9,#455db3,#506abd,#5a75c3,#617dc6,#627ec6,#3d53ac,#2f3d9a)"></i>
<i style="background:linear-gradient(#a8afba,#c68a72,#c1725a,#b75946,#b04a3c,#ad4438,#a93d33,#a63830,#a5362f,#a4352e,#a3332d,#a2312c,#a1302c,#a3322d,#a4342e,#a63830,#ac4337,#b24e3e,#b75a47,#bf6d55,#c47e65,#c69079,#c2a08f,#baaba2,#afb0b3,#a1adc0,#91a5c8,#8099cc,#728ecb,#6480c7,#5672c1,#4c65b9,#435ab1,#3b4fa9,#34449f,#32429e,#3a4ea8,#445bb2,#4f69bc,#5975c2,#607cc6,#617dc6,#3d53ac,#2f3d9a)"></i>
<i style="background:linear-gradient(#a7afbb,#c68a72,#c1735b,#b85b48,#b14c3d,#ae4639,#aa3f34,#a73a31,#a63830,#a5362f,#a4342e,#a3332d,#a3322d,#a4342e,#a5362f,#a73a32,#ad4538,#b24f3f,#b85b47,#c06d56,#c47e65,#c69079,#c3a08f,#bbaaa1,#b0b0b2,#a2adbf,#92a5c8,#819acc,#738fcb,#6581c8,#5873c1,#4c66ba,#445bb2,#3c50aa,#3545a1,#31409c,#394da7,#4259b1,#4e68bb,#5974c2,#5f7bc6,#617dc6,#3d53ab,#2f3d9a)"></i>
<i style="background:linear-gradient(#a7aebb,#c68a72,#c2755d,#b95d49,#b24e3e,#ae473a,#ab4035,#a83c32,#a73a31,#a63830,#a5362f,#a4342e,#a4342e,#a5362f,#a63730,#a83d33,#ae4639,#b35040,#b85c48,#c06e56,#c47e65,#c69079,#c39f8e,#bbaaa1,#b0b1b2,#a3adbf,#93a6c7,#829bcc,#748fcb,#6682c8,#5974c2,#4d67ba,#455cb3,#3d52ab,#3546a2,#303e9b,#384ba6,#4158af,#4d66ba,#5873c2,#5e7ac5,#607cc6,#3d52ab,#2f3d9a)"></i>
<i style="background:linear-gradient(#a6aebc,#c68a72,#c2775e,#ba604b,#b3503f,#af493b,#ab4236,#a93d33,#a83c32,#a73a31,#a63830,#a5362f,#a5362f,#a63730,#a63931,#aa3f34,#af483a,#b35140,#b95d49,#c06e56,#c47e65,#c69079,#c39f8e,#bbaaa0,#b1b1b1,#a3aebe,#94a7c7,#839ccc,#7590cc,#6783c9,#5a75c3,#4e68bb,#455db4,#3d53ac,#3648a3,#2f3d9a,#3749a4,#4056ae,#4c65b9,#5773c1,#5d79c5,#607cc6,#3d52ab,#2f3d9a)"></i>
<i style="background:linear-gradient(#a5aebc,#c68d76,#c37a61,#bc634d,#b55442,#b14c3d,#ad4538,#ab4035,#a93e34,#a83c33,#a73a31,#a63830,#a63830,#a73931,#a83b32,#ab4135,#b04a3c,#b45342,#ba5f4a,#c07058,#c47e66,#c69079,#c39f8e,#bcaaa0,#b2b0b0,#a5aebd,#96a8c6,#869dcb,#7792cc,#6a86c9,#5c78c4,#506abc,#4760b5,#3f55ae,#384aa5,#313f9c,#3546a2,#3d53ac,#4961b6,#546fbf,#5b76c3,#5e79c5,#3c51ab,#2f3d9a)"></i>
<i style="background:linear-gradient(#a5aebd,#c6917a,#c47d65,#bd6750,#b65845,#b35040,#af473a,#ac4337,#ab4135,#aa3e34,#a83c33,#a73a31,#a73a31,#a83c32,#a93d33,#ac4337,#b14c3d,#b55543,#bb614c,#c17159,#c47f66,#c69079,#c39f8d,#bca99f,#b2b0ae,#a6aebc,#98a9c5,#899fcb,#7a94cc,#6c88ca,#5f7bc5,#526cbe,#4962b7,#4157af,#394da7,#32429e,#34449f,#3c50a9,#465eb4,#526cbd,#5873c2,#5b77c3,#3c51aa,#2f3d9a)"></i>
<i style="background:linear-gradient(#a4aebe,#c6947e,#c58168,#be6a53,#b85c48,#b45342,#b04a3c,#ae4639,#ac4337,#ab4135,#a93e34,#a83c32,#a83c32,#a93e34,#aa4035,#ad4538,#b24e3e,#b65644,#bc634d,#c1725a,#c48067,#c69079,#c39e8d,#bda99e,#b3afad,#a8afbb,#9aaac4,#8ba1ca,#7c96cc,#6f8bcb,#617dc6,#546fbf,#4b64b8,#435ab1,#3b4fa9,#3444a0,#32419d,#3a4da7,#435ab2,#4f68bb,#5570c0,#5974c2,#3b50a9,#2f3d9a)"></i>
<i style="background:linear-gradient(#a3aebe,#c59781,#c5846b,#c06d56,#ba604b,#b65644,#b24d3e,#af483a,#ad4539,#ac4337,#ab4035,#a93d33,#a93e34,#aa4035,#ab4236,#ae473a,#b35040,#b75846,#bc654f,#c1735b,#c58168,#c69079,#c39e8c,#bda99d,#b4afac,#a9afb9,#9baac3,#8da2ca,#7f98cc,#718dcb,#6480c7,#5672c1,#4d66ba,#445cb3,#3d52ab,#3647a2,#303e9b,#384aa5,#4157af,#4c65b9,#536dbe,#5671c1,#3b4fa8,#2f3d9a)"></i>
<i style="background:linear-gradient(#a3adbf,#c59985,#c6876f,#c17059,#bc634d,#b75a46,#b34f3f,#b04b3c,#af483a,#ad4538,#ac4236,#aa3f34,#aa4035,#ab4236,#ac4437,#af493b,#b45241,#b75a47,#bd6750,#c2755c,#c58169,#c6907a,#c39e8c,#bda89d,#b4afab,#aaafb8,#9dabc2,#8fa4c9,#819acc,#748fcb,#6682c8,#5974c2,#4f68bb,#465eb4,#3e54ad,#3749a4,#303e9b,#3647a3,#3e54ad,#4961b7,#506abc,#546fbf,#3a4ea8,#2f3d9a)"></i>
<i style="background:linear-gradient(#a2adbf,#c49c89,#c68a72,#c1735b,#bd6750,#b95d49,#b45241,#b24d3e,#b04a3c,#ae473a,#ad4437,#ab4135,#ab4236,#ac4437,#ae4639,#b14b3c,#b55342,#b85c48,#be6952,#c2765d,#c58269,#c6907a,#c49e8c,#bda89c,#b5aeaa,#abafb7,#9facc1,#91a5c8,#849ccc,#7691cc,#6985c9,#5b77c4,#506abc,#4860b6,#4056ae,#394ba6,#32419d,#3445a0,#3c51aa,#465eb4,#4e67bb,#526cbd,#394da7,#2f3d9a)"></i>
<i style="background:linear-gradient(#a1adc0,#c39f8d,#c68d75,#c2765e,#be6a53,#ba5f4b,#b55443,#b35040,#b14c3d,#af493b,#ae4639,#ac4236,#ac4437,#ae4639,#af483a,#b24d3e,#b55544,#b95e49,#be6a53,#c2775f,#c5836a,#c6917a,#c49d8b,#bea79b,#b6aea9,#acb0b6,#a0acc0,#93a6c7,#869ecb,#7993cc,#6b87ca,#5e7ac5,#526cbe,#4a62b7,#4258b0,#3a4ea8,#33439f,#32429e,#3a4ea8,#435ab2,#4b64b8,#4f69bc,#394ca6,#2f3d9a)"></i>
<i style="background:linear-gradient(#a0acc0,#c2a191,#c68f79,#c37960,#c06d56,#bb624d,#b65744,#b45241,#b24f3f,#b14b3c,#af473a,#ad4437,#ad4538,#af473a,#b04a3b,#b34f3f,#b65745,#ba5f4b,#bf6c55,#c37860,#c5836b,#c6917a,#c49d8b,#bea79b,#b6ada9,#adb0b5,#a2adbf,#95a7c6,#899fcb,#7b95cc,#6e8aca,#607cc6,#536ebf,#4b65b9,#435bb2,#3c50aa,#3545a1,#313f9c,#384ba6,#4157af,#4861b6,#4d66ba,#384ba5,#2f3d9a)"></i>
<i style="background:linear-gradient(#9facc1,#c1a495,#c6927c,#c37c63,#c17159,#bd654f,#b75946,#b55543,#b35140,#b24d3e,#af493b,#ad4538,#ae473a,#b0493b,#b14c3d,#b35140,#b75946,#bb614c,#c06d56,#c37961,#c5846b,#c6917b,#c49d8b,#bea79a,#b7ada8,#aeb0b4,#a3aebe,#97a8c5,#8ba1ca,#7e97cc,#708ccb,#637fc7,#5671c0,#4d67ba,#455db3,#3d53ac,#3648a3,#2f3d9a,#3648a3,#3e54ad,#465db4,#4a63b8,#384aa5,#2f3d9a)"></i>
<i style="background:linear-gradient(#9facc1,#bfa698,#c6957f,#c47e65,#c1735b,#be6851,#b85b47,#b65745,#b45342,#b24f3f,#b04b3c,#ae4739,#af493b,#b14b3d,#b24e3e,#b45342,#b85b47,#bb634d,#c06f57,#c37a62,#c6856c,#c6917b,#c49d8b,#bea69a,#b7ada7,#aeb0b3,#a4aebd,#99a9c4,#8da2ca,#8099cc,#738ecb,#6581c8,#5873c2,#4f69bc,#475fb5,#3f55ad,#384aa5,#313f9c,#3545a1,#3c51aa,#435ab2,#4760b5,#3749a4,#2f3d9a)"></i>
<i style="background:linear-gradient(#9eacc1,#bda89c,#c59782,#c58168,#c2765e,#be6a53,#b95d49,#b75946,#b55543,#b35140,#b14c3d,#af493b,#b14b3d,#b24e3e,#b35040,#b65644,#b95e49,#bd664f,#c17259,#c37c64,#c6866e,#c6927c,#c49d8b,#bea79a,#b8aca6,#afb0b3,#a6aebc,#9baac3,#90a4c9,#839ccc,#7691cc,#6985c9,#5c78c4,#526cbd,#4962b7,#4158b0,#3a4da8,#33439f,#33429e,#3a4da7,#4157af,#445cb3,#3648a3,#2f3d9a)"></i>
<i style="background:linear-gradient(#9eabc2,#bbaaa0,#c59a86,#c5846b,#c37960,#bf6c55,#ba5f4a,#b85b47,#b65744,#b45241,#b24e3f,#b14b3d,#b24e3e,#b35040,#b45241,#b75946,#ba604b,#be6952,#c1745c,#c47e65,#c6886f,#c6937d,#c39e8c,#bea79a,#b8aca6,#b0b1b2,#a7aebb,#9dabc2,#92a6c8,#879ecb,#7a94cc,#6d89ca,#607cc6,#546fbf,#4c65b9,#445bb2,#3c51aa,#3546a1,#31409c,#3749a4,#3e54ac,#4259b0,#3647a3,#2f3d9a)"></i>
<i style="background:linear-gradient(#9dabc2,#b9aca4,#c49c8a,#c6866e,#c37b62,#c06f57,#bb614c,#b95d49,#b75946,#b55443,#b35040,#b24e3e,#b35040,#b45241,#b55543,#b85b48,#bc634d,#bf6c54,#c2765e,#c48067,#c68971,#c6947e,#c39e8d,#bea79a,#b8aca5,#b1b1b1,#a8afba,#9facc1,#94a7c7,#8aa0cb,#7d97cc,#718dcb,#6480c7,#5773c1,#4f69bc,#465eb5,#3e54ad,#3749a4,#303e9b,#3546a2,#3b50a9,#3f55ad,#3546a2,#2f3d9a)"></i>
<i style="background:linear-gradient(#9dabc2,#b7ada8,#c39f8d,#c68971,#c47d65,#c17159,#bb634d,#ba5f4a,#b85a47,#b65644,#b45241,#b35040,#b45241,#b55443,#b65744,#b95e4a,#bd664f,#c06e57,#c37860,#c58169,#c68a72,#c69580,#c39f8d,#bea79a,#b8aca5,#b1b1b0,#a9afb9,#a0acc0,#97a8c6,#8da2ca,#809acc,#748fcb,#6884c9,#5b77c3,#526cbd,#4962b7,#4157af,#394ca7,#32419d,#33439f,#394ca6,#3c51ab,#3546a1,#2f3d9a)"></i>
<i style="background:linear-gradient(#9cabc3,#b4afac,#c2a191,#c68b74,#c48067,#c1735b,#bc654e,#ba604b,#b85c48,#b65845,#b45342,#b45241,#b55443,#b65744,#b75946,#bb614c,#be6852,#c17159,#c37a62,#c5836a,#c68c74,#c59681,#c39f8e,#bea79a,#b9aca5,#b2b0af,#aaafb8,#a2adbf,#99a9c5,#8fa4c9,#849ccc,#7792cc,#6b87ca,#5f7bc6,#546fbf,#4c65b9,#435bb2,#3b50a9,#3444a0,#32419d,#3648a3,#3a4ea8,#3444a0,#2f3d9a)"></i>
<i style="background:linear-gradient(#9cabc3,#b1b1b0,#c1a394,#c68e77,#c58269,#c2755d,#bd6650,#bb624d,#b95e4a,#b75946,#b55543,#b55443,#b65744,#b75946,#b85c48,#bc634e,#bf6b54,#c1735b,#c37c63,#c6856c,#c68d76,#c59782,#c3a08e,#bea79a,#b9aca4,#b2b0af,#abafb7,#a3aebe,#9aaac4,#92a5c8,#879ecb,#7b95cc,#6f8bcb,#637fc7,#5772c1,#4f68bb,#465eb4,#3e53ac,#3648a3,#31409c,#3445a0,#384aa5,#33439f,#2f3d9a)"></i>
<i style="background:linear-gradient(#9baac3,#afb0b3,#bfa597,#c6907a,#c6856c,#c2775f,#be6852,#bc644e,#ba604b,#b85b47,#b65644,#b65744,#b75946,#b85b48,#b95e4a,#bd6650,#c06d56,#c2765d,#c47e65,#c6866d,#c68e77,#c59883,#c2a08f,#bea79a,#b9aca4,#b3b0ae,#acb0b6,#a4aebd,#9cabc3,#94a7c7,#8aa0cb,#7e98cc,#728ecb,#6682c8,#5b76c3,#526cbd,#4961b7,#4056ae,#384ba6,#313f9c,#32429e,#3547a2,#33429e,#2f3d9a)"></i>
<i style="background:linear-gradient(#9baac3,#acb0b6,#bea79b,#c6937c,#c6876e,#c37961,#be6a53,#bd664f,#bb614c,#b95d49,#b75845,#b75946,#b85b48,#b95d49,#bb614c,#be6952,#c07058,#c2785f,#c48067,#c6876f,#c68f78,#c59884,#c2a08f,#bea79a,#b9aba4,#b3afad,#adb0b6,#a6aebc,#9eabc2,#96a8c6,#8da2ca,#819acc,#7691cc,#6a86c9,#5e7ac5,#546fbf,#4c65b9,#435ab1,#3b4ea8,#33439f,#31409c,#33439f,#32419d,#2f3d9a)"></i>
<i style="background:linear-gradient(#9aaac4,#a9afb9,#bda99e,#c6957f,#c68971,#c37b63,#bf6c55,#bd6851,#bc634d,#b95e4a,#b75a46,#b85b47,#b95d49,#ba5f4b,#bc644e,#bf6b54,#c1725a,#c37a61,#c58169,#c68870,#c6907a,#c59985,#c2a190,#bea79a,#b9aba4,#b3afad,#adb0b5,#a7aebb,#9facc1,#98a9c5,#8fa4c9,#849ccc,#7993cc,#6d89ca,#627ec7,#5772c1,#4f68bb,#455db4,#3d52ab,#3546a1,#313f9b,#31409c,#303f9b,#2f3d9a)"></i>
<i style="background:linear-gradient(#9aaac4,#a6aebc,#bbaaa1,#c59782,#c68b73,#c47d64,#c06e56,#be6952,#bc654e,#ba604b,#b85b47,#b95d49,#ba5f4b,#bb624c,#bd6650,#c06e56,#c2755c,#c37c63,#c5836a,#c68a72,#c6917b,#c59a86,#c2a190,#bea79a,#b9aba3,#b4afac,#aeb0b4,#a8afba,#a1adc0,#99a9c4,#92a6c8,#879ecb,#7c96cc,#718dcb,#6682c8,#5a76c3,#516bbd,#4861b6,#3f55ae,#3749a4,#313f9c,#2f3d9a,#2f3d9a,#2f3d9a)"></i>
<i style="background:linear-gradient(#99a9c4,#a5aebc,#baaba2,#c59884,#c68c75,#c47f66,#c06f58,#bf6a53,#bd6650,#bb614c,#b95d49,#ba5f4a,#ba614b,#bb634d,#bd6851,#c06f57,#c2755d,#c47d64,#c5846b,#c68b73,#c6927c,#c59a86,#c2a191,#bea79b,#b9aba4,#b4afad,#aeb0b4,#a8afbb,#a1adc0,#99aac4,#92a6c8,#889fcb,#7d97cc,#728ecb,#6783c8,#5c77c4,#536dbe,#4a63b7,#4157af,#394ca6,#32419d,#303e9b,#2f3d9a,#2f3d9a)"></i>
<i style="background:linear-gradient(#98a9c5,#a5aebd,#b9aba4,#c59a86,#c68d76,#c48067,#c17159,#bf6c54,#bd6751,#bb624d,#b95e4a,#ba604b,#bb624c,#bc634e,#be6952,#c07058,#c2765e,#c47e65,#c6856c,#c68b74,#c6937d,#c59b87,#c2a291,#bea79b,#b9aca4,#b3afad,#aeb0b4,#a8afbb,#a1adc0,#9aaac4,#92a6c8,#889fcb,#7d97cc,#738ecb,#6884c9,#5d79c5,#546fbf,#4b64b9,#4259b1,#3a4ea8,#33439f,#313f9c,#303d9a,#2f3d9a)"></i>
<i style="background:linear-gradient(#97a8c5,#a4aebe,#b9aca5,#c49b88,#c68e77,#c58168,#c1735b,#bf6d56,#be6852,#bc644e,#ba604b,#bb614c,#bb634d,#bc644e,#be6a53,#c17159,#c2775f,#c47e66,#c6856d,#c68c75,#c6947e,#c49b88,#c1a292,#bea89c,#b9aca5,#b3afad,#aeb0b4,#a8afbb,#a1adc0,#9aaac4,#92a6c8,#899fcb,#7e98cc,#748fcb,#6985c9,#5f7bc5,#5671c0,#4d66ba,#445bb2,#3b50a9,#3445a1,#32409d,#303e9a,#2f3d9a)"></i>
<i style="background:linear-gradient(#97a8c6,#a3aebe,#b8aca6,#c49c8a,#c68f78,#c5836a,#c2755c,#c06e57,#be6a53,#bd654f,#bb614c,#bb634d,#bc644e,#bd654f,#bf6b54,#c1725a,#c37860,#c47f66,#c6866e,#c68d76,#c6947e,#c49c89,#c1a293,#bda89c,#b8aca5,#b3afad,#adb0b5,#a7afbb,#a1adc0,#9aaac4,#92a6c8,#899fcb,#7f98cc,#7590cc,#6b87c9,#607cc6,#5772c1,#4f68bb,#455db4,#3d52ab,#3647a2,#32429e,#303e9a,#2f3d9a)"></i>
<i style="background:linear-gradient(#96a8c6,#a3adbf,#b8ada7,#c49d8b,#c69079,#c5846b,#c2765e,#c07058,#bf6b54,#bd6650,#bb634d,#bc644e,#bc654f,#bd6650,#bf6c55,#c1735b,#c37961,#c48067,#c6876f,#c68e77,#c6957f,#c49c89,#c1a393,#bda89d,#b8aca5,#b3afae,#adb0b5,#a7afbb,#a1adc0,#9aaac4,#92a6c8,#89a0cb,#8099cc,#7691cc,#6c88ca,#627ec7,#5974c2,#506abc,#475fb5,#3e54ad,#3749a4,#33439f,#303e9b,#2f3d9a)"></i>
<i style="background:linear-gradient(#95a7c6,#a2adbf,#b7ada8,#c39f8d,#c6917a,#c6856c,#c2785f,#c17159,#bf6c55,#be6851,#bc644e,#bd654f,#bd6650,#bd6750,#bf6d55,#c1745b,#c37a62,#c58168,#c6886f,#c68f78,#c69680,#c49d8a,#c1a394,#bda89d,#b8aca6,#b3b0ae,#adb0b5,#a7afbb,#a1adc0,#9aaac4,#92a6c8,#8aa0cb,#8099cc,#7792cc,#6d89ca,#637fc7,#5a76c3,#526cbe,#4961b6,#4056ae,#384ba5,#3444a0,#303e9b,#2f3d9a)"></i>
<i style="background:linear-gradient(#94a7c7,#a1adc0,#b6ada9,#c2a08f,#c6927b,#c6866e,#c37a61,#c1725a,#c06d56,#be6952,#bd664f,#bd6650,#bd6750,#be6851,#c06e56,#c2755c,#c37b62,#c58269,#c68970,#c69079,#c59681,#c49d8b,#c1a394,#bda99d,#b8aca6,#b3b0ae,#adb0b5,#a7afbb,#a1adc0,#9aaac4,#93a6c7,#8aa0cb,#819acc,#7892cc,#6e8aca,#6581c8,#5c78c4,#536ebf,#4a63b8,#4158b0,#394da7,#3545a1,#303e9b,#2f3d9a)"></i>
<i style="background:linear-gradient(#93a7c7,#a0acc0,#b6aeaa,#c2a191,#c6937d,#c6886f,#c37b62,#c1735b,#c06f57,#be6a53,#bd6751,#be6851,#be6851,#be6852,#c06f57,#c2765d,#c37c63,#c58269,#c68971,#c6907a,#c59782,#c49e8b,#c1a495,#bda99e,#b7ada7,#b2b0ae,#adb0b5,#a7afbb,#a1adc0,#9aaac4,#93a6c7,#8aa0cb,#829bcc,#7993cc,#6f8bcb,#6682c8,#5e79c5,#5570c0,#4c65b9,#435ab1,#3b4ea8,#3546a2,#303f9b,#2f3d9a)"></i>
<i style="background:linear-gradient(#93a6c7,#9facc1,#b5aeab,#c1a292,#c6947e,#c68971,#c47d64,#c2745c,#c17058,#bf6b54,#be6952,#be6952,#be6952,#be6952,#c17058,#c2775e,#c47d64,#c5836a,#c68a72,#c6917b,#c59883,#c39e8c,#c0a495,#bca99e,#b7ada7,#b2b0af,#adb0b5,#a7afbb,#a1adc0,#9aaac4,#93a6c7,#8ba1ca,#829bcc,#7a94cc,#718dcb,#6884c9,#5f7bc6,#5671c1,#4e67ba,#445cb3,#3c50aa,#3648a3,#313f9b,#2f3d9a)"></i>
<i style="background:linear-gradient(#92a6c8,#9facc1,#b4afac,#c1a394,#c6957f,#c68a72,#c47e65,#c2765d,#c17159,#bf6c55,#be6a53,#be6a53,#be6a53,#be6a53,#c17159,#c2785f,#c47e65,#c5846b,#c68b73,#c6927c,#c59884,#c39e8d,#c0a496,#bca99f,#b7ada8,#b2b0af,#adb0b5,#a7aebb,#a1adc0,#9aaac4,#93a6c7,#8ba1ca,#839ccc,#7b95cc,#728ecb,#6985c9,#617dc6,#5873c2,#4f69bc,#465eb4,#3d52ab,#3749a4,#313f9c,#2f3d9a)"></i>
<i style="background:linear-gradient(#91a5c8,#9eacc1,#b3afad,#c0a496,#c59681,#c68c74,#c48067,#c2775e,#c1725a,#c06e56,#bf6b54,#bf6b54,#bf6b54,#bf6b54,#c1725a,#c37960,#c47f66,#c6856c,#c68b74,#c6937c,#c59985,#c39f8e,#c0a596,#bca99f,#b7ada8,#b2b0af,#adb0b5,#a7aebb,#a1adc0,#9aaac4,#93a6c7,#8ba1ca,#839ccc,#7b95cc,#738ecb,#6a86c9,#627ec7,#5975c2,#516bbd,#4860b6,#3f55ad,#394ca6,#32419d,#303f9b)"></i>
<i style="background:linear-gradient(#91a5c8,#9eabc2,#b3b0ae,#bfa597,#c59883,#c68d76,#c58168,#c37860,#c1745b,#c06f57,#bf6c55,#bf6c55,#bf6c55,#bf6c55,#c1735b,#c37a61,#c48067,#c6866d,#c68c75,#c6937d,#c59a86,#c3a08f,#bfa597,#bcaaa0,#b6ada8,#b2b0b0,#adb0b6,#a7aebb,#a1adc0,#9aaac4,#93a6c7,#8ca1ca,#849ccc,#7b96cc,#738fcb,#6b87ca,#637fc7,#5b76c3,#526dbe,#4a62b7,#4158b0,#3b4fa9,#33439f,#32409d)"></i>
<i style="background:linear-gradient(#90a4c8,#9dabc2,#b2b0af,#bfa699,#c59985,#c68e77,#c5826a,#c37961,#c2755c,#c07058,#c06d56,#c06d56,#c06d56,#c06d56,#c2745c,#c37a62,#c58168,#c6866e,#c68d76,#c6947e,#c59a87,#c2a08f,#bfa698,#bbaaa0,#b6ada9,#b1b0b0,#acb0b6,#a7aebb,#a1adc0,#9aaac4,#93a6c7,#8ca1ca,#849ccc,#7c96cc,#748fcb,#6c88ca,#6480c7,#5c78c4,#546fbf,#4c65b9,#435bb2,#3d52ab,#3545a1,#33429e)"></i>
<i style="background:linear-gradient(#90a4c9,#9dabc2,#b1b1b0,#bea79a,#c59a87,#c69079,#c5846b,#c37b62,#c2765d,#c17159,#c06e57,#c06e57,#c06e57,#c06e57,#c2755d,#c37b63,#c58169,#c6876f,#c68e76,#c6957f,#c49b88,#c2a190,#bfa699,#bbaaa1,#b6aea9,#b1b1b0,#acb0b6,#a7aebb,#a1adc0,#9aaac4,#93a6c7,#8ca1ca,#849ccc,#7c96cc,#7590cc,#6d89ca,#6581c8,#5e79c5,#5570c0,#4e67bb,#455db4,#3f55ad,#3647a3,#3444a0)"></i>
<i style="background:linear-gradient(#8fa4c9,#9cabc3,#b0b1b1,#bea89c,#c49c89,#c6917b,#c6856c,#c37c63,#c2775f,#c1725a,#c06f58,#c06f58,#c06f58,#c06f58,#c2765e,#c37c64,#c58269,#c68870,#c68e77,#c69580,#c49c89,#c2a191,#bfa699,#bbaaa1,#b6aea9,#b1b1b0,#acb0b6,#a6aebc,#a0acc0,#9aaac4,#93a6c7,#8ca1ca,#849dcc,#7d97cc,#7590cc,#6e8aca,#6783c8,#5f7bc5,#5772c1,#506abc,#4860b6,#4158b0,#3749a4,#3546a1)"></i>
<i style="background:linear-gradient(#8fa3c9,#9cabc3,#b0b1b2,#bda99d,#c49d8b,#c6927c,#c6866e,#c47d64,#c37860,#c1735b,#c17159,#c17159,#c17159,#c17159,#c2775f,#c47d64,#c5836a,#c68971,#c68f78,#c69681,#c49c8a,#c1a292,#bea79a,#baaba2,#b6aeaa,#b1b1b1,#acb0b6,#a6aebc,#a0acc0,#9aaac4,#93a6c7,#8ca1ca,#859dcc,#7d97cc,#7691cc,#6f8bcb,#6884c9,#607cc6,#5974c2,#526cbd,#4a63b8,#435bb2,#394ca6,#3648a3)"></i>
<i style="background:linear-gradient(#8ea3c9,#9baac3,#afb0b3,#bca99f,#c39e8d,#c6947e,#c6876f,#c47e66,#c37961,#c2745c,#c17259,#c17259,#c17259,#c17259,#c2785f,#c47e65,#c5846b,#c68a72,#c69079,#c59781,#c49d8b,#c1a393,#bea79b,#baaba2,#b5aeaa,#b1b1b1,#acb0b7,#a6aebc,#a0acc0,#9aaac4,#93a6c7,#8ca2ca,#859dcc,#7e97cc,#7792cc,#708ccb,#6985c9,#627ec7,#5b76c3,#536ebf,#4d66ba,#465eb4,#3a4ea8,#3749a4)"></i>
<i style="background:linear-gradient(#8ea3c9,#9baac3,#aeb0b4,#bbaaa1,#c39f8e,#c6957f,#c68971,#c48067,#c37b62,#c2755d,#c1735a,#c1735a,#c1735a,#c1735a,#c37960,#c47f66,#c6856c,#c68a73,#c6907a,#c59782,#c49d8b,#c1a394,#bea89c,#baaba3,#b5aeaa,#b0b1b1,#abafb7,#a6aebc,#a0acc0,#9aaac4,#93a6c7,#8ca2ca,#859dcb,#7e98cc,#7792cc,#718dcb,#6a86c9,#637fc7,#5c78c4,#5570c0,#4f69bb,#4861b6,#3b50a9,#384ba6)"></i>
<i style="background:linear-gradient(#8da2ca,#9aaac4,#adb0b5,#baaba2,#c2a190,#c59681,#c68a72,#c58168,#c37c63,#c2765e,#c1745b,#c1745b,#c1745b,#c1745b,#c37a61,#c48067,#c6866d,#c68b73,#c6917a,#c59883,#c39e8c,#c0a495,#bda89c,#b9aba3,#b5aeab,#b0b1b1,#abafb7,#a6aebc,#a0acc0,#9aaac4,#93a6c7,#8da2ca,#869dcb,#7e98cc,#7893cc,#728dcb,#6b87ca,#6581c8,#5e7ac5,#5773c1,#516bbd,#4b63b8,#3d52ab,#3a4da7)"></i>
<i style="background:linear-gradient(#8da2ca,#9aaac4,#adb0b5,#b9aba4,#c1a292,#c59883,#c68b74,#c58269,#c47d64,#c2775f,#c2755c,#c2755c,#c2755c,#c2755c,#c37b62,#c58168,#c6876e,#c68c74,#c6927b,#c59884,#c39f8d,#c0a496,#bda89d,#b9aba4,#b5aeab,#b0b1b2,#abafb7,#a6aebc,#a0acc0,#9aaac4,#93a6c7,#8da2ca,#869dcb,#7f98cc,#7993cc,#728ecb,#6c88ca,#6682c8,#607cc6,#5975c2,#536ebe,#4d66ba,#3e54ac,#3b4fa8)"></i>
<i style="background:linear-gradient(#8da2ca,#99a9c4,#acb0b6,#b9aca4,#c1a293,#c59884,#c68c75,#c5836a,#c47d65,#c27860,#c2755d,#c2755d,#c2755d,#c2755d,#c37b62,#c58168,#c6876e,#c68c75,#c6927b,#c59984,#c39f8d,#c0a496,#bda89d,#b9aba4,#b5aeab,#b0b1b1,#abafb7,#a6aebc,#a0acc0,#9aaac4,#94a7c7,#8ea2c9,#879ecb,#8099cc,#7a94cc,#748fcb,#6e8aca,#6884c9,#617dc6,#5b76c3,#546fbf,#4e68bb,#3f55ad,#3b50a9)"></i>
<i style="background:linear-gradient(#8ca2ca,#99a9c4,#acb0b6,#b9aca5,#c1a394,#c59984,#c68d76,#c5836b,#c47e65,#c37960,#c2765d,#c2765d,#c2765d,#c2765d,#c37c63,#c58169,#c6876f,#c68c75,#c6927c,#c59984,#c39f8d,#c0a496,#bda89d,#b9aba4,#b5aeaa,#b1b1b1,#acb0b6,#a6aebb,#a1adc0,#9baac3,#95a7c7,#8ea3c9,#889fcb,#819acc,#7b95cc,#7590cc,#6f8bcb,#6985c9,#637fc7,#5c78c4,#5671c0,#5069bc,#4056ae,#3c51aa)"></i>
<i style="background:linear-gradient(#8ca1ca,#99a9c4,#abafb7,#b8aca5,#c1a394,#c59985,#c68e77,#c5846b,#c47f66,#c37a61,#c2765e,#c2765e,#c2765e,#c2765e,#c37c63,#c58269,#c6876f,#c68c75,#c6927c,#c59984,#c39f8d,#c0a495,#bda89d,#b9aba3,#b5aeaa,#b1b1b1,#acb0b6,#a7aebb,#a1adc0,#9baac3,#95a7c6,#8fa3c9,#899fcb,#829bcc,#7c96cc,#7691cc,#708ccb,#6a86c9,#6480c8,#5e7ac5,#5772c1,#516bbd,#4157af,#3c51ab)"></i>
<i style="background:linear-gradient(#8ca1ca,#99a9c5,#abafb7,#b8aca6,#c0a495,#c59a86,#c68e77,#c6856c,#c48067,#c37a62,#c2775e,#c2775e,#c2775e,#c2775e,#c37c63,#c58269,#c6876f,#c68d75,#c6927c,#c59984,#c39f8d,#c0a495,#bda89d,#baaba3,#b6aeaa,#b1b1b0,#acb0b6,#a7afbb,#a2adbf,#9cabc3,#96a8c6,#90a4c9,#8aa0cb,#839bcc,#7d96cc,#7792cc,#718dcb,#6c88ca,#6682c8,#607cc6,#5974c2,#526dbe,#4158b0,#3d52ab)"></i>
<i style="background:linear-gradient(#8ca1ca,#98a9c5,#abafb8,#b8ada7,#c0a496,#c59a87,#c68f78,#c6856d,#c48068,#c37b62,#c2775f,#c2775f,#c2775f,#c2775f,#c37c64,#c58269,#c6886f,#c68d75,#c6927c,#c59985,#c39f8d,#c0a495,#bda89d,#baaba3,#b6aea9,#b1b0b0,#adb0b5,#a8afba,#a2adbf,#9cabc3,#96a8c6,#90a4c8,#8aa0cb,#849ccc,#7d97cc,#7893cc,#728ecb,#6d89ca,#6783c9,#617dc6,#5a76c3,#536ebf,#4259b1,#3e53ac)"></i>
<i style="background:linear-gradient(#8ba1ca,#98a9c5,#aaafb8,#b7ada7,#c0a596,#c49b88,#c69079,#c6866e,#c58168,#c37c63,#c2785f,#c2785f,#c2785f,#c2785f,#c47d64,#c5826a,#c6886f,#c68d76,#c6927c,#c59985,#c39f8d,#c0a495,#bda89d,#baaba3,#b6aea9,#b2b0b0,#adb0b5,#a8afba,#a3adbf,#9dabc2,#97a8c5,#91a5c8,#8ba1ca,#859dcc,#7e98cc,#7993cc,#748fcb,#6e8aca,#6985c9,#637fc7,#5c77c4,#5570c0,#435ab2,#3e54ad)"></i>
<i style="background:linear-gradient(#8ba1ca,#98a9c5,#aaafb9,#b7ada8,#bfa597,#c49c89,#c6917a,#c6876e,#c58269,#c47d64,#c2785f,#c2785f,#c2785f,#c2785f,#c47d64,#c5836a,#c68870,#c68d76,#c6927c,#c59985,#c39f8d,#c0a495,#bda89c,#baaba3,#b6aea9,#b2b0af,#adb0b5,#a8afba,#a3aebe,#9dabc2,#97a9c5,#92a5c8,#8ca1ca,#869dcb,#7f99cc,#7a94cc,#7590cc,#6f8bcb,#6a86c9,#6480c7,#5d79c5,#5671c1,#445cb2,#3f55ad)"></i>
<i style="background:linear-gradient(#8ba0ca,#98a9c5,#a9afb9,#b6ada8,#bfa598,#c49c89,#c6917b,#c6886f,#c5836a,#c47d65,#c37960,#c37960,#c37960,#c37960,#c47d64,#c5836a,#c68870,#c68d76,#c6937c,#c59985,#c39f8d,#c0a495,#bda89c,#baaba3,#b6ada9,#b2b0af,#aeb0b4,#a9afb9,#a4aebe,#9eabc2,#98a9c5,#92a6c8,#8da2ca,#869ecb,#8099cc,#7b95cc,#7691cc,#718dcb,#6b87ca,#6682c8,#5f7bc5,#5773c1,#455db3,#4056ae)"></i>
<i style="background:linear-gradient(#8aa0cb,#97a8c5,#a9afb9,#b6aea9,#bfa699,#c49d8a,#c6927c,#c68870,#c5836b,#c47e65,#c37960,#c37960,#c37960,#c37960,#c47e65,#c5836a,#c68870,#c68d76,#c6937c,#c59985,#c39f8d,#c0a495,#bda89c,#baaba2,#b6ada8,#b2b0af,#aeb0b4,#a9afb9,#a4aebe,#9eacc1,#99a9c5,#93a6c7,#8da2ca,#879ecb,#819acc,#7c96cc,#7792cc,#728ecb,#6d89ca,#6884c9,#607cc6,#5974c2,#465eb4,#4057af)"></i>
<i style="background:linear-gradient(#8aa0cb,#97a8c5,#a9afba,#b6aea9,#bfa699,#c49d8b,#c6937d,#c68971,#c5846b,#c47f66,#c37a61,#c37a61,#c37a61,#c37a61,#c47e65,#c5836b,#c68970,#c68e76,#c6937d,#c59985,#c39f8d,#c0a495,#bda89c,#baaba2,#b6ada8,#b2b0ae,#aeb0b4,#a9afb9,#a4aebd,#9facc1,#99a9c4,#93a7c7,#8ea3c9,#889fcb,#829bcc,#7c96cc,#7892cc,#738ecb,#6e8aca,#6985c9,#627ec7,#5a76c3,#475fb5,#4157af)"></i>
<i style="background:linear-gradient(#8aa0cb,#97a8c5,#a8afba,#b5aeaa,#bea79a,#c49e8c,#c6947e,#c68a72,#c6856c,#c48067,#c37a62,#c37a61,#c37a61,#c37a61,#c47e65,#c5846b,#c68971,#c68e77,#c6937d,#c59985,#c39f8d,#c0a495,#bda89c,#baaba2,#b7ada8,#b3b0ae,#aeb0b3,#aaafb8,#a5aebd,#9facc1,#9aaac4,#94a7c7,#8fa3c9,#899fcb,#839bcc,#7d97cc,#7993cc,#748fcb,#6f8bcb,#6a86c9,#6480c7,#5c77c4,#4861b6,#4158b0)"></i>
<i style="background:linear-gradient(#8aa0cb,#97a8c6,#a8afba,#b5aeab,#bea79b,#c39e8c,#c6947e,#c68a72,#c6856d,#c48068,#c37b62,#c37b62,#c37b62,#c37b62,#c47e66,#c5846b,#c68971,#c68e77,#c6937d,#c59985,#c39f8d,#c0a495,#bda89c,#baaba2,#b7ada8,#b3afae,#afb0b3,#aaafb8,#a5aebd,#a0acc1,#9aaac4,#95a7c6,#8fa4c9,#8aa0cb,#849ccc,#7e98cc,#7994cc,#7590cc,#708ccb,#6c88ca,#6581c8,#5d79c5,#4962b7,#4259b0)"></i>
<i style="background:linear-gradient(#89a0cb,#96a8c6,#a7afbb,#b5aeab,#bea79b,#c39f8d,#c6957f,#c68b73,#c6866e,#c58168,#c37c63,#c37b62,#c37b62,#c37b62,#c47f66,#c5846b,#c68971,#c68e77,#c6937d,#c59985,#c39f8d,#c0a495,#bda89c,#baaba2,#b7ada8,#b3afad,#afb0b3,#abafb8,#a5aebc,#a0acc0,#9baac4,#95a7c6,#90a4c9,#8aa0cb,#849dcc,#7f98cc,#7a95cc,#7691cc,#718dcb,#6d89ca,#6783c8,#5f7bc5,#4b64b8,#435ab1)"></i>
<i style="background:linear-gradient(#899fcb,#96a8c6,#a7aebb,#b4afac,#bea89c,#c39f8e,#c69680,#c68c74,#c6876e,#c58269,#c47d64,#c37c63,#c37c63,#c37c63,#c47f66,#c5846c,#c68971,#c68e77,#c6937d,#c59985,#c39f8d,#c0a495,#bda89c,#baaba2,#b7ada7,#b3afad,#afb0b3,#abafb8,#a6aebc,#a1adc0,#9baac3,#96a8c6,#90a4c8,#8ba1ca,#859dcb,#7f99cc,#7b95cc,#7792cc,#738ecb,#6e8acb,#6985c9,#607cc6,#4c65b9,#435bb2)"></i>
<i style="background:linear-gradient(#899fcb,#96a8c6,#a7aebb,#b4afac,#bda89d,#c3a08f,#c59681,#c68c75,#c6876f,#c5836a,#c47d64,#c37c63,#c37c63,#c37c63,#c47f66,#c6856c,#c68a72,#c68e77,#c6937d,#c59985,#c39f8d,#c0a495,#bda89c,#baaba2,#b7ada7,#b3afad,#b0b0b2,#abafb7,#a6aebc,#a1adc0,#9cabc3,#96a8c6,#91a5c8,#8ca1ca,#869ecb,#8099cc,#7c96cc,#7892cc,#748fcb,#708ccb,#6a86c9,#627ec7,#4d67ba,#445cb2)"></i>
<i style="background:linear-gradient(#889fcb,#96a8c6,#a6aebc,#b4afad,#bda99d,#c2a08f,#c59782,#c68d76,#c68870,#c5836a,#c47e65,#c47c64,#c47c64,#c47c64,#c48067,#c6856c,#c68a72,#c68e77,#c6937d,#c59985,#c39f8d,#c0a495,#bda89c,#baaaa2,#b7ada7,#b4afad,#b0b1b2,#abafb7,#a7aebb,#a1adbf,#9cabc3,#97a8c5,#92a5c8,#8ca2ca,#879ecb,#819acc,#7d96cc,#7993cc,#7590cc,#718dcb,#6c88ca,#637fc7,#4f68bb,#455cb3)"></i>
<i style="background:linear-gradient(#889fcb,#95a7c6,#a6aebc,#b3afad,#bda99e,#c2a190,#c59883,#c68e76,#c68971,#c5846b,#c47f66,#c47d64,#c47d64,#c47d64,#c48067,#c6856c,#c68a72,#c68f78,#c6947e,#c59986,#c39f8d,#c0a495,#bda89c,#bbaaa2,#b7ada7,#b4afac,#b0b1b2,#acb0b7,#a7aebb,#a2adbf,#9cabc2,#97a8c5,#92a6c8,#8da2ca,#889ecb,#829bcc,#7d97cc,#7994cc,#7691cc,#728ecb,#6e8aca,#6581c8,#506abc,#455db4)"></i>
<i style="background:linear-gradient(#889fcb,#95a7c6,#a6aebc,#b3afae,#bca99e,#c2a191,#c59884,#c68e77,#c68a72,#c6856c,#c47f67,#c47d65,#c47d65,#c47d65,#c48067,#c6856d,#c68a72,#c68f78,#c6947e,#c59a86,#c39f8e,#c0a495,#bda89c,#bbaaa1,#b7ada7,#b4afac,#b0b1b1,#acb0b6,#a7afbb,#a2adbf,#9dabc2,#98a9c5,#93a6c7,#8ea2c9,#889fcb,#839bcc,#7e97cc,#7a94cc,#7792cc,#738fcb,#6f8bcb,#6783c8,#526cbd,#465eb4)"></i>
<i style="background:linear-gradient(#889fcb,#95a7c6,#a5aebd,#b3b0ae,#bca99f,#c2a191,#c59985,#c68f78,#c68a72,#c6856d,#c48067,#c47e65,#c47e65,#c47e65,#c58168,#c6866d,#c68a73,#c68f78,#c6947e,#c59a86,#c39f8e,#c0a495,#bda89c,#bbaaa1,#b8ada7,#b4afac,#b1b1b1,#acb0b6,#a8afba,#a3adbf,#9dabc2,#98a9c5,#93a6c7,#8ea3c9,#899fcb,#849ccc,#7e98cc,#7b95cc,#7792cc,#748fcb,#718dcb,#6884c9,#536ebe,#475fb5)"></i>
<i style="background:linear-gradient(#879ecb,#94a7c7,#a5aebd,#b2b0af,#bcaaa0,#c1a292,#c59985,#c69079,#c68b73,#c6866d,#c58168,#c47e65,#c47e65,#c47e65,#c58168,#c6866d,#c68b73,#c68f78,#c6947e,#c59a86,#c39f8e,#c0a495,#bda89c,#bbaaa1,#b8aca6,#b4afac,#b1b1b1,#adb0b6,#a8afba,#a3aebe,#9eabc2,#99a9c4,#94a7c7,#8fa3c9,#8aa0cb,#849ccc,#7f98cc,#7c96cc,#7893cc,#7590cc,#728ecb,#6a86c9,#5570c0,#4760b5)"></i>
<i style="background:linear-gradient(#879ecb,#94a7c7,#a5aebd,#b2b0af,#bbaaa0,#c1a293,#c59a86,#c6907a,#c68b74,#c6866e,#c58169,#c47f66,#c47f66,#c47f66,#c58168,#c6866d,#c68b73,#c68f78,#c6947e,#c59986,#c39f8d,#c1a495,#bea89c,#bbaaa1,#b8aca6,#b4afab,#b1b1b1,#adb0b5,#a8afba,#a4aebe,#9eacc1,#99a9c4,#94a7c7,#8fa4c9,#8aa0cb,#859dcc,#8099cc,#7c96cc,#7993cc,#7691cc,#728ecb,#6b87ca,#5570c0,#4860b6)"></i>
<i style="background:linear-gradient(#879ecb,#94a7c7,#a5aebd,#b2b0af,#bbaaa1,#c1a393,#c59b87,#c6917a,#c68c75,#c6876e,#c58269,#c47f66,#c47f66,#c47f66,#c58168,#c6866d,#c68a73,#c68f78,#c6947e,#c59985,#c39f8d,#c1a394,#bea79b,#bbaaa1,#b8aca6,#b5aeab,#b1b1b0,#adb0b5,#a9afba,#a4aebe,#9facc1,#9aaac4,#95a7c6,#90a4c8,#8ba1ca,#869dcb,#809acc,#7d97cc,#7994cc,#7691cc,#738ecb,#6b87ca,#5570c0,#4961b7)"></i>
<i style="background:linear-gradient(#879ecb,#94a7c7,#a4aebd,#b1b0b0,#bbaaa1,#c1a394,#c49b88,#c6927b,#c68d75,#c6876f,#c5826a,#c48067,#c47f66,#c47f66,#c58169,#c6866d,#c68a73,#c68f78,#c6947e,#c59985,#c39e8d,#c1a394,#bea79b,#bbaaa0,#b8aca6,#b5aeab,#b1b0b0,#adb0b5,#a9afb9,#a4aebd,#9facc1,#9aaac4,#96a8c6,#91a5c8,#8ca1ca,#869ecb,#819acc,#7e97cc,#7a94cc,#7792cc,#738fcb,#6c88ca,#5671c0,#4962b7)"></i>
<i style="background:linear-gradient(#879ecb,#94a7c7,#a4aebe,#b1b1b0,#baaba2,#c0a495,#c49c89,#c6927c,#c68d76,#c6886f,#c5836a,#c48067,#c47f67,#c47f67,#c58269,#c6866d,#c68a73,#c68f78,#c6937d,#c59985,#c39e8c,#c1a394,#bea79b,#bbaaa0,#b8aca5,#b5aeaa,#b2b0b0,#adb0b5,#a9afb9,#a5aebd,#a0acc0,#9baac3,#96a8c6,#91a5c8,#8ca2ca,#879ecb,#829bcc,#7e98cc,#7b95cc,#7792cc,#748fcb,#6d89ca,#5671c1,#4a63b8)"></i>
<i style="background:linear-gradient(#879ecb,#94a7c7,#a4aebe,#b1b1b1,#baaba2,#c0a496,#c49c8a,#c6937d,#c68e77,#c68870,#c5836b,#c58068,#c48067,#c48067,#c58269,#c6866d,#c68a73,#c68f78,#c6937d,#c59984,#c39e8c,#c1a393,#bea79a,#bbaaa0,#b8aca5,#b5aeaa,#b2b0af,#aeb0b4,#aaafb9,#a5aebd,#a0acc0,#9baac3,#97a8c5,#92a6c8,#8da2ca,#889fcb,#839bcc,#7f98cc,#7b95cc,#7893cc,#7490cc,#6e8aca,#5672c1,#4b64b8)"></i>
<i style="background:linear-gradient(#879ecb,#94a7c7,#a4aebe,#b0b1b1,#baaba3,#c0a496,#c49d8a,#c6947e,#c68e77,#c68970,#c5846b,#c58168,#c48067,#c48067,#c58269,#c6866d,#c68a72,#c68f78,#c6937d,#c59884,#c49e8c,#c1a393,#bea79a,#bcaaa0,#b9aca5,#b5aeaa,#b2b0af,#aeb0b4,#aaafb8,#a6aebc,#a1adc0,#9cabc3,#97a8c5,#93a6c7,#8ea3c9,#899fcb,#839ccc,#8099cc,#7c96cc,#7893cc,#7590cc,#6e8acb,#5772c1,#4b64b9)"></i>
<i style="background:linear-gradient(#879ecb,#94a7c7,#a4aebe,#b0b1b1,#b9aba4,#c0a597,#c49d8b,#c6957f,#c68f78,#c68971,#c6846c,#c58169,#c48067,#c48067,#c58269,#c6866d,#c68a72,#c68f78,#c6937d,#c59884,#c49d8b,#c1a293,#bea69a,#bcaa9f,#b9aca4,#b6aeaa,#b2b0af,#aeb0b4,#aaafb8,#a6aebc,#a1adc0,#9dabc2,#98a9c5,#93a6c7,#8ea3c9,#89a0cb,#849ccc,#8099cc,#7c96cc,#7993cc,#7591cc,#6f8bcb,#5772c1,#4c65b9)"></i>
<i style="background:linear-gradient(#879ecb,#94a7c7,#a3aebe,#b0b1b2,#b9aca4,#bfa598,#c39e8c,#c69580,#c68f79,#c68971,#c6856c,#c58269,#c58168,#c58168,#c58269,#c6866d,#c68a72,#c68f78,#c6937d,#c59883,#c49d8b,#c1a292,#bfa699,#bca99f,#b9aca4,#b6aea9,#b2b0ae,#aeb0b3,#abafb8,#a6aebc,#a2adbf,#9dabc2,#99a9c5,#94a7c7,#8fa4c9,#8aa0cb,#859dcc,#819acc,#7d97cc,#7994cc,#7691cc,#708ccb,#5773c1,#4d66ba)"></i>
<i style="background:linear-gradient(#879ecb,#94a7c7,#a3aebe,#b0b0b2,#b9aca5,#bfa698,#c39e8d,#c69681,#c69079,#c68a72,#c6856d,#c58269,#c58168,#c58168,#c5826a,#c6866d,#c68a72,#c68e77,#c6937d,#c59883,#c49d8b,#c1a292,#bfa699,#bca99f,#b9aba4,#b6aea9,#b3b0ae,#afb0b3,#abafb7,#a7aebb,#a2adbf,#9eabc2,#99a9c4,#95a7c7,#90a4c9,#8ba1ca,#869dcb,#829bcc,#7d97cc,#7a94cc,#7791cc,#708ccb,#5873c2,#4d67ba)"></i>
<i style="background:linear-gradient(#879ecb,#94a7c7,#a3aebe,#afb0b3,#b8aca5,#bfa699,#c39f8e,#c59781,#c6907a,#c68a72,#c6866d,#c5836a,#c58168,#c58168,#c5836a,#c6866d,#c68a72,#c68e77,#c6937d,#c59883,#c49d8b,#c2a292,#bfa699,#bca99e,#b9aba4,#b6ada9,#b3b0ae,#afb0b3,#abafb7,#a7aebb,#a3adbf,#9eacc1,#9aaac4,#95a7c6,#90a4c8,#8ca1ca,#869ecb,#829bcc,#7e98cc,#7b95cc,#7792cc,#718dcb,#5873c2,#4e68bb)"></i>
<i style="background:linear-gradient(#879ecb,#94a7c7,#a3adbf,#afb0b3,#b8aca6,#bea79a,#c39f8e,#c59782,#c6917a,#c68b73,#c6866e,#c5836a,#c58169,#c58169,#c5836a,#c6866d,#c68a72,#c68e77,#c6937c,#c59783,#c49d8a,#c2a191,#bfa698,#bca99e,#b9aba3,#b6ada8,#b3afae,#afb0b3,#abafb7,#a7afbb,#a3aebe,#9facc1,#9aaac4,#96a8c6,#91a5c8,#8ca2ca,#879ecb,#839bcc,#7f98cc,#7b95cc,#7892cc,#728ecb,#5874c2,#4f68bb)"></i>
<i style="background:linear-gradient(#879ecb,#94a7c7,#a3adbf,#afb0b3,#b8aca6,#bea79a,#c2a08f,#c59883,#c6917b,#c68b73,#c6876e,#c5846b,#c58269,#c58269,#c5836a,#c6866d,#c68a72,#c68e77,#c6927c,#c59782,#c49c8a,#c2a191,#bfa598,#bda99e,#baaba3,#b7ada8,#b3afad,#afb0b2,#acb0b6,#a8afba,#a4aebe,#9facc1,#9baac3,#96a8c6,#92a5c8,#8da2ca,#889fcb,#849ccc,#7f99cc,#7c96cc,#7893cc,#738ecb,#5974c2,#4f69bc)"></i>
<i style="background:linear-gradient(#879ecb,#94a7c7,#a2adbf,#aeb0b4,#b7ada7,#bea79b,#c2a090,#c59984,#c6927c,#c68b74,#c6876f,#c5846b,#c58269,#c58269,#c5836a,#c6866d,#c68a72,#c68e77,#c6927c,#c59782,#c49c8a,#c2a191,#bfa597,#bda99e,#baaba3,#b7ada8,#b3afad,#b0b1b2,#acb0b6,#a8afba,#a4aebd,#a0acc0,#9cabc3,#97a8c5,#92a6c8,#8ea2c9,#899fcb,#849ccc,#8099cc,#7c96cc,#7993cc,#738fcb,#5975c2,#506abc)"></i>
<i style="background:linear-gradient(#879ecb,#94a7c7,#a2adbf,#aeb0b4,#b7ada7,#bea89c,#c2a191,#c59985,#c6937c,#c68c74,#c6886f,#c5846c,#c5826a,#c5826a,#c5836a,#c6866d,#c68a72,#c68e77,#c6927c,#c59782,#c49c89,#c2a190,#c0a597,#bda99d,#baaba2,#b7ada8,#b4afad,#b0b1b2,#acb0b6,#a9afba,#a5aebd,#a0adc0,#9cabc3,#98a9c5,#93a6c7,#8ea3c9,#89a0cb,#859dcc,#809acc,#7d97cc,#7994cc,#748fcb,#5975c2,#506abd)"></i>
<i style="background:linear-gradient(#879ecb,#94a7c7,#a2adbf,#aeb0b4,#b7ada8,#bda89c,#c2a191,#c59a86,#c6937d,#c68c75,#c68870,#c6856c,#c5836a,#c5836a,#c5836b,#c6866d,#c68a72,#c68e77,#c6927c,#c59781,#c49c89,#c2a090,#c0a597,#bda89d,#baaba2,#b7ada7,#b4afac,#b0b1b2,#adb0b5,#a9afb9,#a5aebd,#a1adc0,#9dabc2,#98a9c5,#94a7c7,#8fa3c9,#8aa0cb,#869dcb,#819acc,#7d97cc,#7a94cc,#7590cc,#5a75c3,#516bbd)"></i>
<i style="background:linear-gradient(#879ecb,#94a7c7,#a2adbf,#adb0b5,#b6ada9,#bda99d,#c1a292,#c59b87,#c6947e,#c68d75,#c68971,#c6856c,#c5836a,#c5836a,#c5846b,#c6866d,#c68a72,#c68e77,#c6927c,#c59681,#c49c89,#c2a090,#c0a596,#bda89d,#baaba2,#b7ada7,#b4afac,#b0b1b1,#adb0b5,#a9afb9,#a6aebc,#a2adbf,#9dabc2,#99a9c4,#94a7c7,#90a4c9,#8ba1ca,#869ecb,#829acc,#7e97cc,#7a95cc,#7591cc,#5a76c3,#526cbd)"></i>
<i style="background:linear-gradient(#879ecb,#94a7c7,#a2adbf,#adb0b5,#b6aea9,#bda99e,#c1a293,#c49b88,#c6947e,#c68d76,#c68971,#c6866d,#c5836a,#c5836a,#c5846b,#c6866d,#c68a72,#c68e77,#c6927b,#c59681,#c49b88,#c2a08f,#c0a496,#bda89c,#baaaa2,#b8ada7,#b4afac,#b1b1b1,#adb0b5,#aaafb9,#a6aebc,#a2adbf,#9eacc1,#9aaac4,#95a7c6,#90a4c8,#8ca1ca,#879ecb,#829bcc,#7e98cc,#7b95cc,#7691cc,#5a76c3,#526dbe)"></i>
<i style="background:linear-gradient(#879ecb,#94a7c7,#a1adbf,#adb0b5,#b6aeaa,#bca99f,#c1a394,#c49c89,#c6957f,#c68e76,#c68a72,#c6866d,#c5836b,#c5836b,#c5846b,#c6866d,#c68a72,#c68e77,#c6927b,#c69680,#c49b88,#c2a08f,#c0a496,#bda89c,#bbaaa1,#b8aca6,#b4afab,#b1b1b1,#aeb0b4,#aaafb8,#a6aebb,#a3adbf,#9facc1,#9aaac4,#96a8c6,#91a5c8,#8ca2ca,#879ecb,#839bcc,#7f98cc,#7b95cc,#7792cc,#5b76c3,#536dbe)"></i>
<i style="background:linear-gradient(#879ecb,#94a7c7,#a1adc0,#adb0b6,#b5aeaa,#bca99f,#c1a394,#c49c8a,#c6957f,#c68e77,#c68a72,#c6866e,#c5846b,#c5846b,#c5846b,#c6866d,#c68a72,#c68e77,#c6927b,#c69680,#c49b88,#c3a08f,#c0a495,#bda89c,#bbaaa1,#b8aca6,#b5aeab,#b1b1b0,#aeb0b4,#abafb8,#a7aebb,#a3aebe,#9facc1,#9baac3,#96a8c6,#92a5c8,#8da2ca,#889fcb,#839ccc,#8099cc,#7c96cc,#7892cc,#5b77c3,#536ebf)"></i>
<i style="background:linear-gradient(#879ecb,#94a7c7,#a1adc0,#acb0b6,#b5aeab,#bbaaa0,#c0a495,#c49d8b,#c69680,#c68e77,#c68b73,#c6876e,#c5846b,#c5846b,#c5846b,#c6856d,#c68a72,#c68e77,#c6917b,#c69580,#c49b87,#c39f8e,#c0a495,#bea89c,#bbaaa1,#b8aca6,#b5aeab,#b1b0b0,#aeb0b4,#abafb7,#a7afbb,#a4aebe,#a0acc0,#9cabc3,#97a8c5,#92a6c8,#8ea2c9,#899fcb,#849ccc,#8099cc,#7c96cc,#7893cc,#5c77c4,#546fbf)"></i>
<i style="background:linear-gradient(#879ecb,#94a7c7,#a1adc0,#acb0b6,#b4afab,#bbaaa1,#c0a496,#c49e8c,#c59681,#c68f78,#c68b73,#c6876f,#c5846c,#c5846c,#c5846c,#c6856d,#c68a72,#c68e76,#c6917b,#c69580,#c59a87,#c39f8e,#c1a495,#bea79b,#bbaaa0,#b8aca5,#b5aeab,#b2b0b0,#aeb0b4,#abafb7,#a8afba,#a4aebd,#a1adc0,#9cabc3,#98a9c5,#93a6c7,#8ea3c9,#89a0cb,#849ccc,#819acc,#7d97cc,#7994cc,#5c78c4,#556fc0)"></i>
<i style="background:linear-gradient(#889fcb,#93a7c7,#a0acc0,#abafb7,#b4afac,#bbaaa1,#c0a596,#c39e8c,#c59681,#c68f78,#c68b73,#c6876f,#c5846b,#c5846b,#c5846b,#c6856c,#c68971,#c68d76,#c6917b,#c6957f,#c59a86,#c39f8d,#c1a394,#bea79b,#bbaaa0,#b8aca5,#b5aeaa,#b2b0af,#afb0b3,#acafb7,#a8afba,#a5aebd,#a1adc0,#9dabc2,#98a9c5,#93a6c7,#8fa3c9,#8aa0cb,#859dcc,#819acc,#7d97cc,#7892cc,#5a76c3,#5570c0)"></i>
<i style="background:linear-gradient(#889fcb,#92a6c8,#9facc1,#abafb8,#b4afad,#baaaa2,#c0a597,#c39e8c,#c59681,#c68e77,#c68b73,#c6876f,#c5846b,#c5846b,#c5846b,#c6856c,#c68971,#c68d76,#c6917a,#c6957f,#c59a86,#c39e8d,#c1a393,#bea79a,#bcaa9f,#b9aca5,#b6aeaa,#b2b0af,#afb0b3,#acb0b6,#a8afba,#a5aebd,#a1adc0,#9dabc2,#98a9c5,#94a7c7,#8fa3c9,#8aa0cb,#859dcb,#829bcc,#7e98cc,#7691cc,#5773c1,#5671c0)"></i>
<i style="background:linear-gradient(#899fcb,#91a5c8,#9eacc1,#aaafb8,#b3afad,#baaba2,#c0a597,#c39e8c,#c59681,#c68e77,#c68a72,#c6876e,#c5846b,#c5846b,#c5846b,#c6856c,#c68970,#c68d75,#c6907a,#c6947e,#c59985,#c39e8c,#c1a293,#bea69a,#bca99f,#b9aba4,#b6aea9,#b2b0ae,#afb0b3,#acb0b6,#a9afb9,#a5aebd,#a2adbf,#9dabc2,#99a9c5,#94a7c7,#8fa4c9,#8ba0ca,#869dcb,#829bcc,#7e98cc,#748fcb,#5671c1,#5671c1)"></i>
<i style="background:linear-gradient(#89a0cb,#8fa4c9,#9dabc2,#a9afb9,#b3b0ae,#baaba3,#bfa597,#c39e8d,#c59681,#c68e77,#c68a72,#c6866e,#c5836a,#c5836a,#c5836a,#c5846b,#c68870,#c68c75,#c69079,#c6947e,#c59985,#c49e8c,#c1a292,#bfa699,#bca99e,#b9aba4,#b6ada9,#b3b0ae,#b0b0b2,#acb0b6,#a9afb9,#a6aebc,#a2adbf,#9dabc2,#99a9c4,#94a7c7,#90a4c9,#8ba1ca,#879ecb,#839bcc,#7f98cc,#728ecb,#5672c1,#5672c1)"></i>
<i style="background:linear-gradient(#8aa0cb,#8ea3c9,#9cabc2,#a8afba,#b2b0af,#baaba3,#bfa598,#c39e8d,#c59681,#c68e77,#c68972,#c6866e,#c5836a,#c5836a,#c5836a,#c5846b,#c68870,#c68c74,#c69079,#c6947e,#c59984,#c49d8b,#c2a292,#bfa698,#bda99e,#baaba3,#b6ada8,#b3afad,#b0b1b2,#adb0b5,#a9afb9,#a6aebc,#a2adbf,#9eabc2,#99a9c4,#95a7c6,#90a4c8,#8ca1ca,#879ecb,#839ccc,#7f99cc,#708ccb,#5772c1,#5772c1)"></i>
<i style="background:linear-gradient(#8aa0cb,#8da2ca,#9cabc3,#a8afbb,#b2b0af,#b9aba4,#bfa698,#c39f8d,#c59681,#c68e77,#c68971,#c6866d,#c5836a,#c5836a,#c5836a,#c5836b,#c6886f,#c68c74,#c68f79,#c6937d,#c59884,#c49d8b,#c2a191,#bfa598,#bda99d,#baaba3,#b7ada8,#b3afad,#b0b1b2,#adb0b5,#aaafb9,#a6aebc,#a3adbf,#9eacc1,#9aaac4,#95a7c6,#90a4c8,#8ca1ca,#889fcb,#849ccc,#8099cc,#6f8bcb,#5773c1,#5773c1)"></i>
<i style="background:linear-gradient(#8ba0ca,#8ba1ca,#9baac4,#a7aebb,#b1b1b0,#b9aca4,#bfa699,#c39f8d,#c59681,#c68e77,#c68971,#c6866d,#c5826a,#c58269,#c58269,#c5836a,#c6876f,#c68b74,#c68f78,#c6937d,#c59883,#c49c8a,#c2a190,#bfa597,#bda89d,#baaba2,#b7ada7,#b4afad,#b0b1b1,#adb0b5,#aaafb8,#a6aebb,#a3adbf,#9eacc1,#9aaac4,#95a7c6,#91a5c8,#8ca2ca,#889fcb,#849ccc,#8099cc,#6d89ca,#5873c2,#5873c2)"></i>
<i style="background:linear-gradient(#8ba1ca,#8ba1ca,#9aaac4,#a6aebc,#b0b1b1,#b9aca5,#bfa699,#c39f8e,#c59781,#c68e77,#c68870,#c6856d,#c58269,#c58269,#c58269,#c5836a,#c6876e,#c68b73,#c68f78,#c6927c,#c59783,#c49c89,#c2a090,#c0a597,#bda89c,#bbaaa2,#b7ada7,#b4afac,#b1b1b1,#aeb0b4,#aaafb8,#a7aebb,#a3aebe,#9facc1,#9aaac4,#96a8c6,#91a5c8,#8da2ca,#899fcb,#859dcc,#809acc,#6b87ca,#5874c2,#5874c2)"></i>
<i style="background:linear-gradient(#8ca1ca,#8ca1ca,#99a9c4,#a5aebd,#b0b1b2,#b8aca6,#bea69a,#c39f8e,#c59782,#c68e77,#c68870,#c6856c,#c58269,#c58269,#c58269,#c5826a,#c6876e,#c68a73,#c68e77,#c6927c,#c59782,#c49c89,#c2a08f,#c0a496,#bea89b,#bbaaa1,#b8ada7,#b4afac,#b1b1b0,#aeb0b4,#abafb8,#a7aebb,#a3aebe,#9facc1,#9aaac4,#96a8c6,#91a5c8,#8da2ca,#89a0cb,#859dcb,#819acc,#6884c9,#5974c2,#5974c2)"></i>
<i style="background:linear-gradient(#8ca1ca,#8ca1ca,#98a9c5,#a4aebd,#afb0b3,#b8aca6,#bea79a,#c39f8e,#c59782,#c68e77,#c6876f,#c6856c,#c58269,#c58168,#c58168,#c58269,#c6866e,#c68a72,#c68e77,#c6927b,#c59782,#c49b88,#c3a08f,#c0a495,#bea79b,#bbaaa1,#b8aca6,#b5aeab,#b1b0b0,#aeb0b4,#abafb7,#a7afbb,#a4aebe,#9facc1,#9baac3,#96a8c6,#92a5c8,#8da2c9,#8aa0cb,#869dcb,#819acc,#637fc7,#5975c2,#5975c2)"></i>
<i style="background:linear-gradient(#8da2ca,#8da2ca,#96a8c6,#a3aebe,#aeb0b4,#b7ada7,#bea79b,#c3a08f,#c59782,#c68e77,#c6876f,#c6846c,#c58269,#c58168,#c58168,#c58269,#c6866d,#c68a72,#c68e77,#c6917b,#c59681,#c49b87,#c39f8e,#c1a495,#bea79a,#bbaaa0,#b8aca6,#b5aeab,#b2b0b0,#aeb0b4,#abafb7,#a8afba,#a4aebe,#a0acc1,#9baac3,#97a8c6,#92a6c8,#8ea3c9,#8aa0cb,#869ecb,#8099cc,#5f7bc5,#5a75c3,#5a75c3)"></i>
<i style="background:linear-gradient(#8da2ca,#8da2ca,#95a7c6,#a3adbf,#aeb0b4,#b7ada8,#bea79b,#c2a08f,#c59782,#c68e77,#c6876e,#c5846b,#c58169,#c58168,#c58168,#c58269,#c6856d,#c68971,#c68d76,#c6917b,#c69680,#c59a87,#c39f8d,#c1a394,#bea79a,#bcaaa0,#b8aca5,#b5aeaa,#b2b0af,#afb0b3,#abafb7,#a8afba,#a4aebd,#a0acc0,#9baac3,#97a8c5,#93a6c7,#8ea3c9,#8ba1ca,#879ecb,#7e98cc,#5a76c3,#5a76c3,#5a76c3)"></i>
<i style="background:linear-gradient(#8da2ca,#8da2ca,#94a7c7,#a2adbf,#adb0b5,#b6ada8,#bea89c,#c2a08f,#c59782,#c68e77,#c6866e,#c5846b,#c58168,#c48068,#c48068,#c58168,#c6856c,#c68971,#c68d76,#c6917a,#c69680,#c59a86,#c39e8d,#c1a393,#bfa699,#bca99f,#b9aca5,#b5aeaa,#b2b0af,#afb0b3,#acb0b6,#a8afba,#a5aebd,#a0acc0,#9cabc3,#97a8c5,#93a6c7,#8fa3c9,#8ba1ca,#879ecb,#7d97cc,#5b76c3,#5b76c3,#5b76c3)"></i>
<i style="background:linear-gradient(#8ea3c9,#8ea3c9,#93a6c7,#a1adc0,#acb0b6,#b6aea9,#bda89c,#c2a090,#c59783,#c68e77,#c6866d,#c5836a,#c58168,#c48067,#c48067,#c58168,#c6856c,#c68971,#c68d75,#c6907a,#c6957f,#c59986,#c39e8c,#c1a293,#bfa699,#bca99f,#b9aca4,#b6aea9,#b2b0ae,#afb0b3,#acb0b6,#a9afba,#a5aebd,#a1adc0,#9cabc3,#98a9c5,#93a6c7,#8fa4c9,#8ca1ca,#889fcb,#7c96cc,#5b77c4,#5b77c4,#5b77c4)"></i>
<i style="background:linear-gradient(#8ea3c9,#8ea3c9,#91a5c8,#a0acc1,#acafb7,#b5aeaa,#bda99d,#c2a190,#c59883,#c68e77,#c6866d,#c5836a,#c58168,#c48067,#c48067,#c58168,#c6846c,#c68870,#c68c75,#c69079,#c6957f,#c59985,#c49e8c,#c1a292,#bfa698,#bca99e,#b9aba4,#b6aea9,#b3b0ae,#b0b0b2,#acb0b6,#a9afb9,#a5aebd,#a1adc0,#9cabc2,#98a9c5,#94a7c7,#90a4c9,#8ca2ca,#889fcb,#7b95cc,#5c78c4,#5c78c4,#5c78c4)"></i>
<i style="background:linear-gradient(#8fa3c9,#8fa3c9,#90a4c8,#9facc1,#abafb8,#b5aeab,#bda99e,#c2a191,#c59883,#c68e77,#c6866d,#c5826a,#c48068,#c47f67,#c47f67,#c48068,#c5846b,#c68870,#c68c74,#c69079,#c6947f,#c59984,#c49d8b,#c2a292,#bfa598,#bda99e,#b9aba4,#b6ada9,#b3afad,#b0b1b2,#adb0b6,#a9afb9,#a5aebc,#a1adc0,#9dabc2,#98a9c5,#94a7c7,#90a4c8,#8da2ca,#889fcb,#7a95cc,#5c78c4,#5c78c4,#5c78c4)"></i>
<i style="background:linear-gradient(#8fa4c9,#8fa4c9,#8fa4c9,#9eabc2,#aaafb8,#b4afac,#bca99e,#c2a191,#c59884,#c68e77,#c6856d,#c58269,#c48067,#c47f66,#c47f66,#c48067,#c5846b,#c6886f,#c68c74,#c68f79,#c6947e,#c59884,#c49d8a,#c2a191,#bfa597,#bda99d,#baaba3,#b7ada8,#b3afad,#b0b1b2,#adb0b5,#a9afb9,#a6aebc,#a1adbf,#9dabc2,#99a9c4,#95a7c7,#91a5c8,#8da2ca,#899fcb,#7a94cc,#5d79c4,#5d79c4,#5d79c4)"></i>
<i style="background:linear-gradient(#90a4c9,#90a4c9,#90a4c9,#9dabc2,#a9afb9,#b4afad,#bca99f,#c2a292,#c59884,#c68e77,#c6856d,#c58169,#c48067,#c47f66,#c47f66,#c48067,#c5836b,#c6876f,#c68b74,#c68f78,#c6947e,#c59883,#c49c8a,#c2a190,#c0a597,#bda89d,#baaba3,#b7ada8,#b4afad,#b0b1b1,#adb0b5,#aaafb9,#a6aebc,#a2adbf,#9dabc2,#99a9c4,#95a7c6,#91a5c8,#8ea3c9,#899fcb,#7590cc,#5d79c5,#5d79c5,#5d79c5)"></i>
<i style="background:linear-gradient(#90a4c8,#90a4c8,#90a4c8,#9cabc3,#a8afba,#b3b0ae,#bbaaa0,#c1a292,#c59985,#c68e77,#c6856c,#c58168,#c47f67,#c47e66,#c47e66,#c47f66,#c5836a,#c6876f,#c68b73,#c68f78,#c6937d,#c59783,#c49c89,#c2a090,#c0a496,#bda89c,#baaba2,#b7ada7,#b4afac,#b1b1b1,#adb0b5,#aaafb8,#a6aebc,#a2adbf,#9eabc2,#99aac4,#95a8c6,#92a5c8,#8ea3c9,#899fcb,#6e8aca,#5e7ac5,#5e7ac5,#5e7ac5)"></i>
<i style="background:linear-gradient(#91a5c8,#91a5c8,#91a5c8,#9baac3,#a7afbb,#b2b0af,#bbaaa1,#c1a393,#c59985,#c68e77,#c6856c,#c58168,#c47f66,#c47e65,#c47e65,#c47f66,#c5836a,#c6876e,#c68b73,#c68e77,#c6937d,#c59782,#c49b88,#c2a08f,#c0a496,#bea89c,#baaba2,#b7ada7,#b4afac,#b1b1b1,#aeb0b4,#aaafb8,#a6aebb,#a2adbf,#9eacc1,#9aaac4,#96a8c6,#92a6c8,#8fa3c9,#899fcb,#6783c8,#5e7ac5,#5e7ac5,#5e7ac5)"></i>
<i style="background:linear-gradient(#91a5c8,#91a5c8,#91a5c8,#9aaac4,#a7aebb,#b1b0b0,#baaaa2,#c1a394,#c59985,#c68e77,#c6856c,#c48067,#c47f66,#c47e65,#c47e65,#c47f66,#c58269,#c6866e,#c68a72,#c68e77,#c6927c,#c59781,#c49b88,#c3a08f,#c0a495,#bea89b,#bbaaa1,#b8aca6,#b4afab,#b1b1b0,#aeb0b4,#abafb8,#a7aebb,#a3adbf,#9eacc1,#9aaac4,#96a8c6,#93a6c7,#8fa3c9,#889fcb,#607cc6,#5f7bc5,#5f7bc5,#5f7bc5)"></i>
<i style="background:linear-gradient(#91a5c8,#91a5c8,#91a5c8,#98a9c5,#a6aebc,#b1b1b1,#baaba2,#c1a394,#c59a86,#c68f78,#c6856c,#c47f67,#c47e66,#c47d65,#c47d65,#c47e65,#c58269,#c6866d,#c68a72,#c68e77,#c6927c,#c59681,#c59b87,#c39f8e,#c1a495,#bea79b,#bbaaa1,#b8aca6,#b5aeab,#b1b0b0,#aeb0b4,#abafb8,#a7aebb,#a3aebe,#9facc1,#9baac3,#97a8c5,#93a6c7,#8fa4c9,#889fcb,#5f7bc6,#5f7bc6,#5f7bc6,#5f7bc6)"></i>
<i style="background:linear-gradient(#92a6c8,#92a6c8,#92a6c8,#97a8c5,#a5aebd,#b0b1b2,#baaba3,#c0a495,#c59a86,#c68f78,#c6856c,#c47f66,#c47e65,#c47d64,#c47d64,#c47e65,#c58169,#c6866d,#c68971,#c68d76,#c6927b,#c69680,#c59a86,#c39f8e,#c1a394,#bea79a,#bbaaa0,#b8aca5,#b5aeaa,#b2b0af,#aeb0b3,#abafb7,#a7afbb,#a3aebe,#9facc1,#9baac3,#97a8c5,#94a7c7,#90a4c9,#879ecb,#607cc6,#607cc6,#607cc6,#607cc6)"></i>
<i style="background:linear-gradient(#92a6c8,#92a6c8,#92a6c8,#96a8c6,#a4aebe,#afb0b3,#b9aca4,#c0a496,#c59a87,#c68f78,#c6856d,#c47e66,#c47e65,#c47d64,#c47d64,#c47d65,#c58168,#c6856d,#c68971,#c68d76,#c6917b,#c69580,#c59a86,#c39e8d,#c1a393,#bea79a,#bbaaa0,#b8aca5,#b5aeaa,#b2b0af,#afb0b3,#abafb7,#a8afba,#a4aebe,#9facc1,#9babc3,#98a9c5,#94a7c7,#90a4c8,#879ecb,#607cc6,#607cc6,#607cc6,#607cc6)"></i>
<i style="background:linear-gradient(#93a6c7,#93a6c7,#93a6c7,#95a7c6,#a3adbf,#aeb0b3,#b8aca5,#c0a596,#c49b88,#c68f79,#c6856d,#c47e65,#c47d64,#c47c64,#c47c64,#c47d64,#c58168,#c6856c,#c68971,#c68d75,#c6917a,#c6957f,#c59985,#c39e8c,#c1a393,#bea69a,#bcaaa0,#b9aca5,#b6aeaa,#b2b0af,#afb0b3,#acafb7,#a8afba,#a4aebe,#a0acc0,#9cabc3,#98a9c5,#94a7c7,#90a4c8,#879ecb,#617dc6,#617dc6,#617dc6,#617dc6)"></i>
<i style="background:linear-gradient(#93a6c7,#93a6c7,#93a6c7,#94a7c7,#a2adbf,#aeb0b4,#b8aca6,#bfa597,#c49b88,#c69079,#c6856d,#c47d64,#c47d64,#c37c63,#c37c63,#c47d64,#c48068,#c6856c,#c68870,#c68c75,#c6907a,#c6947e,#c59984,#c49e8c,#c1a292,#bfa699,#bca99f,#b9aca4,#b6aea9,#b3b0ae,#afb0b3,#acb0b6,#a8afba,#a4aebd,#a0acc0,#9cabc3,#99a9c5,#95a7c6,#90a4c8,#879ecb,#617dc6,#617dc6,#617dc6,#617dc6)"></i>
<i style="background:linear-gradient(#94a7c7,#94a7c7,#94a7c7,#94a7c7,#a1adc0,#adb0b5,#b7ada7,#bfa698,#c49c89,#c69079,#c6856d,#c47d64,#c37c63,#c37c63,#c37c63,#c37c63,#c48067,#c5846b,#c68870,#c68c75,#c69079,#c6947e,#c59884,#c49d8b,#c1a292,#bfa699,#bca99f,#b9aba4,#b6ada9,#b3b0ae,#afb0b2,#acb0b6,#a8afba,#a5aebd,#a1adc0,#9dabc2,#99a9c4,#95a7c6,#90a5c8,#849ccc,#627ec7,#627ec7,#627ec7,#627ec7)"></i>
<i style="background:linear-gradient(#94a7c7,#94a7c7,#94a7c7,#94a7c7,#a0acc0,#acb0b6,#b7ada8,#bfa699,#c49c8a,#c6907a,#c6856d,#c37c63,#c37c63,#c37c63,#c37c63,#c37c63,#c48067,#c5846b,#c6886f,#c68c74,#c69079,#c6937d,#c59883,#c49d8b,#c2a191,#bfa698,#bca99e,#b9aba3,#b6ada8,#b3afad,#b0b1b2,#acb0b6,#a9afb9,#a5aebd,#a1adc0,#9dabc2,#99aac4,#96a8c6,#90a4c8,#7b95cc,#627ec7,#627ec7,#627ec7,#627ec7)"></i>
<i style="background:linear-gradient(#95a7c6,#95a7c6,#95a7c6,#95a7c6,#9facc1,#abafb7,#b6aea9,#bea79a,#c49d8a,#c6917a,#c6856d,#c37b62,#c37b62,#c37b62,#c37b62,#c37b62,#c47f66,#c5836b,#c6876f,#c68b74,#c68f78,#c6937d,#c59782,#c49d8a,#c2a191,#bfa598,#bda99e,#baaba3,#b7ada8,#b3afad,#b0b1b2,#adb0b6,#a9afb9,#a5aebd,#a1adc0,#9eabc2,#9aaac4,#96a8c6,#90a4c8,#728dcb,#637fc7,#637fc7,#637fc7,#637fc7)"></i>
<i style="background:linear-gradient(#95a7c6,#95a7c6,#95a7c6,#95a7c6,#9eacc1,#abafb7,#b6aea9,#bfa699,#c49d8a,#c6917a,#c6856d,#c37b62,#c37b62,#c37b62,#c37b62,#c37b62,#c47e66,#c5836a,#c6866e,#c68a73,#c68e77,#c6927c,#c59781,#c49c89,#c2a090,#c0a597,#bda89d,#baaaa2,#b8ada7,#b4afac,#b1b1b1,#adb0b5,#aaafb8,#a6aebc,#a2adbf,#9facc1,#9baac3,#97a9c5,#91a5c8,#6985c9,#6581c8,#6581c8,#6581c8,#6581c8)"></i>
<i style="background:linear-gradient(#96a8c6,#96a8c6,#96a8c6,#96a8c6,#9eabc2,#abafb7,#b6aea9,#bfa699,#c49d8a,#c6917a,#c6856c,#c37b63,#c37a61,#c37a61,#c37a61,#c37a61,#c47e65,#c58269,#c6866d,#c68a72,#c68e76,#c6917b,#c69680,#c49b88,#c3a08f,#c0a495,#bea79b,#bbaaa0,#b8aca5,#b5aeaa,#b2b0b0,#aeb0b4,#abafb7,#a7aebb,#a3aebe,#a0acc0,#9cabc3,#99a9c5,#91a5c8,#6783c9,#6783c9,#6783c9,#6783c9,#6783c9)"></i>
<i style="background:linear-gradient(#97a8c5,#97a8c5,#97a8c5,#97a8c5,#9dabc2,#abafb7,#b6ada9,#bfa699,#c49c8a,#c6917a,#c6856c,#c37b63,#c37961,#c37961,#c37961,#c37961,#c47d64,#c58168,#c6856c,#c68971,#c68d75,#c6907a,#c6957f,#c59a87,#c39f8e,#c1a394,#bea79a,#bca99f,#b9aca4,#b6aea9,#b2b0ae,#afb0b3,#acb0b7,#a8afba,#a4aebd,#a1adc0,#9dabc2,#9aaac4,#92a5c8,#6985c9,#6985c9,#6985c9,#6985c9,#6985c9)"></i>
<i style="background:linear-gradient(#97a9c5,#97a9c5,#97a9c5,#97a9c5,#9dabc2,#abafb7,#b6ada9,#bfa699,#c49c8a,#c6917a,#c6856c,#c37b63,#c37960,#c37960,#c37960,#c37960,#c37c63,#c48067,#c5846b,#c68870,#c68c74,#c69079,#c6947e,#c59985,#c39e8c,#c1a393,#bfa699,#bda99e,#baaba3,#b7ada8,#b3afad,#b0b1b2,#adb0b6,#a9afb9,#a5aebc,#a2adbf,#9eacc1,#9baac3,#92a5c8,#6c88ca,#6c88ca,#6c88ca,#6c88ca,#6c88ca)"></i>
<i style="background:linear-gradient(#98a9c5,#98a9c5,#98a9c5,#98a9c5,#9cabc3,#abafb8,#b6ada9,#bfa699,#c49c89,#c6917a,#c6856c,#c37b63,#c2785f,#c2785f,#c2785f,#c2785f,#c37b62,#c47f66,#c5836a,#c6876f,#c68b73,#c68f78,#c6937d,#c59884,#c49d8b,#c2a292,#bfa597,#bda89d,#baaaa2,#b7ada7,#b4afac,#b1b1b1,#adb0b5,#aaafb8,#a6aebc,#a3aebe,#a0acc1,#9cabc3,#92a5c8,#6e8aca,#6e8aca,#6e8aca,#6e8aca,#6e8aca)"></i>
<i style="background:linear-gradient(#99a9c4,#99a9c4,#99a9c4,#99a9c4,#9baac3,#abafb8,#b6ada9,#bfa698,#c49c89,#c6917a,#c5846c,#c37b62,#c2775f,#c2775f,#c2775f,#c2775f,#c37a62,#c47e66,#c58269,#c6866e,#c68a72,#c68e77,#c6927c,#c59883,#c49d8a,#c2a191,#c0a496,#bea79b,#bbaaa0,#b8aca5,#b5aeab,#b2b0b0,#aeb0b4,#abafb7,#a7afbb,#a4aebe,#a1adc0,#9dabc2,#92a5c8,#708ccb,#708ccb,#708ccb,#708ccb,#708ccb)"></i>
<i style="background:linear-gradient(#9aaac4,#9aaac4,#9aaac4,#9aaac4,#9aaac4,#aaafb8,#b6aea9,#bfa698,#c49c89,#c6907a,#c5846b,#c37b62,#c2775e,#c2775e,#c2775e,#c2775e,#c37a61,#c47e65,#c58169,#c6856d,#c68971,#c68d76,#c6927b,#c59782,#c49c89,#c2a08f,#c0a495,#bea79a,#bca99f,#b9aca4,#b6aea9,#b2b0ae,#afb0b3,#acb0b7,#a8afba,#a5aebd,#a2adbf,#9eabc2,#91a5c8,#728ecb,#728ecb,#728ecb,#728ecb,#728ecb)"></i>
<i style="background:linear-gradient(#9aaac4,#9aaac4,#9aaac4,#9aaac4,#9aaac4,#aaafb8,#b6aea9,#bfa698,#c49b88,#c6907a,#c5846b,#c37b62,#c2765e,#c2765d,#c2765d,#c2765d,#c37960,#c47d64,#c58168,#c6856c,#c68870,#c68c75,#c6917a,#c59681,#c49b88,#c39f8e,#c1a394,#bfa699,#bda99e,#baaba3,#b7ada8,#b3afad,#b0b1b2,#adb0b6,#a9afb9,#a6aebc,#a3adbf,#9eacc1,#8ca1ca,#7590cc,#7590cc,#7590cc,#7590cc,#7590cc)"></i>
<i style="background:linear-gradient(#9baac3,#9baac3,#9baac3,#9baac3,#9baac3,#a9afb9,#b6aea9,#bfa698,#c49b88,#c69079,#c5846b,#c37b62,#c2755d,#c2755d,#c2755d,#c2755d,#c2785f,#c37c63,#c48067,#c5846b,#c6886f,#c68b74,#c69079,#c69580,#c59a86,#c39f8d,#c1a292,#bfa597,#bda89d,#baaba2,#b7ada7,#b4afac,#b1b1b1,#adb0b5,#aaafb8,#a7aebb,#a4aebe,#9facc1,#859dcc,#7792cc,#7792cc,#7792cc,#7792cc,#7792cc)"></i>
<i style="background:linear-gradient(#9cabc3,#9cabc3,#9cabc3,#9cabc3,#9cabc3,#a9afba,#b6aeaa,#bfa698,#c49b88,#c69079,#c5846b,#c37b62,#c2755d,#c2755c,#c2755c,#c2755c,#c2775f,#c37b62,#c47f66,#c5836a,#c6876e,#c68a73,#c68f78,#c6947e,#c59985,#c49e8c,#c2a191,#c0a496,#bea79b,#bbaaa0,#b8aca6,#b5aeab,#b1b0b0,#aeb0b4,#abafb7,#a8afba,#a5aebd,#9facc1,#7f98cc,#7994cc,#7994cc,#7994cc,#7994cc,#7994cc)"></i>
<i style="background:linear-gradient(#9cabc2,#9cabc2,#9cabc2,#9cabc2,#9cabc2,#a8afba,#b5aeaa,#bfa698,#c59a87,#c69079,#c5836b,#c37b62,#c2745c,#c2745c,#c2745c,#c2745c,#c2765e,#c37a61,#c47e65,#c58269,#c6866d,#c68a72,#c68e77,#c6937d,#c59884,#c49d8b,#c2a090,#c0a495,#bea79a,#bca99f,#b9aca4,#b6aea9,#b2b0af,#afb0b3,#acb0b6,#a9afb9,#a6aebc,#9facc1,#7c96cc,#7c96cc,#7c96cc,#7c96cc,#7c96cc,#7c96cc)"></i>
<i style="background:linear-gradient(#9dabc2,#9dabc2,#9dabc2,#9dabc2,#9dabc2,#a7aebb,#b5aeaa,#bfa698,#c59a87,#c69079,#c5836b,#c37a62,#c1745c,#c1735b,#c1735b,#c1735b,#c2755d,#c37961,#c47d64,#c58168,#c6856c,#c68971,#c68d76,#c6927c,#c59783,#c49c89,#c3a08f,#c1a394,#bfa699,#bda99e,#baaba3,#b7ada8,#b3afad,#b0b1b2,#adb0b5,#aaafb8,#a7aebb,#9eacc1,#7e97cc,#7e97cc,#7e97cc,#7e97cc,#7e97cc,#7e97cc)"></i>
<i style="background:linear-gradient(#9eabc2,#9eabc2,#9eabc2,#9eabc2,#9eabc2,#a6aebc,#b5aeaa,#bfa698,#c59a86,#c68f78,#c5836b,#c37a61,#c1735b,#c1735a,#c1735a,#c1735a,#c2745c,#c37860,#c37c63,#c48067,#c5846b,#c68870,#c68c75,#c6927b,#c59781,#c49b88,#c39f8d,#c1a292,#bfa598,#bda89d,#baaba2,#b7ada7,#b4afac,#b1b1b1,#aeb0b4,#abafb7,#a8afba,#9eabc2,#8099cc,#8099cc,#8099cc,#8099cc,#8099cc,#8099cc)"></i>
<i style="background:linear-gradient(#9facc1,#9facc1,#9facc1,#9facc1,#9facc1,#a4aebd,#b5aeab,#bfa698,#c59a86,#c68f78,#c5836a,#c37a61,#c1735b,#c1725a,#c1725a,#c1725a,#c1745b,#c2775f,#c37b63,#c47f66,#c5836a,#c6876e,#c68c74,#c6917a,#c69680,#c59a87,#c39e8c,#c2a191,#c0a596,#bea89b,#bbaaa1,#b8aca6,#b5aeab,#b2b0af,#afb0b3,#acb0b6,#a9afb9,#9dabc2,#829bcc,#829bcc,#829bcc,#829bcc,#829bcc,#829bcc)"></i>
<i style="background:linear-gradient(#9facc1,#9facc1,#9facc1,#9facc1,#9facc1,#a3aebe,#b5aeab,#bfa699,#c59a86,#c68f78,#c5836a,#c37a61,#c1725a,#c17159,#c17159,#c17159,#c1735b,#c2775e,#c37a62,#c47e65,#c58269,#c6866d,#c68b73,#c69079,#c6957f,#c59985,#c49d8b,#c2a090,#c0a495,#bea79a,#bcaa9f,#b9aca5,#b6aeaa,#b3b0ae,#b0b1b2,#adb0b5,#aaafb8,#9cabc3,#859dcc,#859dcc,#859dcc,#859dcc,#859dcc,#859dcc)"></i>
<i style="background:linear-gradient(#a0acc0,#a0acc0,#a0acc0,#a0acc0,#a0acc0,#a2adbf,#b4afac,#bfa699,#c59a86,#c68e77,#c5836a,#c37961,#c1725a,#c17159,#c17159,#c17159,#c1725a,#c2765d,#c37961,#c47d64,#c58168,#c6856c,#c68a72,#c68f78,#c6947e,#c59884,#c49c89,#c3a08f,#c1a394,#bfa699,#bca99e,#b9aba3,#b7ada8,#b4afad,#b1b1b1,#aeb0b4,#abafb8,#9baac3,#879ecb,#879ecb,#879ecb,#879ecb,#879ecb,#879ecb)"></i>
<i style="background:linear-gradient(#a1adc0,#a1adc0,#a1adc0,#a1adc0,#a1adc0,#a1adc0,#b4afac,#bfa699,#c59a86,#c68e77,#c5836a,#c37960,#c1725a,#c07058,#c07058,#c07058,#c17159,#c2755d,#c37960,#c37c64,#c48067,#c5846b,#c68971,#c68e77,#c6937d,#c59783,#c49b88,#c39f8d,#c1a293,#bfa598,#bda89d,#baaba2,#b7ada7,#b4afab,#b2b0b0,#afb0b3,#acb0b7,#99a9c4,#899fcb,#899fcb,#899fcb,#899fcb,#899fcb,#899fcb)"></i>
<i style="background:linear-gradient(#a1adbf,#a1adbf,#a1adbf,#a1adbf,#a1adbf,#a1adbf,#b3afad,#bfa699,#c59a86,#c68e77,#c5826a,#c37860,#c17259,#c06f57,#c06f57,#c06f57,#c17058,#c2745c,#c2785f,#c37b63,#c47f67,#c5836a,#c6886f,#c68d76,#c6927b,#c59681,#c59a87,#c39e8c,#c2a191,#c0a596,#bea89c,#bbaaa1,#b8aca6,#b5aeaa,#b2b0ae,#b0b0b2,#acb0b6,#95a7c6,#8ba1ca,#8ba1ca,#8ba1ca,#8ba1ca,#8ba1ca,#8ba1ca)"></i>
<i style="background:linear-gradient(#a2adbf,#a2adbf,#a2adbf,#a2adbf,#a2adbf,#a2adbf,#b2b0af,#bea69a,#c59a86,#c68d76,#c58269,#c2785f,#c17159,#c06e57,#c06e57,#c06e57,#c06f58,#c1735b,#c2775e,#c37a62,#c47e66,#c58269,#c6876e,#c68c74,#c6917a,#c69580,#c59985,#c49d8b,#c2a190,#c0a495,#bea79a,#bcaaa0,#b9aca4,#b6ada9,#b3afad,#b0b1b1,#adb0b6,#92a5c8,#8da2ca,#8da2ca,#8da2ca,#8da2ca,#8da2ca,#8da2ca)"></i>
<i style="background:linear-gradient(#a3adbf,#a3adbf,#a3adbf,#a3adbf,#a3adbf,#a3adbf,#b1b1b0,#bea79a,#c59a86,#c68d76,#c58269,#c2785f,#c17159,#c06e56,#c06e56,#c06e56,#c06e57,#c1725a,#c2765d,#c37961,#c47d65,#c58168,#c6866d,#c68b73,#c69079,#c6947f,#c59884,#c49c8a,#c3a08f,#c1a394,#bfa699,#bca99e,#baaba3,#b7ada7,#b4afac,#b1b0b0,#acb0b6,#8fa4c9,#8fa4c9,#8fa4c9,#8fa4c9,#8fa4c9,#8fa4c9,#8fa4c9)"></i>
<i style="background:linear-gradient(#a4aebe,#a4aebe,#a4aebe,#a4aebe,#a4aebe,#a4aebe,#b0b1b2,#bea79a,#c59a86,#c68c75,#c58169,#c2775f,#c17159,#bf6d55,#bf6d55,#bf6d55,#c06e56,#c17159,#c2755d,#c37860,#c47c64,#c48068,#c6856c,#c68a72,#c68f78,#c6937d,#c59783,#c49b88,#c39f8e,#c1a293,#bfa598,#bda99d,#baaba2,#b8aca6,#b5aeaa,#b2b0af,#abafb7,#91a5c8,#91a5c8,#91a5c8,#91a5c8,#91a5c8,#91a5c8,#91a5c8)"></i>
<i style="background:linear-gradient(#a4aebe,#a4aebe,#a4aebe,#a4aebe,#a4aebe,#a4aebe,#aeb0b4,#bea79b,#c59a87,#c68c74,#c58168,#c2765e,#c17159,#bf6c55,#bf6c55,#bf6c55,#bf6d55,#c17058,#c2745c,#c2775f,#c37c63,#c47f67,#c5846b,#c68971,#c68e77,#c6927c,#c59681,#c59a87,#c39e8c,#c2a291,#c0a597,#bea89c,#bbaaa0,#b9aca5,#b6aea9,#b3afad,#aaafb8,#93a7c7,#93a7c7,#93a7c7,#93a7c7,#93a7c7,#93a7c7,#93a7c7)"></i>
<i style="background:linear-gradient(#a5aebd,#a5aebd,#a5aebd,#a5aebd,#a5aebd,#a5aebd,#adb0b5,#bea79b,#c59a87,#c68b74,#c58168,#c2765d,#c17058,#bf6c54,#bf6c54,#bf6c54,#bf6c55,#c07058,#c1735b,#c2775e,#c37b62,#c47e66,#c5836a,#c68870,#c68d75,#c6917b,#c69580,#c59985,#c49d8b,#c2a190,#c0a495,#bea79b,#bca99f,#b9aba3,#b7ada8,#b4afac,#a9afb9,#96a8c6,#96a8c6,#96a8c6,#96a8c6,#96a8c6,#96a8c6,#96a8c6)"></i>
<i style="background:linear-gradient(#a5aebc,#a5aebc,#a5aebc,#a5aebc,#a5aebc,#a5aebc,#abafb7,#bea89c,#c49b87,#c68b73,#c48067,#c2755d,#c07058,#bf6b54,#bf6b54,#bf6b54,#bf6b54,#c06f57,#c1725a,#c2765d,#c37a61,#c47d65,#c58269,#c6876e,#c68c74,#c69079,#c6947f,#c59884,#c49c8a,#c2a08f,#c1a394,#bfa699,#bda99e,#baaba2,#b8aca6,#b5aeab,#a7afbb,#98a9c5,#98a9c5,#98a9c5,#98a9c5,#98a9c5,#98a9c5,#98a9c5)"></i>
<i style="background:linear-gradient(#a6aebc,#a6aebc,#a6aebc,#a6aebc,#a6aebc,#a6aebc,#a9afb9,#bda89c,#c49b88,#c68a72,#c48067,#c2755c,#c06f58,#be6a53,#be6a53,#be6a53,#be6a53,#c06e56,#c17159,#c2755c,#c37960,#c47c64,#c58168,#c6866d,#c68b73,#c68f78,#c6937d,#c59783,#c49b88,#c39f8e,#c1a393,#bfa698,#bda89c,#bbaaa1,#b9aca5,#b6aea9,#a6aebc,#9aaac4,#9aaac4,#9aaac4,#9aaac4,#9aaac4,#9aaac4,#9aaac4)"></i>
<i style="background:linear-gradient(#a7aebb,#a7aebb,#a7aebb,#a7aebb,#a7aebb,#a7aebb,#a7afbb,#bda99d,#c49b88,#c68b73,#c47f67,#c2745c,#c06f57,#be6a53,#be6952,#be6952,#be6953,#bf6d55,#c17059,#c1745c,#c2785f,#c37c63,#c48067,#c6856c,#c68a72,#c68e77,#c6927c,#c59781,#c59a87,#c39e8c,#c2a291,#c0a597,#bea79b,#bca99f,#baaba3,#b7ada7,#a6aebc,#9cabc3,#9cabc3,#9cabc3,#9cabc3,#9cabc3,#9cabc3,#9cabc3)"></i>
<i style="background:linear-gradient(#a8afba,#a8afba,#a8afba,#a8afba,#a8afba,#a8afba,#a8afba,#bca99e,#c49c89,#c68b73,#c47f66,#c2745c,#c06e56,#be6952,#be6952,#be6952,#be6952,#bf6c55,#c07058,#c1735b,#c2775f,#c37b62,#c47f66,#c5846b,#c68971,#c68d76,#c6917b,#c69680,#c59985,#c49d8b,#c2a190,#c0a495,#bfa699,#bda89d,#bbaaa1,#b9aca5,#a5aebd,#9facc1,#9facc1,#9facc1,#9facc1,#9facc1,#9facc1,#9facc1)"></i>
<i style="background:linear-gradient(#a8afba,#a8afba,#a8afba,#a8afba,#a8afba,#a8afba,#a8afba,#bbaaa0,#c49c89,#c68b74,#c47f66,#c1745c,#c06d56,#be6952,#be6851,#be6851,#be6851,#bf6b54,#c06f57,#c1725a,#c2765e,#c37a61,#c47e66,#c5836a,#c6886f,#c68c75,#c6907a,#c6957f,#c59884,#c49c89,#c3a08e,#c1a393,#c0a597,#bea79b,#bca99f,#baaba3,#a5aebd,#a1adc0,#a1adc0,#a1adc0,#a1adc0,#a1adc0,#a1adc0,#a1adc0)"></i>
<i style="background:linear-gradient(#a9afb9,#a9afb9,#a9afb9,#a9afb9,#a9afb9,#a9afb9,#a9afb9,#baaba2,#c49c8a,#c68c74,#c47e66,#c1735b,#bf6c55,#be6851,#bd6751,#bd6751,#be6851,#bf6b54,#c06e57,#c1725a,#c2755d,#c37961,#c47e65,#c58269,#c6876e,#c68b73,#c68f79,#c6937d,#c59783,#c49b88,#c39e8d,#c2a191,#c0a495,#bfa699,#bda89d,#bbaaa2,#a4aebe,#a3aebe,#a3aebe,#a3aebe,#a3aebe,#a3aebe,#a3aebe,#a3aebe)"></i>
<i style="background:linear-gradient(#aaafb9,#aaafb9,#aaafb9,#aaafb9,#aaafb9,#aaafb9,#aaafb9,#b8aca5,#c49d8b,#c68c75,#c47e65,#c1735b,#bf6b54,#be6851,#bd6750,#bd6750,#bd6750,#be6a53,#c06e56,#c17159,#c2755c,#c37960,#c47d64,#c58169,#c6866d,#c68a72,#c68e77,#c6927c,#c59681,#c59a86,#c49d8b,#c2a090,#c1a393,#c0a597,#bea79b,#bbaaa1,#a6aebc,#a6aebc,#a6aebc,#a6aebc,#a6aebc,#a6aebc,#a6aebc,#a6aebc)"></i>
<i style="background:linear-gradient(#abafb8,#abafb8,#abafb8,#abafb8,#abafb8,#abafb8,#abafb8,#b7ada8,#c49e8c,#c68c75,#c47e65,#c1735b,#bf6a53,#bd6750,#bd664f,#bd664f,#bd6650,#be6952,#bf6d55,#c17058,#c2745c,#c2785f,#c37c63,#c58068,#c6856c,#c68971,#c68d76,#c6917b,#c69580,#c59985,#c49c8a,#c39f8e,#c2a191,#c0a495,#bfa698,#bbaaa1,#a8afba,#a8afba,#a8afba,#a8afba,#a8afba,#a8afba,#a8afba,#a8afba)"></i>
<i style="background:linear-gradient(#abafb7,#abafb7,#abafb7,#abafb7,#abafb7,#abafb7,#abafb7,#b5aeab,#c39e8d,#c68c75,#c47e65,#c1725a,#be6a53,#bd6650,#bd654f,#bd654f,#bd664f,#be6952,#bf6c55,#c06f58,#c1735b,#c2775e,#c37b62,#c47f67,#c5846b,#c68870,#c68c75,#c69079,#c6947e,#c59883,#c49b88,#c39e8c,#c2a090,#c1a293,#c0a596,#baaaa2,#aaafb8,#aaafb8,#aaafb8,#aaafb8,#aaafb8,#aaafb8,#aaafb8,#aaafb8)"></i>
<i style="background:linear-gradient(#acb0b6,#acb0b6,#acb0b6,#acb0b6,#acb0b6,#acb0b6,#acb0b6,#b3afad,#c39f8e,#c68c75,#c47d65,#c1725a,#be6952,#bd664f,#bc644e,#bc644e,#bc654f,#be6851,#bf6b54,#c06f57,#c1725a,#c2765e,#c37a62,#c47f66,#c5836a,#c6876e,#c68b73,#c68f78,#c6937d,#c59781,#c59a86,#c49d8a,#c39f8e,#c2a191,#c1a394,#baaba2,#acb0b6,#acb0b6,#acb0b6,#acb0b6,#acb0b6,#acb0b6,#acb0b6,#acb0b6)"></i>
<i style="background:linear-gradient(#adb0b6,#adb0b6,#adb0b6,#adb0b6,#adb0b6,#adb0b6,#adb0b6,#b1b1b0,#c3a08f,#c68d75,#c47d64,#c17159,#be6851,#bd654f,#bc644e,#bc644e,#bc644e,#bd6751,#bf6b53,#c06e56,#c1725a,#c2755d,#c37961,#c47e65,#c58269,#c6866d,#c68a72,#c68e77,#c6927b,#c69580,#c59985,#c49b88,#c49e8c,#c3a08f,#c2a292,#baaba3,#aeb0b4,#aeb0b4,#aeb0b4,#aeb0b4,#aeb0b4,#aeb0b4,#aeb0b4,#aeb0b4)"></i>
<i style="background:linear-gradient(#adb0b5,#adb0b5,#adb0b5,#adb0b5,#adb0b5,#adb0b5,#adb0b5,#afb0b3,#c2a190,#c68d75,#c47d64,#c17159,#bd6751,#bc644e,#bc634d,#bc634d,#bc634e,#bd6650,#be6a53,#bf6d56,#c17159,#c2755c,#c37960,#c47d64,#c58168,#c6856c,#c68971,#c68d75,#c6917a,#c6947e,#c59883,#c59a86,#c49c8a,#c39e8d,#c2a090,#b9aba4,#b0b1b2,#b0b1b2,#b0b1b2,#b0b1b2,#b0b1b2,#b0b1b2,#b0b1b2,#b0b1b2)"></i>
<i style="background:linear-gradient(#aeb0b4,#aeb0b4,#aeb0b4,#aeb0b4,#aeb0b4,#aeb0b4,#aeb0b4,#aeb0b4,#c2a292,#c68d76,#c47d64,#c17059,#bd6750,#bc634e,#bb624d,#bb624d,#bb634d,#bd664f,#be6952,#bf6c55,#c17058,#c1745c,#c2785f,#c37c63,#c48067,#c5846b,#c6886f,#c68c74,#c68f78,#c6937d,#c59681,#c59984,#c49b87,#c49d8a,#c39f8d,#b9aca5,#b2b0af,#b2b0af,#b2b0af,#b2b0af,#b2b0af,#b2b0af,#b2b0af,#b2b0af)"></i>
<i style="background:linear-gradient(#aeb0b3,#aeb0b3,#aeb0b3,#aeb0b3,#aeb0b3,#aeb0b3,#aeb0b3,#aeb0b3,#c1a393,#c68e77,#c47d64,#c07058,#bd664f,#bb624d,#bb614c,#bb614c,#bb624c,#bd654f,#be6852,#bf6c54,#c06f58,#c1735b,#c2775e,#c37b62,#c47e66,#c5826a,#c6866e,#c68a73,#c68e77,#c6927b,#c6957f,#c59782,#c59985,#c49b88,#c49d8b,#b8aca5,#b4afac,#b4afac,#b4afac,#b4afac,#b4afac,#b4afac,#b4afac,#b4afac)"></i>
<i style="background:linear-gradient(#afb0b3,#afb0b3,#afb0b3,#afb0b3,#afb0b3,#afb0b3,#afb0b3,#afb0b3,#c0a495,#c68f78,#c47d64,#c06f58,#bd654f,#bb614c,#bb614c,#bb614c,#bb614c,#bc644e,#be6851,#bf6b54,#c06f57,#c1725a,#c2765d,#c37a61,#c47d65,#c58168,#c6856d,#c68971,#c68d76,#c6907a,#c6947e,#c69680,#c59883,#c59a86,#c49c89,#b8aca6,#b6ada9,#b6ada9,#b6ada9,#b6ada9,#b6ada9,#b6ada9,#b6ada9,#b6ada9)"></i>
<i style="background:linear-gradient(#b0b1b2,#b0b1b2,#b0b1b2,#b0b1b2,#b0b1b2,#b0b1b2,#b0b1b2,#b0b1b2,#bfa598,#c69079,#c47d64,#c06f57,#bc654f,#ba604b,#ba604b,#ba604b,#ba604b,#bc634e,#bd6750,#be6a53,#c06e56,#c17159,#c2755d,#c37960,#c37c63,#c48067,#c5846b,#c68870,#c68c74,#c68f78,#c6927c,#c6947e,#c59681,#c59883,#c59a86,#b8aca6,#b8aca6,#b8aca6,#b8aca6,#b8aca6,#b8aca6,#b8aca6,#b8aca6,#b8aca6)"></i>
<i style="background:linear-gradient(#b0b1b1,#b0b1b1,#b0b1b1,#b0b1b1,#b0b1b1,#b0b1b1,#b0b1b1,#b0b1b1,#bea79b,#c6917a,#c47d64,#c06e56,#bc644e,#ba5f4b,#ba5f4b,#ba5f4b,#ba5f4b,#bb634d,#bd6650,#be6952,#bf6d55,#c17159,#c2745c,#c2785f,#c37b62,#c47f66,#c5836a,#c6876e,#c68a72,#c68e77,#c6917a,#c6937c,#c6947f,#c59681,#c59884,#baaba3,#baaba3,#baaba3,#baaba3,#baaba3,#baaba3,#baaba3,#baaba3,#baaba3)"></i>
</div>
<svg style="left:0;top:0" width="1150" height="799" viewBox="0 0 1150 799"><g fill="none" stroke="#3c4ea6" stroke-width="1" stroke-opacity=".85"><path d="M467 455.600H842.500L981 470.100"/><path d="M467 497.300H501V539.400H842.500L981 524.500"/></g></svg>
<!-- orientation axes -->
<svg style="left:350px;top:650px" width="80" height="65" viewBox="350 650 80 65">
<path d="M369.400 699V669" stroke="#cfcf22" stroke-width="1.300"/>
<path d="M369.400 662L372 669.600H366.800Z" fill="#d6d61e"/><path d="M366.800 669.300H372" stroke="#6e6e10" stroke-width=".8"/>
<path d="M378 699.500H399" stroke="#e01818" stroke-width="1.200"/>
<path d="M407 699.500L399 697V702Z" fill="#f01010"/>
<path d="M373 699.500H377.500" stroke="#fff" stroke-width="1"/>
<circle cx="369.400" cy="699.500" r="3.400" fill="#0b5e0b"/>
<g fill="none" stroke="#fff" stroke-width="1.100"><path d="M371.800 662.300L374.800 666L377.800 662.300M374.800 666V669.500"/><path d="M372.800 692H377.600L372.600 697.600"/><path d="M402.300 692.500L407.700 699.500M407.700 692.500L402.300 699.500"/></g>
</svg>
<!-- legend -->
<div class="a" style="left:1030px;top:578px;width:16px;height:177px;background:linear-gradient(#b40426,#c0282f 3.125%,#cb3e38 6.25%,#d55042 9.375%,#de604d 12.5%,#e57058 15.625%,#ec7f63 18.75%,#f18d6f 21.875%,#f49a7b 25%,#f7a687 28.125%,#f7b194 31.25%,#f7bba0 34.375%,#f5c4ad 37.5%,#f1ccb9 40.625%,#ecd3c5 43.75%,#e5d8d1 46.875%,#dddddd 50%,#d5dbe6 53.125%,#ccd9ee 56.25%,#c2d5f4 59.375%,#b8d0f9 62.5%,#aec9fd 65.625%,#a3c2ff 68.75%,#98b9ff 71.875%,#8db0fe 75%,#82a5fb 78.125%,#779af7 81.25%,#6c8ef1 84.375%,#6282ea 87.5%,#5775e1 90.625%,#4d68d7 93.75%,#445acc 96.875%,#3b4cc0)"></div>
<div class="a" style="left:1043px;top:578px;width:12px;height:1px;background:#fff"></div>
<div class="a" style="left:1043px;top:669px;width:12px;height:1px;background:#fff"></div>
<div class="a" style="left:1043px;top:754px;width:12px;height:1px;background:#fff"></div>
<div class="t" style="left:1061px;top:568px;font-size:15.900px;line-height:18px;color:#ececf0">1.0e+01</div>
<div class="t" style="left:1060px;top:659px;font-size:15.900px;line-height:18px;color:#ececf0">5</div>
<div class="t" style="left:1060px;top:745px;font-size:15.900px;line-height:18px;color:#ececf0">0.0e+00</div>
<div class="t" style="left:1082px;top:656.500px;width:100px;height:20px;text-align:center;font-size:17.700px;line-height:20px;color:#e8e8ee;transform:rotate(-90deg)">U Magnitude</div>
</body></html>
